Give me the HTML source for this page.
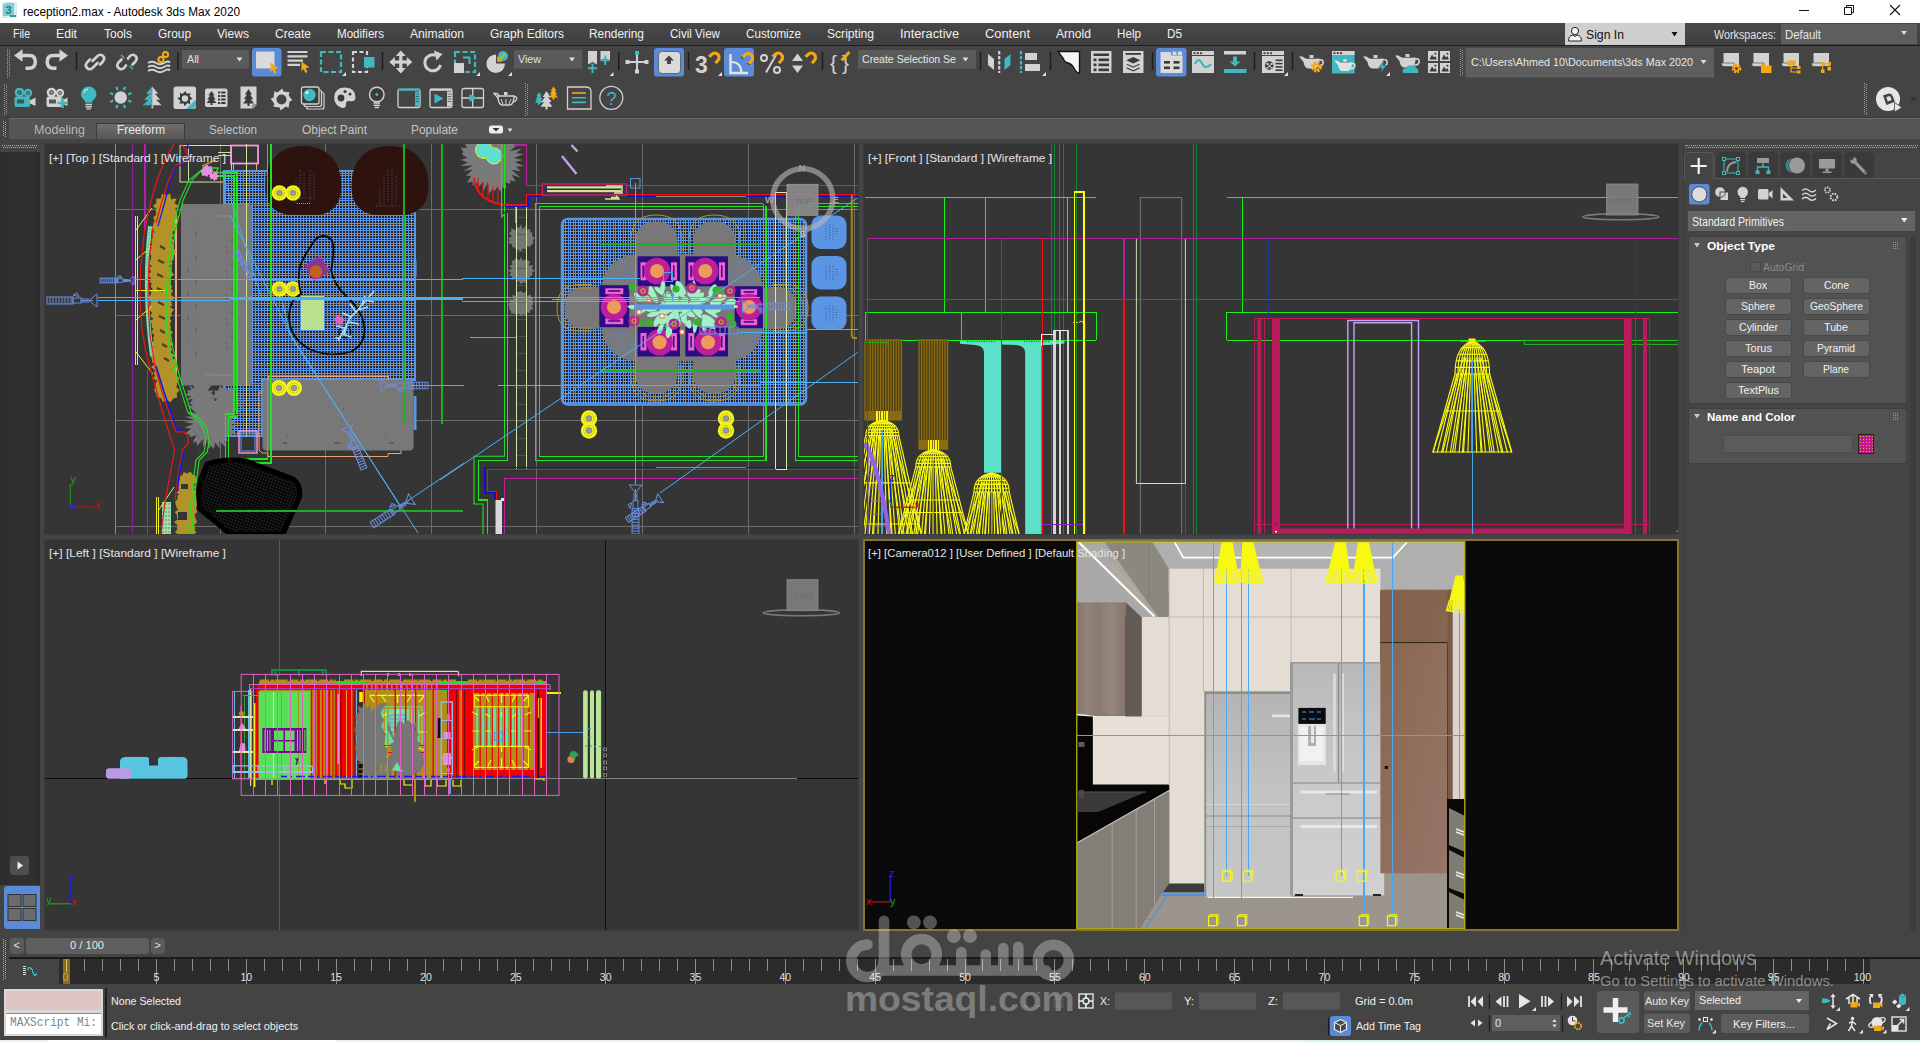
<!DOCTYPE html><html><head><meta charset="utf-8"><title>reception2.max - Autodesk 3ds Max 2020</title><style>
html,body{margin:0;padding:0;background:#444444;}
body{width:1920px;height:1042px;overflow:hidden;position:relative;font-family:"Liberation Sans",sans-serif;}
.a{position:absolute;display:block;}
.t{position:absolute;white-space:nowrap;transform-origin:0 50%;font-family:"Liberation Sans",sans-serif;}
.vp{position:absolute;overflow:hidden;background:#353535;border:1px solid #3b3b3b;box-sizing:border-box;}
svg{overflow:hidden}
</style></head><body>
<div class="a" style="left:0px;top:0px;width:1920px;height:23px;background:#ffffff;"></div>
<svg class="a" style="left:2px;top:2px" width="16" height="17" viewBox="0 0 16 17"><rect x="0" y="0" width="15" height="16" fill="#d6eef0"/><path d="M1 3 L4 1 L12 1 L12 12 L9 14 L1 14 Z" fill="#7fcdd3"/><text x="3.5" y="11.5" font-family="Liberation Sans" font-weight="bold" font-size="11" fill="#1c7f8a">3</text><rect x="8" y="13" width="6" height="2" fill="#2e9aa4"/></svg>
<span class="t" style="left:23.0px;top:3.5px;font-size:12px;line-height:16px;color:#000000;transform:scaleX(0.983);">reception2.max - Autodesk 3ds Max 2020</span>
<svg class="a" style="left:1780px;top:0" width="140" height="23" viewBox="1780 0 140 23"><path d="M1799 10.5 H1809" stroke="#111" stroke-width="1" fill="none"/><path d="M1844.5 7.5 H1851.5 V14.5 H1844.5 Z M1846.5 7.5 V5.5 H1853.5 V12.5 H1851.5" stroke="#111" stroke-width="1" fill="none"/><path d="M1890 5 L1900 15 M1900 5 L1890 15" stroke="#111" stroke-width="1.1" fill="none"/></svg>
<div class="a" style="left:0px;top:23px;width:1920px;height:23px;background:linear-gradient(#484848,#3f3f3f);"></div>
<div class="a" style="left:0px;top:45px;width:1920px;height:1px;background:#1e1e1e;"></div>
<span class="t" style="left:13.0px;top:26.0px;font-size:12px;line-height:16px;color:#f0f0f0;transform:scaleX(0.879);">File</span>
<span class="t" style="left:56.0px;top:26.0px;font-size:12px;line-height:16px;color:#f0f0f0;transform:scaleX(1.016);">Edit</span>
<span class="t" style="left:104.0px;top:26.0px;font-size:12px;line-height:16px;color:#f0f0f0;">Tools</span>
<span class="t" style="left:158.0px;top:26.0px;font-size:12px;line-height:16px;color:#f0f0f0;transform:scaleX(0.989);">Group</span>
<span class="t" style="left:217.0px;top:26.0px;font-size:12px;line-height:16px;color:#f0f0f0;transform:scaleX(1.007);">Views</span>
<span class="t" style="left:275.0px;top:26.0px;font-size:12px;line-height:16px;color:#f0f0f0;">Create</span>
<span class="t" style="left:337.0px;top:26.0px;font-size:12px;line-height:16px;color:#f0f0f0;transform:scaleX(0.965);">Modifiers</span>
<span class="t" style="left:410.0px;top:26.0px;font-size:12px;line-height:16px;color:#f0f0f0;transform:scaleX(1.012);">Animation</span>
<span class="t" style="left:490.0px;top:26.0px;font-size:12px;line-height:16px;color:#f0f0f0;">Graph Editors</span>
<span class="t" style="left:589.0px;top:26.0px;font-size:12px;line-height:16px;color:#f0f0f0;transform:scaleX(0.993);">Rendering</span>
<span class="t" style="left:670.0px;top:26.0px;font-size:12px;line-height:16px;color:#f0f0f0;transform:scaleX(0.965);">Civil View</span>
<span class="t" style="left:746.0px;top:26.0px;font-size:12px;line-height:16px;color:#f0f0f0;transform:scaleX(0.970);">Customize</span>
<span class="t" style="left:827.0px;top:26.0px;font-size:12px;line-height:16px;color:#f0f0f0;transform:scaleX(1.007);">Scripting</span>
<span class="t" style="left:900.0px;top:26.0px;font-size:12px;line-height:16px;color:#f0f0f0;transform:scaleX(1.066);">Interactive</span>
<span class="t" style="left:985.0px;top:26.0px;font-size:12px;line-height:16px;color:#f0f0f0;transform:scaleX(1.071);">Content</span>
<span class="t" style="left:1056.0px;top:26.0px;font-size:12px;line-height:16px;color:#f0f0f0;transform:scaleX(1.009);">Arnold</span>
<span class="t" style="left:1116.5px;top:26.0px;font-size:12px;line-height:16px;color:#f0f0f0;transform:scaleX(0.973);">Help</span>
<span class="t" style="left:1166.5px;top:26.0px;font-size:12px;line-height:16px;color:#f0f0f0;transform:scaleX(0.978);">D5</span>
<div class="a" style="left:1565px;top:23px;width:120px;height:22px;background:#cfcfcf;"></div>
<svg class="a" style="left:1565px;top:23px" width="120" height="22" viewBox="1565 23 120 22"><circle cx="1575" cy="31" r="3.6" fill="#f4f4f4" stroke="#222" stroke-width="1"/><path d="M1568.5 41 Q1568.5 35.5 1573 35 L1575 36.5 L1577 35 Q1581.5 35.5 1581.5 41 Z" fill="#f4f4f4" stroke="#222" stroke-width="1"/><path d="M1671.5 32 h6 l-3 4.5 z" fill="#111"/></svg>
<span class="t" style="left:1586.0px;top:26.5px;font-size:12px;line-height:16px;color:#111;transform:scaleX(1.017);">Sign In</span>
<span class="t" style="left:1714.0px;top:26.5px;font-size:12px;line-height:16px;color:#e0e0e0;transform:scaleX(0.897);">Workspaces:</span>
<div class="a" style="left:1781px;top:24px;width:136px;height:20px;background:#5e5e5e;"></div>
<span class="t" style="left:1785.0px;top:26.5px;font-size:12px;line-height:16px;color:#e6e6e6;transform:scaleX(0.947);">Default</span>
<svg class="a" style="left:1900px;top:30px" width="10" height="8"><path d="M1 1 h6 l-3 4 z" fill="#ddd"/></svg>
<svg class="a" style="left:0;top:46px" width="1920" height="72" viewBox="0 46 1920 72">
<path d="M7.5 49 V78" stroke="#9a9a9a" stroke-width="1" stroke-dasharray="1 1" shape-rendering="crispEdges"/><path d="M9.5 50 V78" stroke="#9a9a9a" stroke-width="1" stroke-dasharray="1 1" shape-rendering="crispEdges"/>
<path d="M21 55.5 H29.5 Q35.3 55.5 35.3 61.8 Q35.3 68.3 29 68.3 H25.5" fill="none" stroke="#d2d2d2" stroke-width="3.5"/><path d="M14 55.5 L22.5 49.3 V61.7 Z" fill="#d2d2d2"/>
<path d="M60 55.5 H53.2 Q47.2 55.5 47.2 61.8 Q47.2 68.3 53.5 68.3 H56.5" fill="none" stroke="#d2d2d2" stroke-width="3.5"/><path d="M68 55.5 L59.5 49.3 V61.7 Z" fill="#d2d2d2"/>
<path d="M76.5 52 V70" stroke="#1d1d1d" stroke-width="1.4"/>
<g fill="none" stroke="#d2d2d2" stroke-width="2.6" stroke-linecap="round"><path d="M92.5 61 L97.5 56 Q100.5 53.5 103 56 Q105.5 58.5 103 61.5 L100 64.5"/><path d="M97.5 63 L92.5 68 Q89.5 70.5 87 68 Q84.5 65.5 87 62.5 L90 59.5"/></g>
<g fill="none" stroke="#d2d2d2" stroke-width="2.6" stroke-linecap="round"><path d="M128 58.5 L130 56 Q133 53.5 135.5 56 Q138 58.5 135.5 61.5 L132.5 64.5"/><path d="M126 65.5 L124 68 Q121 70.5 118.5 68 Q116 65.5 118.5 62.5 L121.5 59.5"/></g><path d="M121 55 L124.5 58 M129.5 66 L133 69" stroke="#41b8bf" stroke-width="1.6"/>
<g fill="none" stroke="#d2d2d2" stroke-width="2"><path d="M148 63 Q152 60.5 156 63 T164 63 T170 62.5"/><path d="M148 67 Q152 64.5 156 67 T164 67 T170 66.5"/><path d="M148 71 Q152 68.5 156 71 T164 71 T170 70.5"/></g><g fill="none" stroke="#f4a914" stroke-width="2"><circle cx="161" cy="59.5" r="2.6"/><circle cx="165.5" cy="54.5" r="2.6"/></g>
<path d="M178 52 V70" stroke="#1d1d1d" stroke-width="1.4"/>
<rect x="182" y="50" width="67" height="18.5" fill="#5a5a5a"/><path d="M236.5 57.5 h6 l-3 4 z" fill="#ddd"/>
<rect x="252" y="48" width="29.5" height="28.5" rx="3" fill="#5b8bd8"/>
<rect x="256" y="51.5" width="18.5" height="17" fill="#dadada"/><path d="M270.5 62.5 L278.5 68.5 L274.6 69.2 L276.4 73 L274.4 73.9 L272.6 70 L270.5 72.5 Z" fill="#f4a914"/>
<g stroke="#d2d2d2" stroke-width="2.2"><path d="M287.5 52 H307.5 M287.5 56.3 H307.5 M287.5 60.6 H303 M287.5 64.9 H300"/></g><path d="M301.5 61.5 L309.5 67.5 L305.6 68.2 L307.4 72 L305.4 72.9 L303.6 69 L301.5 71.5 Z" fill="#f4a914"/>
<rect x="321" y="52" width="20" height="20" fill="none" stroke="#41b8bf" stroke-width="2.2" stroke-dasharray="5 2.5"/>
<path d="M346 76 h-4 l4 -4 z" fill="#e8e0d0"/>
<rect x="353" y="52" width="14" height="20" fill="none" stroke="#d2d2d2" stroke-width="2.2" stroke-dasharray="4 2.5"/><rect x="364" y="57" width="10.5" height="10.5" fill="#41b8bf"/>
<path d="M382.5 52 V70" stroke="#1d1d1d" stroke-width="1.4"/>
<g fill="#d2d2d2"><rect x="399.2" y="54" width="3.2" height="16"/><rect x="392.8" y="60.4" width="16" height="3.2"/><path d="M400.8 50.5 l5 5.5 h-10 z M400.8 73.5 l5 -5.5 h-10 z M389.3 62 l5.5 -5 v10 z M412.3 62 l-5.5 -5 v10 z"/></g>
<path d="M440.5 65 A8 8 0 1 1 435.5 55.3" fill="none" stroke="#d2d2d2" stroke-width="3"/><path d="M434 50.5 L442.5 54 L436.5 60.5 Z" fill="#d2d2d2"/>
<rect x="455" y="52" width="20" height="20" fill="none" stroke="#41b8bf" stroke-width="2.2" stroke-dasharray="5 2.5"/><rect x="454" y="63" width="10" height="10" fill="#d2d2d2"/><path d="M463 57.5 H469.5 V64" fill="none" stroke="#41b8bf" stroke-width="2"/>
<path d="M480 76 h-4 l4 -4 z" fill="#e8e0d0"/>
<path d="M496 54.5 A9.3 9.3 0 1 0 505 63.5 L496 63.5 Z" fill="#d2d2d2"/><circle cx="503" cy="56" r="5" fill="#41b8bf"/><path d="M505 54 L498.5 60.5 M498 56.8 V61 H502.2" stroke="#f4a914" stroke-width="1.7" fill="none"/>
<path d="M512 76 h-4 l4 -4 z" fill="#e8e0d0"/>
<rect x="514" y="50" width="68" height="18.5" fill="#5a5a5a"/><path d="M569 57.5 h6 l-3 4 z" fill="#ddd"/>
<path d="M588 51 H597 V64.5 L592.5 62 L588 64.5 Z M600.5 51 H610 V60.5 L605.2 58 L600.5 60.5 Z" fill="#d2d2d2"/><path d="M592.5 63.5 V73 M588 68.2 H597 M605.2 55.5 V65 M600.7 60.2 H609.7" stroke="#41b8bf" stroke-width="2"/>
<path d="M613.5 76 h-4 l4 -4 z" fill="#e8e0d0"/>
<path d="M618.7 52 V70" stroke="#1d1d1d" stroke-width="1.4"/>
<path d="M637 54 V72 M627 62 H647" stroke="#d2d2d2" stroke-width="2"/><rect x="635" y="51" width="4" height="4" fill="#41b8bf"/><rect x="635" y="69.5" width="4" height="4" fill="#d2d2d2"/><rect x="625.5" y="60" width="4" height="4" fill="#d2d2d2"/><rect x="644.5" y="60" width="4" height="4" fill="#d2d2d2"/>
<rect x="654" y="48" width="30" height="28.5" rx="3" fill="#5b8bd8"/>
<rect x="658.5" y="51.5" width="22" height="22" rx="3.5" fill="#dadada" stroke="#555" stroke-width="0.8"/><path d="M669 55.5 l5 5 h-3 v3.5 h-4 v-3.5 h-3 z" fill="#444"/>
<path d="M688.5 52 V70" stroke="#1d1d1d" stroke-width="1.4"/>
<text x="695" y="73" font-family="Liberation Sans" font-weight="bold" font-size="23" fill="#d2d2d2">3</text>
<g transform="translate(706.5 51.5) scale(1.0)"><path d="M2.2 5.6 L5.2 2.9 A4.3 4.3 0 0 1 11.3 9 L8.6 12" fill="none" stroke="#f4a914" stroke-width="3.1"/><path d="M1.2 4.4 L3.4 6.9 M7.4 10.9 L9.7 13.2" stroke="#444" stroke-width="1.1"/></g>
<path d="M722 76 h-4 l4 -4 z" fill="#e8e0d0"/>
<rect x="724" y="48" width="30" height="28.5" rx="3" fill="#5b8bd8"/>
<path d="M730.5 54 V73 H748" fill="none" stroke="#e4e4e4" stroke-width="2.4"/><path d="M731 62 Q741 62 741.5 72.5" fill="none" stroke="#e4e4e4" stroke-width="2.2"/>
<g transform="translate(740 52) scale(1.0)"><path d="M2.2 5.6 L5.2 2.9 A4.3 4.3 0 0 1 11.3 9 L8.6 12" fill="none" stroke="#f4a914" stroke-width="3.1"/><path d="M1.2 4.4 L3.4 6.9 M7.4 10.9 L9.7 13.2" stroke="#444" stroke-width="1.1"/></g>
<circle cx="764" cy="58" r="3" fill="none" stroke="#d2d2d2" stroke-width="2"/><circle cx="777" cy="70" r="3" fill="none" stroke="#d2d2d2" stroke-width="2"/><path d="M766 72.5 L776 55" stroke="#d2d2d2" stroke-width="2"/>
<g transform="translate(770 51.5) scale(1.0)"><path d="M2.2 5.6 L5.2 2.9 A4.3 4.3 0 0 1 11.3 9 L8.6 12" fill="none" stroke="#f4a914" stroke-width="3.1"/><path d="M1.2 4.4 L3.4 6.9 M7.4 10.9 L9.7 13.2" stroke="#444" stroke-width="1.1"/></g>
<path d="M797.5 53.5 l5.5 7.5 h-11 z M797.5 73 l5.5 -7.5 h-11 z" fill="#d2d2d2"/>
<g transform="translate(803 51.5) scale(1.0)"><path d="M2.2 5.6 L5.2 2.9 A4.3 4.3 0 0 1 11.3 9 L8.6 12" fill="none" stroke="#f4a914" stroke-width="3.1"/><path d="M1.2 4.4 L3.4 6.9 M7.4 10.9 L9.7 13.2" stroke="#444" stroke-width="1.1"/></g>
<path d="M822.5 52 V70" stroke="#1d1d1d" stroke-width="1.4"/>
<text x="830" y="70" font-family="Liberation Sans" font-size="21" fill="#d2d2d2">{</text><text x="842" y="70" font-family="Liberation Sans" font-size="21" fill="#d2d2d2">}</text><path d="M841.5 60.5 L849.5 52" stroke="#f4a914" stroke-width="3"/><path d="M840 63 l1 -3 l2 2 z" fill="#333"/>
<rect x="858" y="50" width="118" height="18.5" fill="#5a5a5a"/><path d="M962.5 57.5 h6 l-3 4 z" fill="#ddd"/>
<path d="M980.5 52 V70" stroke="#1d1d1d" stroke-width="1.4"/>
<path d="M988 54 L994 59 V70 L988 65 Z" fill="#d2d2d2"/><path d="M1010.5 54 L1004.5 59 V70 L1010.5 65 Z" fill="#41b8bf"/><path d="M999.2 51 V73" stroke="#d2d2d2" stroke-width="2.2" stroke-dasharray="3.5 1.5"/>
<path d="M1021 51 V73" stroke="#41b8bf" stroke-width="2.2" stroke-dasharray="3.5 1.5"/><rect x="1025" y="53" width="12" height="7" fill="#d2d2d2"/><rect x="1025" y="64" width="15" height="7" fill="#d2d2d2"/>
<path d="M1046 76 h-4 l4 -4 z" fill="#e8e0d0"/>
<path d="M1050.5 52 V70" stroke="#1d1d1d" stroke-width="1.4"/>
<path d="M1058 51.5 H1079.5 V73 Q1076.5 73 1074.5 69 Q1072 64 1068 63 Q1064.5 62.5 1063 58 Z" fill="#f4f4f4" stroke="#111" stroke-width="1.3"/>
<rect x="1091" y="51" width="20.5" height="22" fill="#d2d2d2"/><g fill="#3a3a3a"><rect x="1093.5" y="53.5" width="15.5" height="2.5"/><rect x="1093.5" y="58.5" width="3" height="2.7"/><rect x="1098.5" y="58.5" width="10.5" height="2.7"/><rect x="1093.5" y="63.5" width="3" height="2.7"/><rect x="1098.5" y="63.5" width="10.5" height="2.7"/><rect x="1093.5" y="68.5" width="3" height="2.7"/><rect x="1098.5" y="68.5" width="10.5" height="2.7"/></g>
<rect x="1123" y="51" width="20.5" height="22" fill="#d2d2d2"/><g fill="#3a3a3a"><rect x="1125.5" y="53" width="15.5" height="1.8"/><path d="M1133.2 57 l7 3.2 l-7 3.2 l-7 -3.2 z M1127.5 64 l5.7 2.6 l5.7 -2.6 l1.3 .6 l-7 3.2 l-7 -3.2 z M1127.5 67.6 l5.7 2.6 l5.7 -2.6 l1.3 .6 l-7 3.2 l-7 -3.2 z"/></g>
<path d="M1152.5 52 V70" stroke="#1d1d1d" stroke-width="1.4"/>
<rect x="1156" y="48" width="30.5" height="28.5" rx="3" fill="#5b8bd8"/>
<path d="M1160.5 52 H1171 V55.5 H1182.5 V73 H1160.5 Z" fill="#dadada"/><rect x="1172.5" y="51.5" width="4" height="3.5" fill="#dadada"/><rect x="1178" y="51.5" width="4" height="3.5" fill="#dadada"/><g fill="#3a3a3a"><rect x="1164" y="61" width="6" height="2.6"/><rect x="1173.5" y="61" width="6" height="2.6"/><rect x="1164" y="66.5" width="6" height="2.6"/><rect x="1173.5" y="66.5" width="6" height="2.6"/></g>
<rect x="1192" y="51" width="22" height="22" fill="#d2d2d2"/><rect x="1192" y="55" width="22" height="1" fill="#444"/><g fill="#3a3a3a"><rect x="1193.5" y="52.3" width="2" height="1.8"/><rect x="1196.8" y="52.3" width="2" height="1.8"/><rect x="1200.1" y="52.3" width="2" height="1.8"/></g><path d="M1195 64 Q1198.5 56.5 1202 63.5 T1211 64" fill="none" stroke="#41b8bf" stroke-width="2.2"/>
<rect x="1224" y="51" width="22" height="3.5" fill="#d2d2d2"/><rect x="1224" y="69" width="22.5" height="4" fill="#41b8bf"/><path d="M1233 56.5 h4 v5 h3.5 l-5.5 5 l-5.5 -5 h3.5 z" fill="#41b8bf"/>
<path d="M1254.5 52 V70" stroke="#1d1d1d" stroke-width="1.4"/>
<rect x="1262" y="51" width="22" height="22" fill="#d2d2d2"/><rect x="1262" y="55" width="22" height="1" fill="#444"/><g fill="#3a3a3a"><rect x="1263.5" y="52.3" width="2" height="1.8"/><rect x="1266.8" y="52.3" width="2" height="1.8"/><rect x="1270.1" y="52.3" width="2" height="1.8"/><rect x="1275.5" y="59.5" width="7" height="1.6"/><rect x="1275.5" y="62.8" width="7" height="1.6"/><rect x="1275.5" y="66.1" width="7" height="1.6"/><rect x="1275.5" y="69.4" width="7" height="1.6"/></g><circle cx="1269.2" cy="65.5" r="4.3" fill="#3a3a3a"/><path d="M1266.5 63 h2 v2 h-2z M1270.5 63 h2 v2 h-2z M1268.5 65 h2 v2 h-2z M1266.5 67 h2 v1.5 h-2z M1270.5 67 h2 v1.5 h-2z" fill="#d2d2d2"/>
<path d="M1288 76 h-4 l4 -4 z" fill="#e8e0d0"/>
<path d="M1292.5 52 V70" stroke="#1d1d1d" stroke-width="1.4"/>
<path d="M1303.5 58.5 Q1303 67.0 1307.5 68.5 H1315.5 Q1320 67.0 1319.5 58.5 Z" fill="#d2d2d2"/><path d="M1303.5 62.0 L1299 56.5 L1302.5 56.5 L1306 59.0 Z" fill="#d2d2d2"/><path d="M1319 60.0 Q1324 59.0 1323 63.5 Q1322 66.5 1318.5 66.0" fill="none" stroke="#d2d2d2" stroke-width="1.7"/><rect x="1309.5" y="55.0" width="4" height="3.2" fill="#d2d2d2"/><rect x="1306" y="57.9" width="11" height="1" fill="#444444" opacity="0.5"/>
<circle cx="1316.5" cy="67" r="4.2" fill="none" stroke="#f4a914" stroke-width="2.6" stroke-dasharray="2.2 1.1"/><circle cx="1316.5" cy="67" r="2.6" fill="none" stroke="#f4a914" stroke-width="1.6"/>
<rect x="1332" y="51" width="22.5" height="22.5" fill="#41b8bf"/><rect x="1332" y="51" width="22.5" height="4" fill="#d2d2d2"/><g fill="#3a3a3a"><rect x="1333.5" y="52.2" width="2" height="1.8"/><rect x="1336.8" y="52.2" width="2" height="1.8"/><rect x="1340.1" y="52.2" width="2" height="1.8"/></g>
<g transform="translate(1344.5 64) scale(0.86)"><path d="M-7.5 -2 Q-8 6.5 -3.5 8 H4.5 Q9 6.5 8.5 -2 Z" fill="#e2e2e2"/><path d="M-7.5 1.5 L-12 -4 L-8.5 -4 L-5 -1.5 Z" fill="#e2e2e2"/><path d="M8 -0.5 Q13 -1.5 12 3 Q11 6 7.5 5.5" fill="none" stroke="#e2e2e2" stroke-width="1.7"/><rect x="-1.5" y="-5.5" width="4" height="3.2" fill="#e2e2e2"/><rect x="-5" y="-2.6" width="11" height="1" fill="#444444" opacity="0.5"/></g>
<path d="M1367.5 58.5 Q1367 67.0 1371.5 68.5 H1379.5 Q1384 67.0 1383.5 58.5 Z" fill="#d2d2d2"/><path d="M1367.5 62.0 L1363 56.5 L1366.5 56.5 L1370 59.0 Z" fill="#d2d2d2"/><path d="M1383 60.0 Q1388 59.0 1387 63.5 Q1386 66.5 1382.5 66.0" fill="none" stroke="#d2d2d2" stroke-width="1.7"/><rect x="1373.5" y="55.0" width="4" height="3.2" fill="#d2d2d2"/><rect x="1370" y="57.9" width="11" height="1" fill="#444444" opacity="0.5"/>
<path d="M1384.5 60 L1378.5 68 H1382 L1380 73.5 L1386.5 65.5 H1383 Z" fill="#41b8bf" stroke="#444" stroke-width="0.6"/>
<path d="M1390 76 h-4 l4 -4 z" fill="#e8e0d0"/>
<path d="M1399.5 57.5 Q1399 66.0 1403.5 67.5 H1411.5 Q1416 66.0 1415.5 57.5 Z" fill="#d2d2d2"/><path d="M1399.5 61.0 L1395 55.5 L1398.5 55.5 L1402 58.0 Z" fill="#d2d2d2"/><path d="M1415 59.0 Q1420 58.0 1419 62.5 Q1418 65.5 1414.5 65.0" fill="none" stroke="#d2d2d2" stroke-width="1.7"/><rect x="1405.5" y="54.0" width="4" height="3.2" fill="#d2d2d2"/><rect x="1402" y="56.9" width="11" height="1" fill="#444444" opacity="0.5"/>
<path d="M1403 73 Q1401.5 68.5 1406 68 Q1407.5 64.5 1411.5 65.5 Q1415 64.5 1416 68 Q1419 68.5 1418 73 Z" fill="#41b8bf"/>
<rect x="1428" y="51" width="10" height="10" fill="#d2d2d2"/><path d="M1429.5 59.5 L1432 54.5 L1434 57.5 L1435.5 56 L1436.8 59.5 Z" fill="#3a3a3a"/><rect x="1434.5" y="52.8" width="1.8" height="1.8" fill="#3a3a3a"/>
<rect x="1440" y="51" width="10" height="10" fill="#d2d2d2"/><path d="M1441.5 59.5 L1444 54.5 L1446 57.5 L1447.5 56 L1448.8 59.5 Z" fill="#3a3a3a"/><rect x="1446.5" y="52.8" width="1.8" height="1.8" fill="#3a3a3a"/>
<rect x="1428" y="63" width="10" height="10" fill="#d2d2d2"/><path d="M1429.5 71.5 L1432 66.5 L1434 69.5 L1435.5 68 L1436.8 71.5 Z" fill="#3a3a3a"/><rect x="1434.5" y="64.8" width="1.8" height="1.8" fill="#3a3a3a"/>
<rect x="1440" y="63" width="10" height="10" fill="#d2d2d2"/><path d="M1441.5 71.5 L1444 66.5 L1446 69.5 L1447.5 68 L1448.8 71.5 Z" fill="#3a3a3a"/><rect x="1446.5" y="64.8" width="1.8" height="1.8" fill="#3a3a3a"/>
<path d="M1460.5 49 V76" stroke="#9a9a9a" stroke-width="1" stroke-dasharray="1 1" shape-rendering="crispEdges"/><path d="M1462.5 50 V76" stroke="#9a9a9a" stroke-width="1" stroke-dasharray="1 1" shape-rendering="crispEdges"/>
<rect x="1465.5" y="48" width="248.5" height="29.5" fill="#5e5e5e"/><path d="M1700.5 60 h6 l-3 4 z" fill="#ddd"/>
<path d="M1723.5 53 H1739 V66 H1725.5 Q1723.5 66 1723.5 64 Z" fill="#d2d2d2"/><path d="M1721.5 63 H1734 Q1735 66.5 1732.5 66.5 H1724 Q1721.5 66.5 1721.5 63 Z" fill="#d2d2d2" stroke="#444" stroke-width="0.6"/>
<circle cx="1736.5" cy="68.5" r="3.6" fill="none" stroke="#f4a914" stroke-width="2.4" stroke-dasharray="2 1"/><circle cx="1736.5" cy="68.5" r="2.2" fill="none" stroke="#f4a914" stroke-width="1.4"/>
<path d="M1753.5 53 H1769 V66 H1755.5 Q1753.5 66 1753.5 64 Z" fill="#d2d2d2"/><path d="M1751.5 63 H1764 Q1765 66.5 1762.5 66.5 H1754 Q1751.5 66.5 1751.5 63 Z" fill="#d2d2d2" stroke="#444" stroke-width="0.6"/>
<path d="M1761 64 H1765 L1766 65.5 H1771.5 V73 H1761 Z" fill="#f4a914"/>
<path d="M1783.5 53 H1799 V66 H1785.5 Q1783.5 66 1783.5 64 Z" fill="#d2d2d2"/><path d="M1781.5 63 H1794 Q1795 66.5 1792.5 66.5 H1784 Q1781.5 66.5 1781.5 63 Z" fill="#d2d2d2" stroke="#444" stroke-width="0.6"/>
<rect x="1787.5" y="60.5" width="8" height="4.5" fill="#f4a914"/><path d="M1791 65 V72 H1797 M1791 68 H1797" stroke="#f4a914" stroke-width="1.2" fill="none"/><rect x="1797" y="66" width="3.5" height="3" fill="#f4a914"/><rect x="1797" y="70.5" width="3.5" height="3" fill="#f4a914"/>
<path d="M1813.5 53 H1829 V66 H1815.5 Q1813.5 66 1813.5 64 Z" fill="#d2d2d2"/><path d="M1811.5 63 H1824 Q1825 66.5 1822.5 66.5 H1814 Q1811.5 66.5 1811.5 63 Z" fill="#d2d2d2" stroke="#444" stroke-width="0.6"/>
<rect x="1821" y="62" width="3.5" height="3.5" fill="#f4a914"/><rect x="1827.5" y="62" width="3.5" height="3.5" fill="#f4a914"/><rect x="1821" y="69.5" width="3.5" height="3.5" fill="#f4a914"/><rect x="1827.5" y="67" width="3.5" height="3.5" fill="#f4a914"/><path d="M1822.7 65 V70 M1824 63.7 H1828 M1829.2 65 V67.5" stroke="#f4a914" stroke-width="1.1"/>
<path d="M4.5 84 V115" stroke="#9a9a9a" stroke-width="1" stroke-dasharray="1 1" shape-rendering="crispEdges"/><path d="M6.5 85 V115" stroke="#9a9a9a" stroke-width="1" stroke-dasharray="1 1" shape-rendering="crispEdges"/>
<circle cx="19.5" cy="92.5" r="4.8" fill="#41b8bf"/><circle cx="28" cy="93.0" r="4.2" fill="#41b8bf"/><circle cx="19.5" cy="92.5" r="2.2" fill="#444444"/><circle cx="28" cy="93.0" r="1.9" fill="#444444"/><circle cx="19.5" cy="92.5" r="1" fill="#41b8bf"/><circle cx="28" cy="93.0" r="0.9" fill="#41b8bf"/><rect x="14.5" y="96.5" width="15.5" height="10.5" rx="2" fill="#41b8bf"/><path d="M30 100.5 L35.5 97.5 V106.0 L30 103.5 Z" fill="#d2d2d2"/><rect x="17" y="99.5" width="7" height="4" fill="#444444" opacity="0.85"/>
<circle cx="51.5" cy="92.5" r="4.8" fill="#d2d2d2"/><circle cx="60" cy="93.0" r="4.2" fill="#d2d2d2"/><circle cx="51.5" cy="92.5" r="2.2" fill="#444444"/><circle cx="60" cy="93.0" r="1.9" fill="#444444"/><circle cx="51.5" cy="92.5" r="1" fill="#d2d2d2"/><circle cx="60" cy="93.0" r="0.9" fill="#d2d2d2"/><rect x="46.5" y="96.5" width="15.5" height="10.5" rx="2" fill="#d2d2d2"/><path d="M62 100.5 L67.5 97.5 V106.0 L62 103.5 Z" fill="#d2d2d2"/><rect x="49" y="99.5" width="7" height="4" fill="#444444" opacity="0.85"/>
<path d="M62.5 98 V108 M57.5 103 H67.5" stroke="#41b8bf" stroke-width="2.6"/>
<path d="M80.95 94.25 A7.75 7.75 0 1 1 96.45 94.25 Q96.45 97.75 92.1875 101.25 V102.75 H85.2125 V101.25 Q80.95 97.75 80.95 94.25 Z" fill="#41b8bf"/><rect x="85.44500000000001" y="103.75" width="6.51" height="1.5" fill="#d2d2d2"/><rect x="85.44500000000001" y="106.05" width="6.51" height="1.5" fill="#d2d2d2"/><rect x="86.53" y="108.25" width="4.340000000000001" height="1.3" fill="#d2d2d2"/>
<path d="M84 93 Q84.5 89.5 88 89" fill="none" stroke="#d8f4f5" stroke-width="1.1"/>
<circle cx="120.7" cy="97.5" r="6.2" fill="#d2d2d2"/>
<path d="M128.1 100.6 L131.3 101.9" stroke="#41b8bf" stroke-width="2.2"/>
<path d="M123.8 104.9 L125.1 108.1" stroke="#41b8bf" stroke-width="2.2"/>
<path d="M117.6 104.9 L116.3 108.1" stroke="#41b8bf" stroke-width="2.2"/>
<path d="M113.3 100.6 L110.1 101.9" stroke="#41b8bf" stroke-width="2.2"/>
<path d="M113.3 94.4 L110.1 93.1" stroke="#41b8bf" stroke-width="2.2"/>
<path d="M117.6 90.1 L116.3 86.9" stroke="#41b8bf" stroke-width="2.2"/>
<path d="M123.8 90.1 L125.1 86.9" stroke="#41b8bf" stroke-width="2.2"/>
<path d="M128.1 94.4 L131.3 93.1" stroke="#41b8bf" stroke-width="2.2"/>
<clipPath id="tl"><rect x="140" y="84" width="12.2" height="30"/></clipPath><clipPath id="tr"><rect x="152.2" y="84" width="12" height="30"/></clipPath>
<g clip-path="url(#tl)"><path d="M152.2 86.5 L158.28 93.76 H154.85999999999999 L160.17999999999998 99.7 H156.0 L161.7 105.2 H153.2 V108.5 H151.2 V105.2 H142.7 L148.39999999999998 99.7 H144.22 L149.54 93.76 H146.11999999999998 Z" fill="#41b8bf"/></g><g clip-path="url(#tr)"><path d="M152.2 86.5 L158.28 93.76 H154.85999999999999 L160.17999999999998 99.7 H156.0 L161.7 105.2 H153.2 V108.5 H151.2 V105.2 H142.7 L148.39999999999998 99.7 H144.22 L149.54 93.76 H146.11999999999998 Z" fill="#d2d2d2"/></g>
<path d="M145 104 h1 M147 101 h1 M149 104 h1 M147 107 h1 M149 98 h1 M150 94 h1 M151 101 h1 M145 107.5 h1 M149.5 107.5 h1 M151 90 h1 M151 105 h1 M143 106 h1" stroke="#2a6b70" stroke-width="1"/>
<rect x="173.5" y="86.5" width="22.5" height="22.5" rx="2.5" fill="#d2d2d2"/>
<path d="M189.6 96.0 L192.8 99.2 L190.1 99.6 L190.0 100.0 L190.0 104.5 L187.8 102.9 L187.5 103.1 L184.3 106.3 L183.9 103.6 L183.5 103.5 L179.0 103.5 L180.6 101.3 L180.4 101.0 L177.2 97.8 L179.9 97.4 L180.0 97.0 L180.0 92.5 L182.2 94.1 L182.5 93.9 L185.7 90.7 L186.1 93.4 L186.5 93.5 L191.0 93.5 L189.4 95.7 Z" fill="#3a3a3a"/><circle cx="185" cy="98.5" r="4.9" fill="#3a3a3a"/>
<circle cx="185" cy="98.5" r="3.2" fill="#d2d2d2"/>
<path d="M196 99.5 V106 L193 109 H186 Z" fill="#41b8bf"/><path d="M186 99.5 H196 L186 109 Z" fill="#d2d2d2" opacity="0"/>
<rect x="205" y="88.5" width="22.5" height="18.5" rx="2" fill="#d2d2d2"/>
<path d="M211.5 91 L214.7 95.62 H212.9 L215.7 99.4 H213.5 L216.5 102.9 H212.5 V105 H210.5 V102.9 H206.5 L209.5 99.4 H207.3 L210.1 95.62 H208.3 Z" fill="#3a3a3a"/>
<g fill="#3a3a3a"><rect x="218" y="91.5" width="2.2" height="2"/><rect x="221.2" y="91.5" width="4.3" height="2"/><rect x="218" y="95" width="2.2" height="2"/><rect x="221.2" y="95" width="4.3" height="2"/><rect x="218" y="98.5" width="2.2" height="2"/><rect x="221.2" y="98.5" width="4.3" height="2"/><rect x="218" y="102" width="2.2" height="2"/><rect x="221.2" y="102" width="4.3" height="2"/></g>
<path d="M240.5 86.5 H256.5 V105 L253 108.5 H240.5 Z" fill="#d2d2d2"/><path d="M253 108.5 V105 H256.5" fill="none" stroke="#3a3a3a" stroke-width="0.8"/>
<path d="M248.5 89 L252.02 94.61 H250.04 L253.12 99.2 H250.7 L254.0 103.45 H249.5 V106 H247.5 V103.45 H243.0 L246.3 99.2 H243.88 L246.96 94.61 H244.98 Z" fill="#3a3a3a"/>
<path d="M288.8 95.5 L292.4 100.5 L289.6 101.2 L289.5 101.8 L288.5 107.9 L286.0 106.5 L285.5 106.8 L280.5 110.4 L279.8 107.6 L279.2 107.5 L273.1 106.5 L274.5 104.0 L274.2 103.5 L270.6 98.5 L273.4 97.8 L273.5 97.2 L274.5 91.1 L277.0 92.5 L277.5 92.2 L282.5 88.6 L283.2 91.4 L283.8 91.5 L289.9 92.5 L288.5 95.0 Z" fill="#d2d2d2"/><circle cx="281.5" cy="99.5" r="8.0" fill="#d2d2d2"/>
<circle cx="281.5" cy="99.5" r="5" fill="#444444"/>
<rect x="306.5" y="92.5" width="17.5" height="16.5" rx="2" fill="none" stroke="#d2d2d2" stroke-width="1.2"/><rect x="304" y="90" width="17.5" height="16.5" rx="2" fill="#444444" stroke="#d2d2d2" stroke-width="1.2"/><rect x="301.5" y="87" width="17.5" height="17" rx="2" fill="#3a3a3a" stroke="#d2d2d2" stroke-width="1.3"/><circle cx="309.5" cy="95" r="6.2" fill="#41b8bf"/><circle cx="307" cy="92.5" r="1.6" fill="#d8f4f5"/>
<path d="M345 87.5 Q355.5 88 355.5 97.5 Q355 102.5 349.5 101 Q345.5 100.5 346 104.5 Q346 108.5 342 108 Q334 105.5 334.2 97 Q335 87.5 345 87.5 Z" fill="#d2d2d2"/><circle cx="341" cy="98" r="3.4" fill="#3a3a3a"/><circle cx="345" cy="91.5" r="1.6" fill="#3a3a3a"/><circle cx="350" cy="94" r="1.5" fill="#3a3a3a"/>
<circle cx="376.8" cy="94.5" r="7.3" fill="none" stroke="#d2d2d2" stroke-width="1.4"/><circle cx="376.8" cy="94.5" r="4.6" fill="none" stroke="#3a3a3a" stroke-width="2.4" stroke-dasharray="1.8 1.2"/><circle cx="376.8" cy="94.5" r="3.4" fill="#3a3a3a"/><circle cx="376.8" cy="94.5" r="1.5" fill="#41b8bf"/><rect x="373.6" y="102.3" width="6.4" height="1.5" fill="#d2d2d2"/><rect x="373.6" y="104.6" width="6.4" height="1.5" fill="#d2d2d2"/><rect x="374.6" y="106.8" width="4.4" height="1.4" fill="#d2d2d2"/>
<rect x="398" y="89.5" width="22" height="18" rx="1.5" fill="none" stroke="#d2d2d2" stroke-width="1.3"/><rect x="398" y="88.5" width="22" height="2.2" fill="#41b8bf"/><rect x="415" y="91.5" width="4.5" height="15" fill="#41b8bf"/><path d="M415.5 94 h3.5 M415.5 96.5 h3.5 M415.5 99 h3.5 M415.5 101.5 h3.5" stroke="#2a6b70" stroke-width="0.9"/>
<rect x="430" y="89.5" width="22" height="18" rx="1.5" fill="none" stroke="#d2d2d2" stroke-width="1.3"/><rect x="430" y="88.5" width="22" height="2.2" fill="#d2d2d2"/><rect x="447" y="91.5" width="4.5" height="15" fill="#d2d2d2"/><path d="M447.5 94 h3.5 M447.5 96.5 h3.5 M447.5 99 h3.5 M447.5 101.5 h3.5" stroke="#555" stroke-width="0.9"/><path d="M434.5 93.5 L443.5 98.5 L434.5 103.5 Z" fill="#41b8bf"/>
<rect x="462" y="88.5" width="21.5" height="19" rx="2" fill="none" stroke="#d2d2d2" stroke-width="1.3"/><path d="M472.7 88.5 V107.5 M462 98 H483.5" stroke="#d2d2d2" stroke-width="1.3"/><path d="M469.5 94 L477.5 98 L469.5 102 Z" fill="#41b8bf"/>
<path d="M498 96 Q498 104 502 105 H510 Q514 104 514 96 Z" fill="none" stroke="#d2d2d2" stroke-width="1.4"/><path d="M498 98 L494 93.5 H497 L499.5 96" fill="none" stroke="#d2d2d2" stroke-width="1.3"/><path d="M513.5 96.5 Q517.5 96 516.5 99.5 Q515.5 102 513 101.5" fill="none" stroke="#d2d2d2" stroke-width="1.3"/><rect x="504" y="92" width="3.5" height="3" fill="#d2d2d2"/><path d="M501 99 L503 104 M506 99 V104.5 M511 99 L509 104" stroke="#d2d2d2" stroke-width="1"/>
<path d="M525.5 83 V116" stroke="#9a9a9a" stroke-width="1" stroke-dasharray="1 1" shape-rendering="crispEdges"/><path d="M527.5 84 V116" stroke="#9a9a9a" stroke-width="1" stroke-dasharray="1 1" shape-rendering="crispEdges"/>
<path d="M539 92 L541.72 96.125 H540.19 L542.57 99.5 H540.7 L543.25 102.625 H540 V104.5 H538 V102.625 H534.75 L537.3 99.5 H535.43 L537.81 96.125 H536.28 Z" fill="#41b8bf"/>
<path d="M553.5 86.5 L556.38 90.79 H554.76 L557.28 94.3 H555.3 L558.0 97.55 H554.5 V99.5 H552.5 V97.55 H549.0 L551.7 94.3 H549.72 L552.24 90.79 H550.62 Z" fill="#f4a914"/>
<path d="M546.5 91 L550.34 97.105 H548.18 L551.54 102.1 H548.9 L552.5 106.725 H547.5 V109.5 H545.5 V106.725 H540.5 L544.1 102.1 H541.46 L544.82 97.105 H542.66 Z" fill="#d2d2d2"/>
<path d="M567.5 87 H586 Q591 87 591 92 V109 H567.5 Z" fill="none" stroke="#d2d2d2" stroke-width="1.3"/><path d="M572 93 H586" stroke="#f4a914" stroke-width="1.6"/><path d="M572 97.7 H586 M572 102.4 H586" stroke="#41b8bf" stroke-width="1.6"/>
<circle cx="611.3" cy="97.8" r="11.5" fill="none" stroke="#d2d2d2" stroke-width="1.3"/><text x="606.6" y="104.5" font-family="Liberation Sans" font-size="18" fill="#41b8bf">?</text>
<path d="M1864.5 83 V115" stroke="#9a9a9a" stroke-width="1" stroke-dasharray="1 1" shape-rendering="crispEdges"/><path d="M1866.5 84 V115" stroke="#9a9a9a" stroke-width="1" stroke-dasharray="1 1" shape-rendering="crispEdges"/>
<circle cx="1888" cy="99" r="12" fill="#e6e6e6"/><path d="M1884.5 94 H1889 Q1893.5 94 1893.5 98 V104 H1884.5 Z M1887 96.8 V101.2 H1891 V98 Q1891 96.8 1889.8 96.8 Z" fill="#444444" fill-rule="evenodd" transform="rotate(-20 1888 99)"/><path d="M1894.5 102.5 L1902 107.5 L1894.5 112 Z" fill="#e6e6e6" stroke="#444444" stroke-width="0.8"/>
<path d="M1911 97 l2.2 2 l-2.2 2 M1914 97 l2.2 2 l-2.2 2" fill="none" stroke="#222" stroke-width="0.9"/>
</svg>
<span class="t" style="left:187.0px;top:52.2px;font-size:11.5px;line-height:15.5px;color:#e0e0e0;transform:scaleX(0.939);">All</span>
<span class="t" style="left:518.0px;top:52.2px;font-size:11.5px;line-height:15.5px;color:#e0e0e0;transform:scaleX(0.931);">View</span>
<span class="t" style="left:862.0px;top:51.8px;font-size:11.5px;line-height:15.5px;color:#e6e6e6;transform:scaleX(0.919);">Create Selection Se</span>
<span class="t" style="left:1471.0px;top:55.2px;font-size:11.5px;line-height:15.5px;color:#e6e6e6;transform:scaleX(0.936);">C:\Users\Ahmed 10\Documents\3ds Max 2020</span>
<div class="a" style="left:0px;top:117px;width:1920px;height:1px;background:#3a3a3a;"></div>
<div class="a" style="left:9px;top:119px;width:1911px;height:20px;background:#555555;"></div>
<div class="a" style="left:9px;top:118px;width:1911px;height:1px;background:#6a6a6a;"></div>
<div class="a" style="left:0px;top:139px;width:1920px;height:4px;background:#444444;"></div>
<svg class="a" style="left:0;top:119px" width="9" height="20"><path d="M3.5 2 V18 M5.5 3 V18" stroke="#aaa" stroke-width="1" stroke-dasharray="1 1"/></svg>
<div class="a" style="left:96px;top:122.5px;width:89px;height:16.5px;background:linear-gradient(#6e6e6e,#585858);border:1px solid #3c3c3c;border-bottom:none;box-sizing:border-box;"></div>
<span class="t" style="left:34.0px;top:121.5px;font-size:12px;line-height:16px;color:#b8b8b8;transform:scaleX(1.047);">Modeling</span>
<span class="t" style="left:116.5px;top:121.5px;font-size:12px;line-height:16px;color:#e8e8e8;transform:scaleX(0.986);">Freeform</span>
<span class="t" style="left:208.5px;top:121.5px;font-size:12px;line-height:16px;color:#c4c4c4;transform:scaleX(0.972);">Selection</span>
<span class="t" style="left:301.5px;top:121.5px;font-size:12px;line-height:16px;color:#c4c4c4;transform:scaleX(0.994);">Object Paint</span>
<span class="t" style="left:410.5px;top:121.5px;font-size:12px;line-height:16px;color:#c4c4c4;transform:scaleX(0.992);">Populate</span>
<svg class="a" style="left:486px;top:122px" width="34" height="16" viewBox="486 122 34 16"><rect x="489" y="125.5" width="14" height="8" rx="2.5" fill="#eee"/><path d="M492.5 128 h7 l-3.5 3.5 z" fill="#333"/><path d="M507.5 128.5 h5 l-2.5 3.5 z" fill="#ddd"/></svg>
<svg class="a" style="left:0;top:143px" width="44" height="8"><path d="M2 2.5 H37" stroke="#b0b0b0" stroke-width="1" stroke-dasharray="1 1"/><path d="M3 4.5 H37" stroke="#b0b0b0" stroke-width="1" stroke-dasharray="1 1"/></svg>
<div class="a" style="left:0px;top:152px;width:40px;height:733px;background:linear-gradient(90deg,#2c2c2c,#303030 30%,#303030 80%,#2b2b2b);"></div>
<div class="a" style="left:0px;top:885px;width:40px;height:46px;background:#444;"></div>
<div class="a" style="left:10px;top:856px;width:19px;height:19px;background:#4e4e4e;border-radius:3px;"></div>
<svg class="a" style="left:10px;top:856px" width="19" height="19"><path d="M7.5 5.5 L13 9.5 L7.5 13.5 Z" fill="#f0f0f0"/></svg>
<div class="a" style="left:4px;top:886px;width:36px;height:43px;background:#5b8bd8;border-radius:3px 0 0 3px;"></div>
<svg class="a" style="left:4px;top:886px" width="36" height="43"><g fill="#6b6b6b" stroke="#333" stroke-width="1"><rect x="4" y="8.5" width="13" height="12"/><rect x="19" y="8.5" width="13" height="12"/><rect x="4" y="22.5" width="13" height="12"/><rect x="19" y="22.5" width="13" height="12"/></g></svg>
<div class="vp" style="left:44px;top:143px;width:815px;height:392px"></div>
<div class="vp" style="left:863px;top:143px;width:816px;height:392px"></div>
<div class="vp" style="left:44px;top:539px;width:815px;height:392px"></div>
<div class="vp" style="left:863px;top:539px;width:816px;height:392px;background:#0a0a0a;border:2px solid #8a7530"></div>
<div class="a" style="left:1683px;top:143px;width:1px;height:789px;background:#3b3b3b"></div>
<svg class="a" style="left:45px;top:144px" width="813" height="390" viewBox="45 144 813 390"><defs><pattern id="mesh" width="3" height="5" patternUnits="userSpaceOnUse"><rect width="3" height="5" fill="#5893ec"/><rect x="1" y="1" width="2" height="2" fill="#2c2012"/><rect x="1" y="4" width="2" height="1" fill="#2c2012"/></pattern><pattern id="mesh2" width="5" height="3" patternUnits="userSpaceOnUse"><rect width="5" height="3" fill="#5893ec"/><rect x="1" y="1" width="2" height="2" fill="#2c2012"/><rect x="4" y="1" width="1" height="2" fill="#2c2012"/></pattern><pattern id="bmesh" width="3" height="3" patternUnits="userSpaceOnUse" patternTransform="rotate(20)"><rect width="3" height="3" fill="#000"/><path d="M0 0.5 H3 M0.5 0 V3" stroke="#2a2a2a" stroke-width="0.6"/></pattern><pattern id="gdots" width="3" height="3" patternUnits="userSpaceOnUse"><rect x="0" y="0" width="1" height="1" fill="#5c6f9a"/></pattern></defs>
<path d="M115 209.5 H857.5" stroke="#6c6c6c" stroke-width="1" shape-rendering="crispEdges"/>
<path d="M115 315.2 H857.5" stroke="#6c6c6c" stroke-width="1" shape-rendering="crispEdges"/>
<path d="M115 420.9 H857.5" stroke="#6c6c6c" stroke-width="1" shape-rendering="crispEdges"/>
<path d="M115 526.5 H857.5" stroke="#6c6c6c" stroke-width="1" shape-rendering="crispEdges"/>
<path d="M220 144 V534" stroke="#6c6c6c" stroke-width="1" shape-rendering="crispEdges"/>
<path d="M325.6 144 V534" stroke="#6c6c6c" stroke-width="1" shape-rendering="crispEdges"/>
<path d="M431.4 144 V534" stroke="#6c6c6c" stroke-width="1" shape-rendering="crispEdges"/>
<path d="M536.8 144 V534" stroke="#6c6c6c" stroke-width="1" shape-rendering="crispEdges"/>
<path d="M642.8 144 V534" stroke="#6c6c6c" stroke-width="1" shape-rendering="crispEdges"/>
<path d="M748.5 144 V534" stroke="#6c6c6c" stroke-width="1" shape-rendering="crispEdges"/>
<path d="M854.6 144 V534" stroke="#6c6c6c" stroke-width="1" shape-rendering="crispEdges"/>
<rect x="180" y="145.5" width="51.5" height="36.5" fill="none" stroke="#cfe39a" stroke-width="1"/>
<path d="M188.5 146 V182" stroke="#cfe39a" stroke-width="1" shape-rendering="crispEdges"/>
<path d="M224 170.5 H412.5 Q414.5 170.5 414.5 173 V380 H262 V436 H224 Z" fill="url(#mesh)" stroke="#5a96e6" stroke-width="2" shape-rendering="crispEdges"/>
<rect x="413.5" y="260" width="3" height="17" fill="#5a96e6"/><rect x="413.5" y="396" width="3" height="34" fill="#5a96e6"/>
<rect x="181" y="204" width="71" height="181.5" rx="3" fill="#787878"/>
<rect x="262.5" y="380" width="151" height="70.5" rx="4" fill="#787878"/>
<path d="M176.0 214.0 L176.0 382.0" fill="none" stroke="#f0a888" stroke-width="1.6"  shape-rendering="crispEdges"/>
<path d="M268.5 380.0 L268.5 376.5 L388.0 376.5 L388.0 380.0" fill="none" stroke="#f0a070" stroke-width="1"  shape-rendering="crispEdges"/>
<path d="M262.0 392.0 L259.0 392.0 L259.0 450.0 L262.0 453.0 L268.0 453.0 L268.0 456.5 L388.0 456.5 L388.0 453.5 L401.0 453.5 L401.0 450.0" fill="none" stroke="#f0a070" stroke-width="1" />
<path d="M188 258 V343" stroke="#5a5a5a" stroke-width="0.8" stroke-dasharray="1 6 1 2 5 9"/>
<path d="M196 222 V361" stroke="#5a5a5a" stroke-width="0.8" stroke-dasharray="1 6 1 2 5 9"/>
<path d="M227 240 V352" stroke="#5a5a5a" stroke-width="0.8" stroke-dasharray="1 6 1 2 5 9"/>
<path d="M232 228 V352" stroke="#5a5a5a" stroke-width="0.8" stroke-dasharray="1 6 1 2 5 9"/>
<path d="M214 216 H230 M206 375 H232" stroke="#e8a080" stroke-width="0.8" stroke-dasharray="1 1.5"/>
<path d="M283 443 H287 M334 443 H340 M389 443 H394 M287 435 h1 M385 435 h1 M343 409 h1" stroke="#444" stroke-width="1"/>
<path d="M236.8 422.0 L231.1 424.1 L236.7 427.5 L229.8 428.1 L235.8 433.1 L232.2 434.2 L231.3 436.7 L224.1 433.8 L228.3 441.3 L224.5 440.6 L225.2 446.7 L219.5 441.1 L219.6 448.6 L215.3 442.4 L213.8 449.1 L211.0 445.7 L208.2 449.1 L207.4 439.0 L202.7 447.5 L203.5 438.9 L197.3 445.7 L196.6 441.8 L192.5 442.6 L196.3 435.3 L189.9 437.3 L189.6 434.4 L185.4 433.4 L191.2 428.4 L184.1 427.7 L193.8 423.8 L183.5 422.0 L194.2 420.2 L185.2 416.5 L193.9 416.4 L186.7 411.2 L196.4 413.6 L188.3 405.5 L193.1 405.8 L194.0 403.1 L197.4 403.3 L196.8 397.4 L202.4 402.6 L202.6 396.1 L206.3 400.1 L208.2 395.4 L211.0 400.4 L213.7 395.9 L215.1 402.6 L219.4 396.3 L218.0 406.4 L224.7 398.3 L220.9 408.4 L229.7 401.2 L223.1 411.1 L233.1 405.9 L231.4 410.2 L236.6 410.6 L226.7 416.9 L238.6 416.1 L230.9 419.9 Z" fill="#7a7a7a"/>
<path d="M213.5 395.0 L212.3 397.2 L213.0 399.7 L210.6 401.1 L210.1 403.4 L207.0 403.4 L207.5 407.9 L203.0 403.3 L202.5 409.4 L200.0 406.8 L197.5 408.9 L196.0 405.9 L193.3 406.6 L192.0 404.5 L189.7 403.6 L192.9 399.1 L186.2 400.0 L191.3 396.5 L185.3 395.0 L188.2 392.9 L187.2 390.3 L191.6 390.1 L188.9 385.7 L194.5 388.4 L192.6 382.2 L195.7 383.2 L197.5 381.0 L200.0 385.5 L202.4 381.2 L204.1 383.7 L207.0 382.9 L208.1 385.4 L211.4 385.4 L207.4 390.8 L213.3 390.2 L211.3 393.0 Z" fill="#7a7a7a"/>
<path d="M245.6 402.0 L239.1 404.0 L244.9 408.2 L236.6 407.0 L241.7 413.5 L234.5 409.7 L236.0 415.9 L232.5 414.2 L231.2 420.1 L228.0 413.8 L224.8 420.0 L222.8 416.4 L219.4 416.9 L218.7 413.0 L214.7 413.2 L217.3 408.2 L212.9 407.5 L213.6 404.5 L211.3 402.0 L218.0 400.2 L211.1 395.9 L215.0 394.5 L214.2 390.4 L218.3 390.4 L219.2 386.8 L222.8 387.7 L225.2 386.2 L228.0 391.6 L230.9 385.7 L233.0 388.3 L237.3 386.0 L234.7 394.0 L240.8 391.2 L236.5 397.1 L244.3 396.1 L239.5 400.0 Z" fill="#7a7a7a"/>
<rect x="190" y="425" width="26" height="28" fill="url(#gdots)" opacity="0.0"/>
<path d="M193 428 l16 26 M198 426 l14 24 M203 426 l12 20 M190 436 l10 16" stroke="#555" stroke-width="0.8" stroke-dasharray="1 1"/>
<path d="M232 385 h18 v26 h-14 z" fill="url(#mesh)" opacity="0.55"/>
<path d="M265.5 186 C265.5 160 280 146 303 146 C326 146 341.3 160 341.3 186 C341.3 202 334 213 318 215 L290 215 C272 213 265.5 202 265.5 186 Z" fill="#2e120e"/><path d="M351.5 186 C351.5 160 366 146 390 146 C413 146 428.5 160 428.5 186 C428.5 202 421 213 405 215 L376 215 C358 213 351.5 202 351.5 186 Z" fill="#2e120e"/>
<path d="M300 170 V200 M304 172 V196 M310 170 V204 M314 174 V200 M296 180 V204 M292 198 H312" stroke="#4a5878" stroke-width="1" stroke-dasharray="1 1.6"/>
<path d="M388 170 V204 M392 170 V206 M384 178 V206 M396 176 V204 M380 190 V206 M376 206 H402" stroke="#4a5878" stroke-width="1" stroke-dasharray="1 1.6"/>
<path d="M297 203.5 H311" stroke="#e08060" stroke-width="1" stroke-dasharray="1 1"/>
<circle cx="279.5" cy="193" r="7.8" fill="#f4f418"/><circle cx="279.5" cy="193" r="4.836" fill="none" stroke="#8a8a20" stroke-width="0.7" stroke-dasharray="1.2 1"/><circle cx="279.5" cy="193" r="2.808" fill="#9a9a9a" stroke="#777" stroke-width="0.6"/>
<circle cx="293" cy="193" r="7.8" fill="#f4f418"/><circle cx="293" cy="193" r="4.836" fill="none" stroke="#8a8a20" stroke-width="0.7" stroke-dasharray="1.2 1"/><circle cx="293" cy="193" r="2.808" fill="#9a9a9a" stroke="#777" stroke-width="0.6"/>
<circle cx="279.5" cy="289" r="7.8" fill="#f4f418"/><circle cx="279.5" cy="289" r="4.836" fill="none" stroke="#8a8a20" stroke-width="0.7" stroke-dasharray="1.2 1"/><circle cx="279.5" cy="289" r="2.808" fill="#9a9a9a" stroke="#777" stroke-width="0.6"/>
<circle cx="293" cy="289" r="7.8" fill="#f4f418"/><circle cx="293" cy="289" r="4.836" fill="none" stroke="#8a8a20" stroke-width="0.7" stroke-dasharray="1.2 1"/><circle cx="293" cy="289" r="2.808" fill="#9a9a9a" stroke="#777" stroke-width="0.6"/>
<circle cx="279" cy="388" r="8" fill="#f4f418"/><circle cx="279" cy="388" r="4.96" fill="none" stroke="#8a8a20" stroke-width="0.7" stroke-dasharray="1.2 1"/><circle cx="279" cy="388" r="2.88" fill="#9a9a9a" stroke="#777" stroke-width="0.6"/>
<circle cx="294" cy="388" r="8" fill="#f4f418"/><circle cx="294" cy="388" r="4.96" fill="none" stroke="#8a8a20" stroke-width="0.7" stroke-dasharray="1.2 1"/><circle cx="294" cy="388" r="2.88" fill="#9a9a9a" stroke="#777" stroke-width="0.6"/>
<path d="M323 236 Q333 236 333.5 248 Q333 262 331 270 Q334 285 347 297 Q364 312 364.5 330 Q364 346 350 352 Q330 358 309 349 Q290 338 289 318 Q289 300 301 294 Q297 280 300 266 Q305 254 311 246 Q316 236 323 236 Z" fill="none" stroke="#0a0a0a" stroke-width="1.8"/>
<circle cx="345" cy="332" r="6" fill="none" stroke="#0a0a0a" stroke-width="1"/>
<rect x="308.5" y="260" width="17" height="17" fill="#7a3a90" stroke="#c020a0" stroke-width="1.6" transform="rotate(-32 317 268.5)"/><circle cx="316" cy="271.5" r="6.3" fill="#c2621a"/>
<rect x="301" y="296" width="23" height="34" fill="#b8e08e"/>
<path d="M374 291 L356 312 L350 318 L344 330 L338 341 M358 310 l10 -3 M352 317 l-10 -4 M349 322 l10 2 M345 328 l-9 -2 M343 334 l8 3 M362 304 l3 -8 M356 312 l-6 -8 M366 300 l8 2 M341 338 l-6 0 M347 326 l-3 8" stroke="#a8dcec" stroke-width="1.6" fill="none"/>
<path d="M344.3 320.0 L343.3 321.8 L342.9 323.9 L340.9 324.5 L339.0 325.4 L337.4 323.9 L335.4 323.6 L335.3 321.5 L334.0 320.0 L335.2 318.4 L335.4 316.4 L337.2 315.5 L339.0 314.7 L340.3 316.9 L342.6 316.4 L343.2 318.3 Z" fill="#e060c0"/>
<path d="M115.4 144 V534" stroke="#d060c0" stroke-width="1.3" shape-rendering="crispEdges"/>
<path d="M132.5 144 V534" stroke="#8a1fa0" stroke-width="1.2" shape-rendering="crispEdges"/>
<path d="M145 144 V230" stroke="#b020b0" stroke-width="1.2" shape-rendering="crispEdges"/>
<path d="M147.3 370 V534" stroke="#b020b0" stroke-width="1.2" shape-rendering="crispEdges"/>
<path d="M179.3 206.0 L174.9 208.9 L176.3 213.4 L172.6 214.9 L170.0 218.1 L166.1 216.5 L162.1 218.5 L159.7 214.8 L155.9 213.4 L156.7 209.1 L152.8 206.0 L156.4 202.9 L156.1 198.7 L160.7 198.5 L162.1 193.8 L166.1 194.9 L170.2 193.4 L171.1 199.2 L176.7 198.3 L174.4 203.3 Z" fill="#b3922a"/>
<path d="M177.8 217.5 L174.2 220.2 L176.3 225.0 L172.3 226.2 L169.8 229.3 L165.9 227.6 L162.0 229.5 L160.7 224.7 L156.4 224.5 L154.9 221.1 L153.1 217.5 L156.3 214.4 L155.6 210.0 L159.1 208.0 L162.1 205.8 L165.9 208.3 L169.7 206.1 L170.9 210.7 L176.4 209.9 L177.0 213.9 Z" fill="#b3922a"/>
<path d="M177.5 229.0 L172.3 231.7 L173.9 236.1 L171.0 238.5 L168.1 241.6 L164.0 238.4 L160.0 241.4 L157.6 237.9 L153.6 236.6 L154.7 232.0 L151.1 229.0 L153.1 225.4 L153.8 221.5 L157.8 220.4 L160.0 216.5 L164.0 220.5 L168.2 216.2 L170.0 220.8 L174.3 221.5 L174.6 225.6 Z" fill="#b3922a"/>
<path d="M174.6 240.5 L171.9 243.6 L172.4 247.8 L168.1 248.3 L166.4 252.6 L162.4 252.1 L158.8 251.8 L157.2 247.7 L152.6 247.7 L152.0 243.9 L149.2 240.5 L152.8 237.4 L151.9 232.8 L156.5 232.3 L158.5 228.4 L162.4 229.2 L166.4 228.4 L167.6 233.4 L172.6 233.1 L171.2 237.7 Z" fill="#b3922a"/>
<path d="M175.6 252.0 L174.2 255.8 L173.3 259.8 L169.6 261.8 L166.5 264.2 L162.5 263.2 L158.2 265.4 L156.9 259.8 L151.3 260.1 L151.3 255.7 L149.0 252.0 L151.5 248.4 L152.0 244.4 L155.3 242.1 L158.5 239.6 L162.5 242.8 L166.8 238.7 L168.2 244.2 L173.8 243.8 L173.9 248.3 Z" fill="#b3922a"/>
<path d="M172.8 263.5 L169.1 266.2 L170.7 270.7 L165.5 270.0 L164.6 275.1 L160.8 271.6 L157.3 274.2 L155.1 271.3 L150.7 270.8 L152.2 266.3 L148.4 263.5 L150.5 260.2 L151.2 256.5 L154.7 255.1 L157.1 252.1 L160.8 254.2 L164.3 252.8 L166.9 255.0 L170.2 256.7 L168.5 261.0 Z" fill="#b3922a"/>
<path d="M174.2 275.0 L169.4 278.0 L171.2 282.9 L167.2 284.5 L164.2 287.1 L160.3 285.2 L156.2 287.8 L154.5 283.0 L149.5 282.8 L151.0 278.0 L147.2 275.0 L151.1 272.0 L149.1 266.9 L153.8 266.0 L156.1 262.1 L160.3 264.9 L164.3 262.6 L166.5 266.4 L171.6 266.8 L171.4 271.4 Z" fill="#b3922a"/>
<path d="M172.1 286.5 L170.7 289.6 L170.3 293.1 L167.2 294.8 L164.7 297.1 L161.2 295.8 L158.0 296.5 L156.1 293.7 L152.8 292.7 L152.6 289.3 L150.7 286.5 L151.6 283.4 L152.4 280.1 L156.6 280.2 L158.0 276.4 L161.2 276.8 L164.7 275.8 L165.6 280.5 L170.3 279.9 L170.0 283.7 Z" fill="#b3922a"/>
<path d="M175.3 298.0 L170.7 300.9 L172.6 305.9 L167.9 306.4 L165.9 310.7 L161.8 310.2 L157.2 312.1 L154.5 308.0 L150.3 306.4 L151.0 301.5 L147.9 298.0 L151.1 294.5 L150.9 290.1 L155.9 290.0 L157.7 285.3 L161.8 285.7 L165.9 285.4 L168.9 288.2 L173.0 289.9 L170.9 295.0 Z" fill="#b3922a"/>
<path d="M174.1 309.5 L171.5 312.8 L171.3 316.8 L166.6 316.8 L165.0 321.1 L161.3 319.8 L157.1 322.3 L154.3 319.1 L150.8 317.1 L151.9 312.6 L149.1 309.5 L151.0 306.2 L150.6 301.8 L155.1 301.0 L157.2 296.9 L161.3 297.9 L165.1 297.6 L168.2 300.0 L171.7 301.9 L169.6 306.8 Z" fill="#b3922a"/>
<path d="M171.7 321.0 L169.2 323.8 L169.6 327.5 L166.4 328.9 L164.2 331.8 L160.7 328.8 L157.2 331.6 L154.9 329.0 L151.8 327.5 L151.8 323.9 L150.0 321.0 L153.6 318.7 L151.3 314.2 L154.7 312.7 L157.1 310.1 L160.7 312.5 L164.0 310.7 L166.2 313.3 L169.7 314.4 L169.2 318.2 Z" fill="#b3922a"/>
<path d="M173.0 332.5 L170.3 335.2 L171.4 339.3 L167.3 339.8 L165.4 343.1 L162.0 341.1 L158.7 342.7 L156.8 339.7 L152.9 339.1 L154.4 335.0 L151.4 332.5 L152.9 329.6 L153.4 326.3 L157.3 326.1 L158.5 321.7 L162.0 322.2 L165.6 321.4 L166.4 326.5 L171.1 325.9 L170.1 329.9 Z" fill="#b3922a"/>
<path d="M173.7 344.0 L170.5 346.7 L171.7 351.0 L168.2 352.5 L165.5 354.5 L162.0 353.8 L158.5 354.8 L157.1 350.8 L152.4 351.0 L153.5 346.8 L150.3 344.0 L153.6 341.3 L153.0 337.4 L156.4 336.3 L158.6 333.3 L162.0 336.0 L165.5 333.4 L166.9 337.3 L171.0 337.5 L170.4 341.3 Z" fill="#b3922a"/>
<path d="M174.7 355.5 L171.5 358.4 L172.9 362.9 L167.7 362.5 L166.3 366.9 L162.6 366.4 L158.9 366.8 L156.2 364.3 L152.3 363.0 L151.9 359.0 L150.2 355.5 L152.2 352.1 L152.8 348.4 L156.6 347.3 L158.6 343.3 L162.6 345.9 L166.2 344.4 L168.9 346.8 L172.2 348.5 L170.8 352.8 Z" fill="#b3922a"/>
<path d="M177.4 367.0 L174.1 370.1 L175.6 375.1 L169.9 374.4 L168.5 379.6 L164.5 378.8 L160.1 380.3 L158.4 375.3 L153.7 374.8 L154.8 370.2 L151.0 367.0 L155.1 364.0 L153.9 359.4 L157.4 357.3 L160.1 353.5 L164.5 355.6 L168.5 354.4 L170.2 359.1 L175.6 358.9 L176.1 363.2 Z" fill="#b3922a"/>
<path d="M179.3 378.5 L177.3 382.3 L176.5 386.3 L172.5 387.9 L169.9 391.5 L165.7 390.7 L161.5 391.3 L160.0 386.4 L154.8 386.4 L157.6 381.1 L153.1 378.5 L155.3 375.1 L155.0 370.7 L159.1 369.4 L161.8 366.5 L165.7 367.1 L169.9 365.7 L171.0 371.2 L176.5 370.6 L176.5 375.0 Z" fill="#b3922a"/>
<path d="M179.6 390.0 L176.8 393.2 L177.2 397.6 L173.1 398.6 L170.8 402.3 L166.8 399.9 L162.9 402.0 L161.0 398.0 L156.8 397.2 L156.2 393.5 L154.0 390.0 L155.6 386.4 L156.0 382.1 L160.2 381.0 L162.6 377.2 L166.8 381.2 L170.7 378.0 L172.1 382.7 L177.7 382.1 L176.1 387.0 Z" fill="#b3922a"/>
<path d="M197.5 482.0 L193.9 484.3 L195.1 487.8 L192.3 489.3 L190.4 492.5 L187.0 489.9 L183.9 491.6 L181.8 489.2 L178.1 488.4 L178.8 484.7 L177.1 482.0 L180.1 479.8 L178.9 476.1 L182.3 475.5 L183.7 471.9 L187.0 473.5 L190.4 471.5 L192.5 474.4 L195.6 475.7 L196.1 479.0 Z" fill="#b3922a"/>
<path d="M196.7 492.0 L195.2 494.7 L194.6 497.7 L190.8 497.6 L189.9 501.7 L186.7 499.6 L183.6 501.7 L181.7 498.8 L178.3 498.1 L179.2 494.4 L176.2 492.0 L179.4 489.6 L178.2 485.8 L181.8 485.3 L183.7 482.7 L186.7 482.9 L189.9 482.1 L192.0 484.7 L195.0 485.9 L194.1 489.6 Z" fill="#b3922a"/>
<path d="M198.2 502.0 L196.8 505.4 L195.6 508.7 L192.4 510.3 L190.1 513.4 L186.4 510.8 L182.6 513.6 L180.1 510.7 L177.1 508.8 L176.0 505.4 L175.1 502.0 L177.5 499.1 L177.5 495.5 L180.3 493.6 L182.7 490.7 L186.4 492.8 L189.9 491.3 L191.7 494.7 L196.2 494.9 L196.8 498.6 Z" fill="#b3922a"/>
<path d="M197.1 512.0 L194.4 514.7 L195.1 518.6 L191.7 519.7 L189.8 523.3 L186.1 520.4 L182.5 523.0 L180.6 519.6 L177.2 518.5 L177.0 515.0 L174.6 512.0 L178.3 509.5 L176.6 505.1 L181.1 505.1 L182.5 501.0 L186.1 501.6 L189.8 500.5 L191.0 505.3 L195.4 505.2 L196.3 508.7 Z" fill="#b3922a"/>
<path d="M197.0 522.0 L194.3 524.8 L195.3 528.9 L191.7 530.2 L189.2 532.4 L185.8 532.6 L182.5 532.3 L179.5 530.6 L177.0 528.4 L177.2 524.8 L173.9 522.0 L177.8 519.4 L176.8 515.4 L180.3 514.4 L182.2 511.0 L185.8 512.4 L189.1 511.8 L190.5 515.5 L195.1 515.3 L195.6 518.8 Z" fill="#b3922a"/>
<path d="M196.3 532.0 L194.0 534.7 L194.0 538.2 L191.0 539.6 L188.7 542.0 L185.5 542.4 L182.2 542.2 L179.6 540.1 L176.8 538.4 L177.8 534.5 L175.0 532.0 L177.5 529.4 L176.9 525.8 L180.8 525.6 L182.0 521.2 L185.5 522.2 L189.0 521.1 L190.3 525.4 L194.0 525.8 L194.2 529.2 Z" fill="#b3922a"/>
<path d="M160 246 l5 3 M158 260 l6 3 M157 274 l6 3 M157 288 l6 3 M158 302 l6 3 M159 316 l6 3 M160 330 l5 3 M162 344 l5 3 M164 358 l5 3" stroke="#4a4020" stroke-width="2.2"/>
<rect x="181" y="484" width="7" height="5" fill="#353535"/><rect x="178" y="512" width="9" height="8" fill="#353535"/>
<path d="M150 226 Q143 290 152 356" fill="none" stroke="#7fe0a8" stroke-width="4"/><path d="M150 226 Q143 290 152 356" fill="none" stroke="#4a8" stroke-width="1.2" stroke-dasharray="1 2"/>
<rect x="162" y="502" width="9" height="32" fill="#8fe6b0"/><path d="M162 504 H171 M162 508 H171 M162 512 H171 M162 516 H171 M162 520 H171 M162 524 H171 M162 528 H171 M162 532 H171" stroke="#d04040" stroke-width="0.8" stroke-dasharray="2 1"/>
<path d="M135.4 216 V365" stroke="#f0f020" stroke-width="1.2" shape-rendering="crispEdges"/>
<path d="M137.6 216 V365" stroke="#f0f020" stroke-width="1.2" shape-rendering="crispEdges"/>
<path d="M136.0 230.0 L152.0 208.0" fill="none" stroke="#f0f020" stroke-width="1" />
<path d="M136.0 260.0 L152.0 246.0" fill="none" stroke="#f0f020" stroke-width="1" />
<path d="M136.0 320.0 L152.0 306.0" fill="none" stroke="#f0f020" stroke-width="1" />
<path d="M136.0 352.0 L153.0 374.0" fill="none" stroke="#f0f020" stroke-width="1" />
<path d="M136 290.5 H165" stroke="#f0f020" stroke-width="1" shape-rendering="crispEdges"/>
<path d="M156.3 497 V534" stroke="#f0f020" stroke-width="1.2" shape-rendering="crispEdges"/>
<path d="M158.7 497 V534" stroke="#f0f020" stroke-width="1.2" shape-rendering="crispEdges"/>
<path d="M158.0 511.0 L174.0 487.0" fill="none" stroke="#f0f020" stroke-width="1" />
<path d="M174.0 144.0 L166.0 158.0 L157.0 180.0 L150.0 205.0 L144.0 235.0 L140.5 270.0 L140.0 300.0 L142.0 330.0 L146.0 352.0 L152.0 375.0 L162.0 410.0 L174.5 450.0 L171.0 470.0 L165.0 502.0 L161.0 534.0" fill="none" stroke="#e81818" stroke-width="1.2" />
<path d="M181.0 144.0 L186.0 150.0 L187.0 158.0 L183.0 163.0 L176.0 165.0 L168.0 182.0 L161.0 205.0 L156.0 223.0" fill="none" stroke="#e81818" stroke-width="1.2" />
<path d="M187.0 144.0 L190.0 150.0 L189.0 158.0 L186.0 163.0 L178.0 166.0" fill="none" stroke="#1818e0" stroke-width="1.2" />
<path d="M176.0 166.0 L170.0 182.0 L164.0 205.0 L158.0 226.0" fill="none" stroke="#1818e0" stroke-width="1.2" />
<path d="M153.0 228.0 L149.0 260.0 L148.0 300.0 L150.0 335.0 L155.0 366.0 L162.0 392.0 L176.0 432.0 L184.0 432.0 L188.0 437.0 L188.0 444.0 L183.0 449.0 L179.0 470.0 L175.0 500.0" fill="none" stroke="#e81818" stroke-width="1.2" />
<path d="M156.0 366.0 L164.0 392.0 L177.0 430.0 L184.0 430.0" fill="none" stroke="#1818e0" stroke-width="1.6" />
<path d="M184.0 450.0 L180.0 470.0 L177.0 492.0" fill="none" stroke="#1818e0" stroke-width="1.6" />
<path d="M234.0 176.0 L216.0 176.0 L218.0 168.0 L204.0 168.0 L189.0 180.0 L180.0 200.0 L172.0 230.0 L168.0 265.0 L166.0 300.0 L166.5 330.0 L170.0 350.0 L176.0 375.0 L188.0 413.0 L196.0 418.0 L203.0 427.0 L206.0 440.0 L204.0 452.0 L196.0 460.0 L192.0 490.0 L188.5 534.0" fill="none" stroke="#22e022" stroke-width="1.1" />
<path d="M234.0 172.8 L216.0 172.8 L218.0 168.0 L204.0 168.0 L192.2 180.0 L183.2 200.0 L175.2 230.0 L171.2 265.0 L169.2 300.0 L169.7 330.0 L173.2 350.0 L179.2 375.0 L191.2 413.0 L199.2 418.0 L206.2 427.0 L209.2 440.0 L207.2 452.0 L199.2 460.0 L195.2 490.0 L191.7 534.0" fill="none" stroke="#22e022" stroke-width="1.1" />
<path d="M216.0 176.0 L234.0 176.0 L234.0 414.0" fill="none" stroke="#22e022" stroke-width="1.1"  shape-rendering="crispEdges"/>
<path d="M218.0 172.5 L237.0 172.5 L237.0 414.0" fill="none" stroke="#22e022" stroke-width="1.1"  shape-rendering="crispEdges"/>
<path d="M213.4 171.0 L211.7 173.0 L211.3 175.3 L208.5 174.6 L207.0 177.0 L205.2 175.4 L202.1 175.9 L201.6 173.2 L200.5 171.0 L202.8 169.3 L202.7 166.7 L205.1 166.3 L207.0 164.3 L208.9 166.5 L211.7 166.3 L212.2 168.8 Z" fill="#e890e0"/>
<path d="M218.9 176.0 L217.4 177.4 L217.5 179.5 L215.6 179.8 L214.0 181.1 L212.8 178.8 L210.5 179.5 L210.1 177.6 L209.1 176.0 L210.4 174.5 L210.7 172.7 L212.9 173.4 L214.0 170.8 L215.7 171.9 L217.6 172.4 L217.2 174.7 Z" fill="#e890e0"/>
<path d="M202.0 166.0 L216.0 160.0" fill="none" stroke="#b09030" stroke-width="1.5" />
<rect x="231" y="145.5" width="27" height="18" fill="none" stroke="#f29ae2" stroke-width="1.8"/>
<path d="M233.0 164.0 L233.0 170.0" fill="none" stroke="#f0a070" stroke-width="1"  shape-rendering="crispEdges"/>
<path d="M256.0 164.0 L256.0 170.0" fill="none" stroke="#f0a070" stroke-width="1"  shape-rendering="crispEdges"/>
<path d="M218.0 152.0 L231.0 152.0" fill="none" stroke="#cfe39a" stroke-width="1"  shape-rendering="crispEdges"/>
<path d="M218.0 155.0 L231.0 155.0" fill="none" stroke="#cfe39a" stroke-width="1"  shape-rendering="crispEdges"/>
<path d="M271.0 144.0 L271.0 463.0 L225.5 463.0 L225.5 414.0 L234.0 414.0" fill="none" stroke="#22e022" stroke-width="1.1"  shape-rendering="crispEdges"/>
<path d="M267.5 144.0 L267.5 459.0 L228.5 459.0 L228.5 417.0 L237.0 417.0" fill="none" stroke="#22e022" stroke-width="1.1"  shape-rendering="crispEdges"/>
<path d="M404 144 V424" stroke="#1fae1f" stroke-width="2" shape-rendering="crispEdges"/>
<path d="M442 144 V424" stroke="#1fae1f" stroke-width="2" shape-rendering="crispEdges"/>
<path d="M215.5 510.6 H462.5" stroke="#1fae1f" stroke-width="2" shape-rendering="crispEdges"/>
<path d="M246 144 V436" stroke="#cfe39a" stroke-width="1" shape-rendering="crispEdges"/>
<rect x="239" y="431" width="18" height="22" fill="none" stroke="#f29ae2" stroke-width="1.4"/><rect x="241" y="433" width="14" height="18" fill="none" stroke="#6a8fe0" stroke-width="1"/>
<path d="M207 464 Q225 458 246 461 L293 479 Q301 484 299.5 497 L283 534 H230 L200 509 Q197 490 201.5 478 Z" fill="url(#bmesh)"/>
<path d="M207 464 Q225 458 246 461 L293 479 Q301 484 299.5 497 L283 534 H230 L200 509 Q197 490 201.5 478 Z" fill="none" stroke="#000" stroke-width="5"/>
<path d="M216 510.6 H300" stroke="#1fae1f" stroke-width="2" shape-rendering="crispEdges"/>
<path d="M134 279.5 H416" stroke="#4fb0f0" stroke-width="1" shape-rendering="crispEdges"/>
<path d="M416 279 H463" stroke="#4fb0f0" stroke-width="1" shape-rendering="crispEdges"/>
<path d="M98 297 H463" stroke="#4fb0f0" stroke-width="1" shape-rendering="crispEdges"/>
<path d="M98 300.5 H230" stroke="#4fb0f0" stroke-width="1" shape-rendering="crispEdges"/>
<path d="M230 299 H463" stroke="#4fb0f0" stroke-width="2" shape-rendering="crispEdges"/>
<path d="M282.0 300.0 L290.0 335.0 L418.0 533.0" fill="none" stroke="#4fb0f0" stroke-width="1" />
<path d="M230.0 215.0 L291.0 335.0 L400.0 506.0" fill="none" stroke="#4fb0f0" stroke-width="1" />
<path d="M464.0 463.0 L400.0 506.0" fill="none" stroke="#4fb0f0" stroke-width="1" />
<path d="M222.0 171.0 L262.0 300.0" fill="none" stroke="#4fb0f0" stroke-width="0.8" />
<path d="M410 385.5 H464" stroke="#4fb0f0" stroke-width="1" shape-rendering="crispEdges"/>
<g transform="translate(100 280.5) rotate(0) scale(0.68)" fill="none" stroke="#6a8fe0" stroke-width="1.47"><rect x="0" y="-3.5" width="26" height="7"/><path d="M3 -3.5 V3.5"/><path d="M6 -3.5 V3.5"/><path d="M9 -3.5 V3.5"/><path d="M12 -3.5 V3.5"/><path d="M15 -3.5 V3.5"/><path d="M18 -3.5 V3.5"/><path d="M21 -3.5 V3.5"/><path d="M24 -3.5 V3.5"/><rect x="26" y="-2.5" width="8" height="5"/><path d="M26 -5.5 L30 -7.5 L32 -4 Z"/><path d="M34 -1.5 H42 M34 1.5 H42 M34 0 H46"/><path d="M42 0 L50 -6.5 V6.5 Z"/></g>
<g transform="translate(47 300.5) rotate(0) scale(1.0)" fill="none" stroke="#6a8fe0" stroke-width="1.00"><rect x="0" y="-3.5" width="26" height="7"/><path d="M3 -3.5 V3.5"/><path d="M6 -3.5 V3.5"/><path d="M9 -3.5 V3.5"/><path d="M12 -3.5 V3.5"/><path d="M15 -3.5 V3.5"/><path d="M18 -3.5 V3.5"/><path d="M21 -3.5 V3.5"/><path d="M24 -3.5 V3.5"/><rect x="26" y="-2.5" width="8" height="5"/><path d="M26 -5.5 L30 -7.5 L32 -4 Z"/><path d="M34 -1.5 H42 M34 1.5 H42 M34 0 H46"/><path d="M42 0 L50 -6.5 V6.5 Z"/></g>
<g transform="translate(428 385.5) rotate(180) scale(0.94)" fill="none" stroke="#6a8fe0" stroke-width="1.06"><rect x="0" y="-3.5" width="26" height="7"/><path d="M3 -3.5 V3.5"/><path d="M6 -3.5 V3.5"/><path d="M9 -3.5 V3.5"/><path d="M12 -3.5 V3.5"/><path d="M15 -3.5 V3.5"/><path d="M18 -3.5 V3.5"/><path d="M21 -3.5 V3.5"/><path d="M24 -3.5 V3.5"/><rect x="26" y="-2.5" width="8" height="5"/><path d="M26 -5.5 L30 -7.5 L32 -4 Z"/><path d="M34 -1.5 H42 M34 1.5 H42 M34 0 H46"/><path d="M42 0 L50 -6.5 V6.5 Z"/></g>
<g transform="translate(364 469) rotate(-112) scale(0.9)" fill="none" stroke="#6a8fe0" stroke-width="1.11"><rect x="0" y="-3.5" width="26" height="7"/><path d="M3 -3.5 V3.5"/><path d="M6 -3.5 V3.5"/><path d="M9 -3.5 V3.5"/><path d="M12 -3.5 V3.5"/><path d="M15 -3.5 V3.5"/><path d="M18 -3.5 V3.5"/><path d="M21 -3.5 V3.5"/><path d="M24 -3.5 V3.5"/><rect x="26" y="-2.5" width="8" height="5"/><path d="M26 -5.5 L30 -7.5 L32 -4 Z"/><path d="M34 -1.5 H42 M34 1.5 H42 M34 0 H46"/><path d="M42 0 L50 -6.5 V6.5 Z"/></g>
<g transform="translate(372 525) rotate(-33) scale(0.95)" fill="none" stroke="#6a8fe0" stroke-width="1.05"><rect x="0" y="-3.5" width="26" height="7"/><path d="M3 -3.5 V3.5"/><path d="M6 -3.5 V3.5"/><path d="M9 -3.5 V3.5"/><path d="M12 -3.5 V3.5"/><path d="M15 -3.5 V3.5"/><path d="M18 -3.5 V3.5"/><path d="M21 -3.5 V3.5"/><path d="M24 -3.5 V3.5"/><rect x="26" y="-2.5" width="8" height="5"/><path d="M26 -5.5 L30 -7.5 L32 -4 Z"/><path d="M34 -1.5 H42 M34 1.5 H42 M34 0 H46"/><path d="M42 0 L50 -6.5 V6.5 Z"/></g>
<g transform="translate(236 250) rotate(62) scale(0.6)" fill="none" stroke="#6a8fe0" stroke-width="1.67"><rect x="0" y="-3.5" width="26" height="7"/><path d="M3 -3.5 V3.5"/><path d="M6 -3.5 V3.5"/><path d="M9 -3.5 V3.5"/><path d="M12 -3.5 V3.5"/><path d="M15 -3.5 V3.5"/><path d="M18 -3.5 V3.5"/><path d="M21 -3.5 V3.5"/><path d="M24 -3.5 V3.5"/><rect x="26" y="-2.5" width="8" height="5"/><path d="M26 -5.5 L30 -7.5 L32 -4 Z"/><path d="M34 -1.5 H42 M34 1.5 H42 M34 0 H46"/><path d="M42 0 L50 -6.5 V6.5 Z"/></g>
<path d="M522.7 160.0 L514.7 162.1 L524.1 166.0 L516.0 166.8 L520.8 171.2 L511.4 169.7 L520.4 177.6 L511.6 174.8 L515.7 181.6 L510.5 180.3 L510.1 184.0 L505.7 182.2 L506.5 189.1 L502.6 187.3 L501.1 192.1 L497.1 187.1 L494.9 190.8 L492.0 189.6 L488.8 194.0 L487.9 181.9 L482.8 192.4 L483.5 181.9 L478.6 187.0 L478.0 182.6 L472.7 185.6 L472.6 181.3 L466.9 182.9 L471.1 175.7 L465.9 176.1 L472.8 169.5 L463.5 171.0 L472.5 165.5 L460.6 165.9 L467.9 162.2 L460.6 160.0 L467.2 157.7 L461.7 154.3 L463.5 151.9 L460.6 147.8 L467.4 147.7 L463.7 142.5 L469.8 143.2 L466.8 137.0 L478.1 144.8 L472.0 133.5 L480.4 141.3 L477.5 131.0 L483.9 139.2 L483.6 130.7 L487.4 135.4 L488.9 126.7 L492.0 132.1 L495.1 126.3 L495.8 139.7 L500.7 129.5 L501.5 135.6 L506.2 131.4 L505.7 137.9 L512.6 132.7 L509.5 140.8 L514.3 139.7 L515.2 142.5 L520.1 142.6 L509.5 151.3 L521.9 148.4 L515.9 153.2 L523.8 154.1 L514.0 158.0 Z" fill="#7a7a7a"/>
<circle cx="484" cy="150" r="8.5" fill="#5ee0d0" stroke="#f0f020" stroke-width="1"/><circle cx="494" cy="156" r="8" fill="#5ee0d0" stroke="#f0f020" stroke-width="1"/><circle cx="488" cy="152" r="6.5" fill="#5ee0d0"/>
<path d="M474 178 Q476 200 503 205" fill="none" stroke="#e81818" stroke-width="2.2"/><path d="M478 178 V192 M483 182 V198 M488 184 V201 M493 186 V203 M498 186 V204" stroke="#e81818" stroke-width="1.2"/>
<path d="M534.7 238.0 L532.9 240.4 L533.5 243.2 L531.2 244.8 L530.0 247.0 L526.1 245.7 L525.9 249.8 L523.0 248.3 L521.0 251.4 L518.6 250.1 L516.1 249.8 L514.7 247.5 L512.1 246.9 L511.9 244.1 L508.2 243.3 L509.7 240.2 L508.3 238.0 L512.0 236.2 L508.9 233.0 L511.4 231.6 L511.2 228.2 L515.9 230.3 L515.8 225.5 L519.0 228.2 L521.0 224.2 L522.7 229.3 L526.3 225.3 L526.5 229.8 L529.9 229.1 L530.3 231.8 L532.7 233.1 L531.9 235.8 Z" fill="#767676"/>
<path d="M534.8 270.5 L531.9 272.7 L532.7 275.3 L529.5 276.2 L530.2 279.7 L526.7 279.1 L526.2 282.9 L523.3 282.2 L521.0 284.3 L518.9 281.0 L516.0 282.5 L515.4 278.8 L511.2 280.3 L512.2 276.4 L509.1 275.4 L511.2 272.5 L507.8 270.5 L512.1 268.7 L509.2 265.6 L512.4 264.7 L511.4 260.9 L514.2 260.3 L515.8 257.9 L519.0 260.4 L521.0 257.1 L522.9 261.0 L525.8 258.9 L527.6 260.6 L530.2 261.3 L528.6 265.4 L533.6 265.3 L531.4 268.4 Z" fill="#767676"/>
<path d="M533.7 304.0 L531.7 306.1 L533.7 309.3 L530.0 310.0 L530.1 313.1 L526.6 312.3 L526.0 316.0 L523.0 314.1 L521.0 316.8 L519.1 313.5 L516.2 315.6 L514.7 313.5 L511.2 313.8 L510.9 310.8 L508.9 309.0 L509.4 306.3 L507.9 304.0 L510.8 302.0 L508.1 298.7 L513.6 299.0 L511.8 294.8 L515.6 296.0 L516.0 291.8 L518.6 292.1 L521.0 291.1 L523.2 292.9 L526.0 291.9 L525.9 296.7 L530.7 294.3 L531.1 297.3 L533.4 298.9 L532.2 301.8 Z" fill="#767676"/>
<path d="M516.4 205.5 V468.5" stroke="#cfe8a8" stroke-width="1.1" shape-rendering="crispEdges"/>
<path d="M526.5 205.5 V468.5" stroke="#cfe8a8" stroke-width="1.1" shape-rendering="crispEdges"/>
<path d="M517 217 H526" stroke="#505a48" stroke-width="0.8" shape-rendering="crispEdges"/>
<path d="M517 234 H526" stroke="#505a48" stroke-width="0.8" shape-rendering="crispEdges"/>
<path d="M517 251 H526" stroke="#505a48" stroke-width="0.8" shape-rendering="crispEdges"/>
<path d="M517 268 H526" stroke="#505a48" stroke-width="0.8" shape-rendering="crispEdges"/>
<path d="M517 285 H526" stroke="#505a48" stroke-width="0.8" shape-rendering="crispEdges"/>
<path d="M517 302 H526" stroke="#505a48" stroke-width="0.8" shape-rendering="crispEdges"/>
<path d="M517 319 H526" stroke="#505a48" stroke-width="0.8" shape-rendering="crispEdges"/>
<path d="M517 336 H526" stroke="#505a48" stroke-width="0.8" shape-rendering="crispEdges"/>
<path d="M517 353 H526" stroke="#505a48" stroke-width="0.8" shape-rendering="crispEdges"/>
<path d="M517 370 H526" stroke="#505a48" stroke-width="0.8" shape-rendering="crispEdges"/>
<path d="M517 387 H526" stroke="#505a48" stroke-width="0.8" shape-rendering="crispEdges"/>
<path d="M517 404 H526" stroke="#505a48" stroke-width="0.8" shape-rendering="crispEdges"/>
<path d="M517 421 H526" stroke="#505a48" stroke-width="0.8" shape-rendering="crispEdges"/>
<path d="M517 438 H526" stroke="#505a48" stroke-width="0.8" shape-rendering="crispEdges"/>
<path d="M517 455 H526" stroke="#505a48" stroke-width="0.8" shape-rendering="crispEdges"/>
<path d="M515.5 206 V223" stroke="#4fb0f0" stroke-width="1" shape-rendering="crispEdges"/>
<path d="M505 337 H516" stroke="#4fb0f0" stroke-width="1" shape-rendering="crispEdges"/>
<path d="M501.6 144.0 L501.6 217.0 L504.5 214.0 L504.5 456.3 L474.0 456.3 L474.0 504.0 L483.0 504.0 L483.0 534.0" fill="none" stroke="#22e022" stroke-width="1.1" />
<path d="M504.3 144.0 L504.3 212.0" fill="none" stroke="#22e022" stroke-width="1.1"  shape-rendering="crispEdges"/>
<path d="M507.6 213.0 L507.6 460.7 L478.4 460.7 L478.4 500.0 L487.6 500.0 L487.6 534.0" fill="none" stroke="#22e022" stroke-width="1.1"  shape-rendering="crispEdges"/>
<path d="M513.5 145.0 L526.5 145.0 L526.5 185.4 L857.5 185.4" fill="none" stroke="#c020a0" stroke-width="1.1"  shape-rendering="crispEdges"/>
<path d="M504.3 534.0 L504.3 478.4 L857.5 478.4" fill="none" stroke="#c020a0" stroke-width="1.1"  shape-rendering="crispEdges"/>
<path d="M503.0 204.8 L526.5 204.8 L526.5 194.3 L857.5 194.3" fill="none" stroke="#f01010" stroke-width="1.6"  shape-rendering="crispEdges"/>
<path d="M505.0 206.5 L528.0 206.5 L528.0 196.2 L542.0 196.2" fill="none" stroke="#1010d0" stroke-width="1.4"  shape-rendering="crispEdges"/>
<path d="M626.5 196.2 H857.5" stroke="#1010d0" stroke-width="1.4" shape-rendering="crispEdges"/>
<path d="M656 196.2 H746" stroke="#8a8a8a" stroke-width="1.4" shape-rendering="crispEdges"/>
<path d="M857.5 467.4 L485.3 467.4 L485.3 493.3 L495.3 493.3 L495.3 500.0" fill="none" stroke="#1010d0" stroke-width="1.8"  shape-rendering="crispEdges"/>
<path d="M857.5 469.4 L487.2 469.4 L487.2 491.4 L496.6 491.4 L496.6 500.0" fill="none" stroke="#f01010" stroke-width="1.4"  shape-rendering="crispEdges"/>
<path d="M656 467.4 H746" stroke="#8a8a8a" stroke-width="1.8" shape-rendering="crispEdges"/>
<rect x="495.5" y="500" width="6.5" height="34" fill="#d8d8d8"/><rect x="501" y="498" width="3" height="3" fill="#e8e8e8"/>
<rect x="542.5" y="184" width="84" height="11" fill="#3a2a38" stroke="#c82060" stroke-width="1.5"/><rect x="544.5" y="185.8" width="80" height="7.4" fill="none" stroke="#283a80" stroke-width="0.8"/><rect x="547" y="186.3" width="74" height="2.2" fill="#cfe39a"/><rect x="547" y="190" width="74" height="2.2" fill="#cfe39a"/><path d="M606 186 h16 v7 h-8" fill="none" stroke="#cfe39a" stroke-width="1.6"/><path d="M605 199 h14 l-3 -3.5 M611 197.5 h8" fill="none" stroke="#cfe39a" stroke-width="1.4"/>
<path d="M562.0 156.0 L576.5 174.0" fill="none" stroke="#c0a0f0" stroke-width="2.4" />
<path d="M571.5 145.0 L577.5 151.5" fill="none" stroke="#c0a0f0" stroke-width="2.4" />
<rect x="562" y="219" width="244" height="185.5" rx="6" fill="url(#mesh2)" stroke="#5a96e6" stroke-width="2.5"/>
<rect x="601.5" y="254" width="161.5" height="107.5" rx="36" fill="#787878"/>
<rect x="635" y="221.5" width="42.5" height="50" rx="19" fill="#787878"/>
<rect x="635" y="343.5" width="42.5" height="50" rx="19" fill="#787878"/>
<rect x="693" y="221.5" width="42.5" height="50" rx="19" fill="#787878"/>
<rect x="693" y="343.5" width="42.5" height="50" rx="19" fill="#787878"/>
<rect x="564.5" y="287" width="50" height="42" rx="19" fill="#787878"/><rect x="750" y="287" width="46.5" height="42" rx="19" fill="#787878"/>
<ellipse cx="620" cy="272" rx="17" ry="12" fill="none" stroke="#6a90d0" stroke-width="1" stroke-dasharray="1 1.5"/><ellipse cx="745" cy="272" rx="17" ry="12" fill="none" stroke="#6a90d0" stroke-width="1" stroke-dasharray="1 1.5"/><ellipse cx="620" cy="344" rx="17" ry="12" fill="none" stroke="#6a90d0" stroke-width="1" stroke-dasharray="1 1.5"/><ellipse cx="745" cy="344" rx="17" ry="12" fill="none" stroke="#6a90d0" stroke-width="1" stroke-dasharray="1 1.5"/>
<ellipse cx="620" cy="272" rx="11" ry="7" fill="none" stroke="#6a90d0" stroke-width="1" stroke-dasharray="1 1.5"/><ellipse cx="745" cy="272" rx="11" ry="7" fill="none" stroke="#6a90d0" stroke-width="1" stroke-dasharray="1 1.5"/><ellipse cx="620" cy="344" rx="11" ry="7" fill="none" stroke="#6a90d0" stroke-width="1" stroke-dasharray="1 1.5"/><ellipse cx="745" cy="344" rx="11" ry="7" fill="none" stroke="#6a90d0" stroke-width="1" stroke-dasharray="1 1.5"/>
<ellipse cx="620" cy="272" rx="14" ry="9.5" fill="none" stroke="#6a90d0" stroke-width="1" stroke-dasharray="1 1.5"/>
<ellipse cx="620" cy="272" rx="8" ry="5" fill="none" stroke="#6a90d0" stroke-width="1" stroke-dasharray="1 1.5"/>
<ellipse cx="620" cy="272" rx="5" ry="3" fill="none" stroke="#6a90d0" stroke-width="1" stroke-dasharray="1 1.5"/>
<ellipse cx="745" cy="272" rx="14" ry="9.5" fill="none" stroke="#6a90d0" stroke-width="1" stroke-dasharray="1 1.5"/>
<ellipse cx="745" cy="272" rx="8" ry="5" fill="none" stroke="#6a90d0" stroke-width="1" stroke-dasharray="1 1.5"/>
<ellipse cx="745" cy="272" rx="5" ry="3" fill="none" stroke="#6a90d0" stroke-width="1" stroke-dasharray="1 1.5"/>
<ellipse cx="620" cy="344" rx="14" ry="9.5" fill="none" stroke="#6a90d0" stroke-width="1" stroke-dasharray="1 1.5"/>
<ellipse cx="620" cy="344" rx="8" ry="5" fill="none" stroke="#6a90d0" stroke-width="1" stroke-dasharray="1 1.5"/>
<ellipse cx="620" cy="344" rx="5" ry="3" fill="none" stroke="#6a90d0" stroke-width="1" stroke-dasharray="1 1.5"/>
<ellipse cx="745" cy="344" rx="14" ry="9.5" fill="none" stroke="#6a90d0" stroke-width="1" stroke-dasharray="1 1.5"/>
<ellipse cx="745" cy="344" rx="8" ry="5" fill="none" stroke="#6a90d0" stroke-width="1" stroke-dasharray="1 1.5"/>
<ellipse cx="745" cy="344" rx="5" ry="3" fill="none" stroke="#6a90d0" stroke-width="1" stroke-dasharray="1 1.5"/>
<path d="M631 252 V240 Q631 215 656 215 Q682 215 682 240 V252" fill="none" stroke="#b3922a" stroke-width="1"/>
<path d="M631 365 V376 Q631 401 656 401 Q682 401 682 376 V365" fill="none" stroke="#b3922a" stroke-width="1"/>
<path d="M634 365 V376 Q634 397 656 397 Q679 397 679 376 V365" fill="none" stroke="#b3922a" stroke-width="0.8"/>
<path d="M689 252 V240 Q689 215 714 215 Q740 215 740 240 V252" fill="none" stroke="#b3922a" stroke-width="1"/>
<path d="M689 365 V376 Q689 401 714 401 Q740 401 740 376 V365" fill="none" stroke="#b3922a" stroke-width="1"/>
<path d="M692 365 V376 Q692 397 714 397 Q737 397 737 376 V365" fill="none" stroke="#b3922a" stroke-width="0.8"/>
<path d="M592 284.5 H580 Q557 284.5 557 308 Q557 331 580 331 H592" fill="none" stroke="#b3922a" stroke-width="1"/><path d="M592 288 H582 Q561 288 561 308 Q561 328 582 328 H592" fill="none" stroke="#b3922a" stroke-width="0.8"/>
<path d="M772 284.5 H784 Q808 284.5 808 308 Q808 331 784 331 H772" fill="none" stroke="#b3922a" stroke-width="1"/><path d="M772 288 H782 Q803 288 803 308 Q803 328 782 328 H772" fill="none" stroke="#b3922a" stroke-width="0.8"/>
<rect x="637.5" y="256.3" width="42.5" height="30" fill="#2c0c84"/><rect x="640.5" y="262.3" width="6" height="18" fill="#f060d0"/><rect x="671.0" y="262.3" width="6" height="18" fill="#f060d0"/><rect x="642.5" y="265.3" width="1.5" height="12" fill="#2c0c84"/><rect x="673.0" y="265.3" width="1.5" height="12" fill="#2c0c84"/><circle cx="657" cy="271" r="13.3" fill="#bc1f9c"/><circle cx="657" cy="271" r="7" fill="#f09a58"/>
<rect x="685.3" y="256.3" width="42.7" height="30" fill="#2c0c84"/><rect x="688.3" y="262.3" width="6" height="18" fill="#f060d0"/><rect x="719.0" y="262.3" width="6" height="18" fill="#f060d0"/><rect x="690.3" y="265.3" width="1.5" height="12" fill="#2c0c84"/><rect x="721.0" y="265.3" width="1.5" height="12" fill="#2c0c84"/><circle cx="705.3" cy="271" r="13.3" fill="#bc1f9c"/><circle cx="705.3" cy="271" r="7" fill="#f09a58"/>
<rect x="637.5" y="327" width="42.5" height="29.5" fill="#2c0c84"/><rect x="640.5" y="333" width="6" height="17.5" fill="#f060d0"/><rect x="671.0" y="333" width="6" height="17.5" fill="#f060d0"/><rect x="642.5" y="336" width="1.5" height="11.5" fill="#2c0c84"/><rect x="673.0" y="336" width="1.5" height="11.5" fill="#2c0c84"/><circle cx="659.6" cy="342.3" r="13.3" fill="#bc1f9c"/><circle cx="659.6" cy="342.3" r="7" fill="#f09a58"/>
<rect x="685.3" y="327" width="42.7" height="29.5" fill="#2c0c84"/><rect x="688.3" y="333" width="6" height="17.5" fill="#f060d0"/><rect x="719.0" y="333" width="6" height="17.5" fill="#f060d0"/><rect x="690.3" y="336" width="1.5" height="11.5" fill="#2c0c84"/><rect x="721.0" y="336" width="1.5" height="11.5" fill="#2c0c84"/><circle cx="708" cy="342.3" r="13.3" fill="#bc1f9c"/><circle cx="708" cy="342.3" r="7" fill="#f09a58"/>
<rect x="599.3" y="285.2" width="30" height="42" fill="#2c0c84"/><rect x="605.3" y="288.2" width="18" height="6" fill="#f060d0"/><rect x="605.3" y="318.2" width="18" height="6" fill="#f060d0"/><rect x="608.3" y="290.2" width="12" height="1.5" fill="#2c0c84"/><rect x="608.3" y="320.2" width="12" height="1.5" fill="#2c0c84"/><circle cx="614" cy="307" r="13.3" fill="#bc1f9c"/><circle cx="614" cy="307" r="7" fill="#f09a58"/>
<rect x="734.7" y="286.2" width="28.5" height="42" fill="#2c0c84"/><rect x="740.7" y="289.2" width="16.5" height="6" fill="#f060d0"/><rect x="740.7" y="319.2" width="16.5" height="6" fill="#f060d0"/><rect x="743.7" y="291.2" width="10.5" height="1.5" fill="#2c0c84"/><rect x="743.7" y="321.2" width="10.5" height="1.5" fill="#2c0c84"/><circle cx="749" cy="307" r="13.3" fill="#bc1f9c"/><circle cx="749" cy="307" r="7" fill="#f09a58"/>
<ellipse cx="653.6" cy="295.6" rx="8.2" ry="2.8" transform="rotate(242 653.6 295.6)" fill="#a2f0c6"/><ellipse cx="686.8" cy="306.9" rx="8.2" ry="2.6" transform="rotate(330 686.8 306.9)" fill="#a2f0c6"/><ellipse cx="689.7" cy="305.5" rx="5.1" ry="2.5" transform="rotate(322 689.7 305.5)" fill="#a2f0c6"/><ellipse cx="677.9" cy="307.1" rx="5.3" ry="3.1" transform="rotate(190 677.9 307.1)" fill="#a2f0c6"/><ellipse cx="683.2" cy="302.8" rx="4.6" ry="2.6" transform="rotate(293 683.2 302.8)" fill="#a2f0c6"/><ellipse cx="684.9" cy="309.3" rx="4.9" ry="1.9" transform="rotate(68 684.9 309.3)" fill="#a2f0c6"/><ellipse cx="727.6" cy="305.7" rx="8.3" ry="2.5" transform="rotate(341 727.6 305.7)" fill="#a2f0c6"/><ellipse cx="675.9" cy="302.4" rx="7.1" ry="3.1" transform="rotate(270 675.9 302.4)" fill="#a2f0c6"/><ellipse cx="696.4" cy="302.9" rx="4.7" ry="1.8" transform="rotate(313 696.4 302.9)" fill="#a2f0c6"/><ellipse cx="698.9" cy="311.3" rx="4.0" ry="2.7" transform="rotate(30 698.9 311.3)" fill="#a2f0c6"/><ellipse cx="672.1" cy="315.2" rx="6.2" ry="2.1" transform="rotate(141 672.1 315.2)" fill="#a2f0c6"/><ellipse cx="644.4" cy="310.0" rx="8.4" ry="1.6" transform="rotate(147 644.4 310.0)" fill="#a2f0c6"/><ellipse cx="681.9" cy="288.0" rx="7.5" ry="2.2" transform="rotate(241 681.9 288.0)" fill="#a2f0c6"/><ellipse cx="678.1" cy="307.1" rx="4.8" ry="3.1" transform="rotate(181 678.1 307.1)" fill="#a2f0c6"/><ellipse cx="695.3" cy="325.1" rx="8.2" ry="2.2" transform="rotate(97 695.3 325.1)" fill="#a2f0c6"/><ellipse cx="664.1" cy="318.4" rx="4.5" ry="2.8" transform="rotate(144 664.1 318.4)" fill="#a2f0c6"/><ellipse cx="695.2" cy="288.5" rx="8.3" ry="1.7" transform="rotate(259 695.2 288.5)" fill="#a2f0c6"/><ellipse cx="664.0" cy="320.6" rx="5.5" ry="3.1" transform="rotate(148 664.0 320.6)" fill="#a2f0c6"/><ellipse cx="663.8" cy="305.6" rx="4.8" ry="1.7" transform="rotate(185 663.8 305.6)" fill="#a2f0c6"/><ellipse cx="704.0" cy="321.4" rx="4.7" ry="1.7" transform="rotate(83 704.0 321.4)" fill="#a2f0c6"/><ellipse cx="711.5" cy="306.9" rx="5.1" ry="2.6" transform="rotate(350 711.5 306.9)" fill="#a2f0c6"/><ellipse cx="693.9" cy="297.7" rx="4.3" ry="3.1" transform="rotate(293 693.9 297.7)" fill="#a2f0c6"/><ellipse cx="709.1" cy="310.5" rx="4.6" ry="2.8" transform="rotate(32 709.1 310.5)" fill="#a2f0c6"/><ellipse cx="714.6" cy="303.2" rx="4.5" ry="2.3" transform="rotate(359 714.6 303.2)" fill="#a2f0c6"/><ellipse cx="708.4" cy="324.2" rx="6.0" ry="3.2" transform="rotate(41 708.4 324.2)" fill="#a2f0c6"/><ellipse cx="712.5" cy="289.7" rx="6.2" ry="2.8" transform="rotate(304 712.5 289.7)" fill="#a2f0c6"/><ellipse cx="664.2" cy="309.1" rx="4.7" ry="2.2" transform="rotate(167 664.2 309.1)" fill="#a2f0c6"/><ellipse cx="731.9" cy="306.4" rx="6.2" ry="2.1" transform="rotate(363 731.9 306.4)" fill="#a2f0c6"/><ellipse cx="696.5" cy="312.1" rx="7.9" ry="2.2" transform="rotate(49 696.5 312.1)" fill="#a2f0c6"/><ellipse cx="691.2" cy="289.9" rx="7.0" ry="2.8" transform="rotate(295 691.2 289.9)" fill="#a2f0c6"/><ellipse cx="657.3" cy="320.9" rx="6.2" ry="2.8" transform="rotate(118 657.3 320.9)" fill="#a2f0c6"/><ellipse cx="675.4" cy="300.4" rx="6.9" ry="2.5" transform="rotate(275 675.4 300.4)" fill="#a2f0c6"/><ellipse cx="712.2" cy="309.0" rx="7.0" ry="2.3" transform="rotate(-11 712.2 309.0)" fill="#a2f0c6"/><ellipse cx="696.3" cy="293.6" rx="5.6" ry="2.6" transform="rotate(312 696.3 293.6)" fill="#a2f0c6"/><ellipse cx="678.7" cy="288.4" rx="7.8" ry="3.0" transform="rotate(257 678.7 288.4)" fill="#a2f0c6"/><ellipse cx="662.8" cy="286.8" rx="6.3" ry="2.4" transform="rotate(275 662.8 286.8)" fill="#a2f0c6"/><ellipse cx="704.2" cy="325.2" rx="6.1" ry="2.7" transform="rotate(86 704.2 325.2)" fill="#a2f0c6"/><ellipse cx="674.6" cy="290.7" rx="7.5" ry="2.5" transform="rotate(239 674.6 290.7)" fill="#a2f0c6"/><ellipse cx="669.8" cy="298.6" rx="7.5" ry="2.6" transform="rotate(247 669.8 298.6)" fill="#a2f0c6"/><ellipse cx="681.0" cy="305.6" rx="6.0" ry="2.6" transform="rotate(239 681.0 305.6)" fill="#a2f0c6"/><ellipse cx="689.1" cy="324.3" rx="4.2" ry="2.4" transform="rotate(87 689.1 324.3)" fill="#a2f0c6"/><ellipse cx="683.0" cy="310.9" rx="5.4" ry="1.9" transform="rotate(59 683.0 310.9)" fill="#a2f0c6"/><ellipse cx="684.0" cy="310.4" rx="5.7" ry="2.6" transform="rotate(68 684.0 310.4)" fill="#a2f0c6"/><ellipse cx="669.0" cy="304.3" rx="4.0" ry="2.2" transform="rotate(237 669.0 304.3)" fill="#a2f0c6"/><ellipse cx="677.8" cy="318.5" rx="7.7" ry="2.2" transform="rotate(77 677.8 318.5)" fill="#a2f0c6"/><ellipse cx="714.6" cy="311.4" rx="6.5" ry="2.1" transform="rotate(-11 714.6 311.4)" fill="#a2f0c6"/><ellipse cx="638.3" cy="297.1" rx="5.9" ry="2.9" transform="rotate(228 638.3 297.1)" fill="#a2f0c6"/><ellipse cx="668.4" cy="300.4" rx="6.7" ry="2.5" transform="rotate(210 668.4 300.4)" fill="#a2f0c6"/><ellipse cx="730.7" cy="302.0" rx="5.6" ry="3.0" transform="rotate(351 730.7 302.0)" fill="#a2f0c6"/><ellipse cx="691.2" cy="308.0" rx="6.8" ry="1.8" transform="rotate(4 691.2 308.0)" fill="#a2f0c6"/><ellipse cx="649.9" cy="292.7" rx="5.9" ry="2.0" transform="rotate(219 649.9 292.7)" fill="#a2f0c6"/><ellipse cx="668.9" cy="330.0" rx="8.3" ry="3.1" transform="rotate(98 668.9 330.0)" fill="#a2f0c6"/><ellipse cx="668.4" cy="303.8" rx="6.2" ry="2.3" transform="rotate(243 668.4 303.8)" fill="#a2f0c6"/><ellipse cx="660.4" cy="328.9" rx="5.3" ry="2.4" transform="rotate(114 660.4 328.9)" fill="#a2f0c6"/><ellipse cx="706.4" cy="318.6" rx="5.3" ry="2.9" transform="rotate(40 706.4 318.6)" fill="#a2f0c6"/><ellipse cx="684.2" cy="306.2" rx="5.2" ry="3.1" transform="rotate(300 684.2 306.2)" fill="#a2f0c6"/><ellipse cx="685.1" cy="301.0" rx="4.7" ry="3.2" transform="rotate(268 685.1 301.0)" fill="#a2f0c6"/><ellipse cx="673.1" cy="322.4" rx="6.9" ry="2.6" transform="rotate(104 673.1 322.4)" fill="#a2f0c6"/><ellipse cx="681.6" cy="303.7" rx="5.4" ry="2.5" transform="rotate(283 681.6 303.7)" fill="#a2f0c6"/><ellipse cx="672.6" cy="315.0" rx="6.1" ry="2.2" transform="rotate(123 672.6 315.0)" fill="#a2f0c6"/><ellipse cx="681.0" cy="293.4" rx="5.1" ry="2.3" transform="rotate(240 681.0 293.4)" fill="#a2f0c6"/><ellipse cx="722.4" cy="297.5" rx="4.1" ry="2.8" transform="rotate(333 722.4 297.5)" fill="#a2f0c6"/><ellipse cx="653.6" cy="314.2" rx="6.8" ry="2.4" transform="rotate(166 653.6 314.2)" fill="#a2f0c6"/><ellipse cx="701.1" cy="302.7" rx="7.8" ry="1.9" transform="rotate(322 701.1 302.7)" fill="#a2f0c6"/><ellipse cx="669.4" cy="326.9" rx="7.8" ry="2.7" transform="rotate(81 669.4 326.9)" fill="#a2f0c6"/><ellipse cx="665.8" cy="311.3" rx="8.1" ry="1.8" transform="rotate(173 665.8 311.3)" fill="#a2f0c6"/><ellipse cx="651.9" cy="309.8" rx="5.5" ry="1.8" transform="rotate(172 651.9 309.8)" fill="#a2f0c6"/><ellipse cx="645.1" cy="298.1" rx="5.0" ry="2.9" transform="rotate(185 645.1 298.1)" fill="#a2f0c6"/><ellipse cx="691.3" cy="292.4" rx="7.3" ry="3.2" transform="rotate(257 691.3 292.4)" fill="#a2f0c6"/><ellipse cx="719.7" cy="307.8" rx="7.8" ry="2.0" transform="rotate(332 719.7 307.8)" fill="#a2f0c6"/><ellipse cx="651.7" cy="290.3" rx="4.6" ry="2.1" transform="rotate(245 651.7 290.3)" fill="#a2f0c6"/><ellipse cx="691.7" cy="305.5" rx="5.9" ry="1.9" transform="rotate(337 691.7 305.5)" fill="#a2f0c6"/><ellipse cx="677.6" cy="306.1" rx="5.7" ry="1.7" transform="rotate(201 677.6 306.1)" fill="#a2f0c6"/><ellipse cx="711.6" cy="313.0" rx="8.0" ry="1.8" transform="rotate(35 711.6 313.0)" fill="#a2f0c6"/><ellipse cx="664.6" cy="311.6" rx="6.2" ry="3.1" transform="rotate(161 664.6 311.6)" fill="#a2f0c6"/><ellipse cx="677.3" cy="310.1" rx="4.7" ry="2.6" transform="rotate(147 677.3 310.1)" fill="#a2f0c6"/><ellipse cx="634.3" cy="307.2" rx="6.8" ry="2.0" transform="rotate(185 634.3 307.2)" fill="#a2f0c6"/><ellipse cx="666.6" cy="305.7" rx="6.3" ry="1.8" transform="rotate(214 666.6 305.7)" fill="#a2f0c6"/><ellipse cx="684.1" cy="317.8" rx="4.8" ry="2.7" transform="rotate(99 684.1 317.8)" fill="#a2f0c6"/><ellipse cx="677.5" cy="305.0" rx="4.4" ry="1.8" transform="rotate(246 677.5 305.0)" fill="#a2f0c6"/><ellipse cx="669.2" cy="304.1" rx="6.2" ry="2.1" transform="rotate(236 669.2 304.1)" fill="#a2f0c6"/><ellipse cx="683.6" cy="305.7" rx="4.2" ry="1.8" transform="rotate(300 683.6 305.7)" fill="#a2f0c6"/><ellipse cx="717.0" cy="303.1" rx="4.5" ry="3.2" transform="rotate(326 717.0 303.1)" fill="#a2f0c6"/><ellipse cx="659.9" cy="291.2" rx="6.8" ry="2.2" transform="rotate(218 659.9 291.2)" fill="#a2f0c6"/><ellipse cx="683.9" cy="317.0" rx="5.6" ry="2.2" transform="rotate(91 683.9 317.0)" fill="#a2f0c6"/><ellipse cx="710.7" cy="322.9" rx="7.6" ry="2.3" transform="rotate(58 710.7 322.9)" fill="#a2f0c6"/><ellipse cx="699.2" cy="297.6" rx="6.6" ry="2.8" transform="rotate(312 699.2 297.6)" fill="#a2f0c6"/><ellipse cx="675.1" cy="310.4" rx="4.9" ry="1.7" transform="rotate(114 675.1 310.4)" fill="#a2f0c6"/><ellipse cx="702.8" cy="300.2" rx="4.0" ry="2.4" transform="rotate(336 702.8 300.2)" fill="#a2f0c6"/><ellipse cx="708.0" cy="298.3" rx="6.1" ry="1.8" transform="rotate(316 708.0 298.3)" fill="#a2f0c6"/><ellipse cx="688.6" cy="312.3" rx="5.7" ry="3.0" transform="rotate(48 688.6 312.3)" fill="#a2f0c6"/><ellipse cx="691.3" cy="314.0" rx="4.7" ry="2.1" transform="rotate(41 691.3 314.0)" fill="#a2f0c6"/><ellipse cx="684.5" cy="320.2" rx="8.2" ry="2.2" transform="rotate(57 684.5 320.2)" fill="#a2f0c6"/><ellipse cx="716.2" cy="301.7" rx="6.1" ry="3.1" transform="rotate(348 716.2 301.7)" fill="#a2f0c6"/><ellipse cx="708.6" cy="319.0" rx="7.0" ry="2.8" transform="rotate(30 708.6 319.0)" fill="#a2f0c6"/>
<circle cx="632" cy="287" r="3.6" fill="#38b030"/>
<circle cx="640" cy="290" r="3.6" fill="#38b030"/>
<circle cx="676" cy="289" r="3.6" fill="#38b030"/>
<circle cx="716" cy="290" r="3.6" fill="#38b030"/>
<circle cx="724" cy="291" r="3.6" fill="#38b030"/>
<circle cx="640" cy="323" r="3.6" fill="#38b030"/>
<circle cx="649" cy="323" r="3.6" fill="#38b030"/>
<circle cx="697" cy="322" r="3.6" fill="#38b030"/>
<circle cx="730" cy="317" r="3.6" fill="#38b030"/>
<circle cx="733" cy="324" r="3.6" fill="#38b030"/>
<circle cx="643" cy="291" r="5.6" fill="#bc1f9c"/><circle cx="643" cy="291" r="2.8" fill="#b0a020"/><circle cx="643" cy="291" r="1.2" fill="#bc1f9c"/>
<circle cx="692" cy="288" r="5.6" fill="#bc1f9c"/><circle cx="692" cy="288" r="2.8" fill="#b0a020"/><circle cx="692" cy="288" r="1.2" fill="#bc1f9c"/>
<circle cx="730" cy="291" r="5.6" fill="#bc1f9c"/><circle cx="730" cy="291" r="2.8" fill="#b0a020"/><circle cx="730" cy="291" r="1.2" fill="#bc1f9c"/>
<circle cx="634" cy="321" r="5.6" fill="#bc1f9c"/><circle cx="634" cy="321" r="2.8" fill="#b0a020"/><circle cx="634" cy="321" r="1.2" fill="#bc1f9c"/>
<circle cx="674" cy="324" r="5.6" fill="#bc1f9c"/><circle cx="674" cy="324" r="2.8" fill="#b0a020"/><circle cx="674" cy="324" r="1.2" fill="#bc1f9c"/>
<circle cx="721" cy="322" r="5.6" fill="#bc1f9c"/><circle cx="721" cy="322" r="2.8" fill="#b0a020"/><circle cx="721" cy="322" r="1.2" fill="#bc1f9c"/>
<rect x="647" y="298" width="4" height="4" fill="#ffffff" stroke="#f07040" stroke-width="1"/>
<rect x="718" y="294" width="4" height="4" fill="#ffffff" stroke="#f07040" stroke-width="1"/>
<rect x="660" y="314" width="4" height="4" fill="#ffffff" stroke="#f07040" stroke-width="1"/>
<rect x="637" y="310" width="4" height="4" fill="#ffffff" stroke="#f07040" stroke-width="1"/>
<rect x="680" y="330" width="4" height="4" fill="#ffffff" stroke="#f07040" stroke-width="1"/>
<rect x="634" y="304.5" width="100" height="5" fill="#5a96e6"/><rect x="700" y="327" width="38" height="7" fill="none" stroke="#6a8fe0" stroke-width="1"/><path d="M705 327 v7 M710 327 v7 M715 327 v7 M720 327 v7 M725 327 v7 M730 327 v7" stroke="#6a8fe0" stroke-width="1"/>
<rect x="663.5" y="272.5" width="9" height="9" fill="none" stroke="#5aa0e8" stroke-width="1"/><rect x="663.5" y="293.5" width="9" height="8" fill="none" stroke="#5aa0e8" stroke-width="1"/>
<path d="M600 243.5 H760" stroke="#1fae1f" stroke-width="2" shape-rendering="crispEdges"/>
<path d="M600 371 H760" stroke="#1fae1f" stroke-width="2" shape-rendering="crispEdges"/>
<rect x="811.5" y="215.5" width="35" height="33.5" rx="9" fill="#5a96e4"/>
<path d="M826 225.5 v14 M829.5 224.5 v16 M833 225.5 v14 M836.5 228.5 v8" stroke="#3a5a9a" stroke-width="1.2" stroke-dasharray="1 1.6"/>
<rect x="811.5" y="256" width="35" height="33.5" rx="9" fill="#5a96e4"/>
<path d="M826 266 v14 M829.5 265 v16 M833 266 v14 M836.5 269 v8" stroke="#3a5a9a" stroke-width="1.2" stroke-dasharray="1 1.6"/>
<rect x="811.5" y="296.5" width="35" height="33.5" rx="9" fill="#5a96e4"/>
<path d="M826 306.5 v14 M829.5 305.5 v16 M833 306.5 v14 M836.5 309.5 v8" stroke="#3a5a9a" stroke-width="1.2" stroke-dasharray="1 1.6"/>
<path d="M763.4 203.5 L535.6 203.5 L535.6 460.7 L766.0 460.7 L766.0 206.3" fill="none" stroke="#22e022" stroke-width="1.1"  shape-rendering="crispEdges"/>
<path d="M763.4 206.3 L539.4 206.3 L539.4 456.3 L763.4 456.3 L763.4 203.5" fill="none" stroke="#22e022" stroke-width="1.1"  shape-rendering="crispEdges"/>
<path d="M857.5 203.5 L795.6 203.5 L795.6 460.7 L857.5 460.7" fill="none" stroke="#22e022" stroke-width="1.1"  shape-rendering="crispEdges"/>
<path d="M857.5 206.3 L798.4 206.3 L798.4 456.3 L857.5 456.3" fill="none" stroke="#22e022" stroke-width="1.1"  shape-rendering="crispEdges"/>
<path d="M536 209.2 H857" stroke="#8a8a8a" stroke-width="0.8" shape-rendering="crispEdges"/>
<path d="M851.8 195.0 L851.8 335.0 L853.0 338.0 L857.0 338.0" fill="none" stroke="#a88418" stroke-width="2" />
<path d="M775.5 469.4 L775.5 192.5 L786.4 192.5 L786.4 469.4 L775.5 469.4" fill="none" stroke="#d4ecb4" stroke-width="1.1"  shape-rendering="crispEdges"/>
<circle cx="589" cy="418.5" r="8.2" fill="#f4f418"/><circle cx="589" cy="418.5" r="5.084" fill="none" stroke="#8a8a20" stroke-width="0.7" stroke-dasharray="1.2 1"/><circle cx="589" cy="418.5" r="2.9519999999999995" fill="#9a9a9a" stroke="#777" stroke-width="0.6"/>
<circle cx="589" cy="430.5" r="8.2" fill="#f4f418"/><circle cx="589" cy="430.5" r="5.084" fill="none" stroke="#8a8a20" stroke-width="0.7" stroke-dasharray="1.2 1"/><circle cx="589" cy="430.5" r="2.9519999999999995" fill="#9a9a9a" stroke="#777" stroke-width="0.6"/>
<circle cx="726" cy="418.5" r="8.2" fill="#f4f418"/><circle cx="726" cy="418.5" r="5.084" fill="none" stroke="#8a8a20" stroke-width="0.7" stroke-dasharray="1.2 1"/><circle cx="726" cy="418.5" r="2.9519999999999995" fill="#9a9a9a" stroke="#777" stroke-width="0.6"/>
<circle cx="726" cy="430.5" r="8.2" fill="#f4f418"/><circle cx="726" cy="430.5" r="5.084" fill="none" stroke="#8a8a20" stroke-width="0.7" stroke-dasharray="1.2 1"/><circle cx="726" cy="430.5" r="2.9519999999999995" fill="#9a9a9a" stroke="#777" stroke-width="0.6"/>
<path d="M440.0 480.0 L857.5 198.0" fill="none" stroke="#4fb0f0" stroke-width="1" />
<path d="M660.0 493.0 L857.5 352.5" fill="none" stroke="#4fb0f0" stroke-width="1" />
<path d="M462 278.5 H640" stroke="#4fb0f0" stroke-width="1" shape-rendering="crispEdges"/>
<path d="M462 297.5 H760" stroke="#4fb0f0" stroke-width="1" shape-rendering="crispEdges"/>
<path d="M462 301 H740" stroke="#4fb0f0" stroke-width="1" shape-rendering="crispEdges"/>
<path d="M552 299 H700" stroke="#4fb0f0" stroke-width="1" shape-rendering="crispEdges"/>
<path d="M498 385 H760" stroke="#4fb0f0" stroke-width="1" shape-rendering="crispEdges"/>
<path d="M760 382.6 H857.5" stroke="#4fb0f0" stroke-width="1" shape-rendering="crispEdges"/>
<path d="M807 329 H857.5" stroke="#4fb0f0" stroke-width="1" shape-rendering="crispEdges"/>
<path d="M740 332 H807" stroke="#4fb0f0" stroke-width="1" shape-rendering="crispEdges"/>
<path d="M635 183 V484" stroke="#4fb0f0" stroke-width="1" shape-rendering="crispEdges"/>
<path d="M470 337 H504" stroke="#4fb0f0" stroke-width="1" shape-rendering="crispEdges"/>
<rect x="630.5" y="178.5" width="9.5" height="9.5" fill="none" stroke="#5a96e4" stroke-width="1"/>
<g transform="translate(635.5 534) rotate(-90) scale(0.98)" fill="none" stroke="#6a8fe0" stroke-width="1.02"><rect x="0" y="-3.5" width="26" height="7"/><path d="M3 -3.5 V3.5"/><path d="M6 -3.5 V3.5"/><path d="M9 -3.5 V3.5"/><path d="M12 -3.5 V3.5"/><path d="M15 -3.5 V3.5"/><path d="M18 -3.5 V3.5"/><path d="M21 -3.5 V3.5"/><path d="M24 -3.5 V3.5"/><rect x="26" y="-2.5" width="8" height="5"/><path d="M26 -5.5 L30 -7.5 L32 -4 Z"/><path d="M34 -1.5 H42 M34 1.5 H42 M34 0 H46"/><path d="M42 0 L50 -6.5 V6.5 Z"/></g>
<g transform="translate(627 520) rotate(-33) scale(0.8)" fill="none" stroke="#6a8fe0" stroke-width="1.25"><rect x="0" y="-3.5" width="26" height="7"/><path d="M3 -3.5 V3.5"/><path d="M6 -3.5 V3.5"/><path d="M9 -3.5 V3.5"/><path d="M12 -3.5 V3.5"/><path d="M15 -3.5 V3.5"/><path d="M18 -3.5 V3.5"/><path d="M21 -3.5 V3.5"/><path d="M24 -3.5 V3.5"/><rect x="26" y="-2.5" width="8" height="5"/><path d="M26 -5.5 L30 -7.5 L32 -4 Z"/><path d="M34 -1.5 H42 M34 1.5 H42 M34 0 H46"/><path d="M42 0 L50 -6.5 V6.5 Z"/></g>
<g transform="translate(790 306.5) rotate(180) scale(0.95)" fill="none" stroke="#6a8fe0" stroke-width="1.05"><rect x="0" y="-3.5" width="26" height="7"/><path d="M3 -3.5 V3.5"/><path d="M6 -3.5 V3.5"/><path d="M9 -3.5 V3.5"/><path d="M12 -3.5 V3.5"/><path d="M15 -3.5 V3.5"/><path d="M18 -3.5 V3.5"/><path d="M21 -3.5 V3.5"/><path d="M24 -3.5 V3.5"/><rect x="26" y="-2.5" width="8" height="5"/><path d="M26 -5.5 L30 -7.5 L32 -4 Z"/><path d="M34 -1.5 H42 M34 1.5 H42 M34 0 H46"/><path d="M42 0 L50 -6.5 V6.5 Z"/></g>
<circle cx="802.8" cy="198.7" r="30" fill="none" stroke="#b4b4b4" stroke-width="5.5" opacity="0.62"/>
<rect x="787" y="184.3" width="31" height="31" fill="#8a8a8a" opacity="0.93"/><rect x="787" y="184.3" width="31" height="31" fill="none" stroke="#9a9a9a" stroke-width="0.8"/>
<text x="795" y="204" font-family="Liberation Sans" font-size="8" fill="#6e6e6e">TOP</text>
<g font-family="Liberation Sans" font-size="9.5" font-weight="bold" fill="#a2a2a2"><text x="798.5" y="171">N</text><text x="799.5" y="236.5" fill="#c4c4c4">S</text><text x="765" y="203">W</text><text x="832.5" y="203">E</text></g>
<path d="M70.3 507 V484" stroke="#20a020" stroke-width="1"/><path d="M70.3 507 H95" stroke="#c01010" stroke-width="1"/><rect x="69.8" y="503" width="1" height="4" fill="#2020e0"/>
<g font-family="Liberation Sans" font-size="11"><text x="70.5" y="483" fill="#20a020">y</text><text x="95" y="509" fill="#c01010">x</text><text x="70.8" y="508.5" fill="#2020e0">z</text></g></svg><span class="t" style="left:49.0px;top:150.5px;font-size:11px;line-height:15px;color:#e4e4e4;transform:scaleX(1.091);">[+] [Top ] [Standard ] [Wireframe ]</span>
<svg class="a" style="left:864px;top:144px" width="814" height="390" viewBox="864 144 814 390"><path d="M1051.5 144 V534" stroke="#108a30" stroke-width="1" shape-rendering="crispEdges"/>
<path d="M1054.4 144 V534" stroke="#108a30" stroke-width="1" shape-rendering="crispEdges"/>
<path d="M1059.2 144 V534" stroke="#108a30" stroke-width="1" shape-rendering="crispEdges"/>
<path d="M1063.6 144 V534" stroke="#108a30" stroke-width="1" shape-rendering="crispEdges"/>
<path d="M1076.4 144 V534" stroke="#108a30" stroke-width="1" shape-rendering="crispEdges"/>
<path d="M1193.2 144 V534" stroke="#108a30" stroke-width="1" shape-rendering="crispEdges"/>
<path d="M1196.7 144 V534" stroke="#108a30" stroke-width="1" shape-rendering="crispEdges"/>
<path d="M1140.3 534 V197.6 H1181.7 V534" fill="none" stroke="#7a7a7a" stroke-width="1"/>
<path d="M865 197.7 H1096.2" stroke="#18f018" stroke-width="1.2" shape-rendering="crispEdges"/>
<path d="M1226.6 197.7 H1677.5" stroke="#18f018" stroke-width="1.2" shape-rendering="crispEdges"/>
<path d="M944.6 197.7 V312.3" stroke="#18f018" stroke-width="1.2" shape-rendering="crispEdges"/>
<path d="M985.5 197.7 V312.3" stroke="#18f018" stroke-width="1.2" shape-rendering="crispEdges"/>
<path d="M1067.4 197.7 V312.3" stroke="#18f018" stroke-width="1.2" shape-rendering="crispEdges"/>
<path d="M1242.7 197.7 V312.3" stroke="#18f018" stroke-width="1.2" shape-rendering="crispEdges"/>
<path d="M865 312.3 H1096.2" stroke="#18f018" stroke-width="1.2" shape-rendering="crispEdges"/>
<path d="M1226.6 312.3 H1677.5" stroke="#18f018" stroke-width="1.2" shape-rendering="crispEdges"/>
<path d="M865 340.4 H1096.2" stroke="#18f018" stroke-width="1.2" shape-rendering="crispEdges"/>
<path d="M1226.6 340.4 H1677.5" stroke="#18f018" stroke-width="1.2" shape-rendering="crispEdges"/>
<path d="M1096.2 312.3 V340.4" stroke="#18f018" stroke-width="1.2" shape-rendering="crispEdges"/>
<path d="M1226.6 312.3 V340.4" stroke="#18f018" stroke-width="1.2" shape-rendering="crispEdges"/>
<path d="M865.3 312.3 V340.4" stroke="#18f018" stroke-width="1.2" shape-rendering="crispEdges"/>
<path d="M961.5 312.3 V340.4" stroke="#18f018" stroke-width="1.2" shape-rendering="crispEdges"/>
<path d="M1001.6 312.3 V340.4" stroke="#18f018" stroke-width="1.2" shape-rendering="crispEdges"/>
<rect x="1524.3" y="340.4" width="154" height="4" fill="none" stroke="#18c018" stroke-width="1"/>
<path d="M867 238.4 H1677.5" stroke="#b0209a" stroke-width="1.1" shape-rendering="crispEdges"/>
<path d="M865 299.4 H1677.5" stroke="#b0209a" stroke-width="1.1" shape-rendering="crispEdges"/>
<path d="M867.2 238.4 V299.4" stroke="#b0209a" stroke-width="1.1" shape-rendering="crispEdges"/>
<path d="M1124 238.4 V299.4" stroke="#b0209a" stroke-width="1.1" shape-rendering="crispEdges"/>
<path d="M1268.5 238.4 V320" stroke="#1a3a9a" stroke-width="1" shape-rendering="crispEdges"/>
<path d="M1635.4 238.4 V320" stroke="#1a3a9a" stroke-width="1" shape-rendering="crispEdges"/>
<path d="M1136.4 239 V483.5 H1185.4 V239" fill="none" stroke="#c8e4b0" stroke-width="1"/>
<rect x="865" y="339.5" width="37" height="80.89999999999998" fill="#4a3c14"/><path d="M865.0 339.5 V420.4" stroke="#8f6e12" stroke-width="1.3"/><path d="M867.6 339.5 V420.4" stroke="#8f6e12" stroke-width="1.3"/><path d="M870.2 339.5 V420.4" stroke="#8f6e12" stroke-width="1.3"/><path d="M872.8 339.5 V420.4" stroke="#8f6e12" stroke-width="1.3"/><path d="M875.4 339.5 V420.4" stroke="#8f6e12" stroke-width="1.3"/><path d="M878.0 339.5 V420.4" stroke="#8f6e12" stroke-width="1.3"/><path d="M880.6 339.5 V420.4" stroke="#8f6e12" stroke-width="1.3"/><path d="M883.2 339.5 V420.4" stroke="#8f6e12" stroke-width="1.3"/><path d="M885.8 339.5 V420.4" stroke="#8f6e12" stroke-width="1.3"/><path d="M888.4 339.5 V420.4" stroke="#8f6e12" stroke-width="1.3"/><path d="M891.0 339.5 V420.4" stroke="#8f6e12" stroke-width="1.3"/><path d="M893.6 339.5 V420.4" stroke="#8f6e12" stroke-width="1.3"/><path d="M896.2 339.5 V420.4" stroke="#8f6e12" stroke-width="1.3"/><path d="M898.8 339.5 V420.4" stroke="#8f6e12" stroke-width="1.3"/><path d="M901.4 339.5 V420.4" stroke="#8f6e12" stroke-width="1.3"/><rect x="865" y="411" width="37" height="9.399999999999977" fill="#8a6a12"/><rect x="865" y="339.5" width="37" height="1.2" fill="#8f6e12"/>
<rect x="919" y="339.5" width="29" height="110.10000000000002" fill="#4a3c14"/><path d="M919.0 339.5 V449.6" stroke="#8f6e12" stroke-width="1.3"/><path d="M921.6 339.5 V449.6" stroke="#8f6e12" stroke-width="1.3"/><path d="M924.2 339.5 V449.6" stroke="#8f6e12" stroke-width="1.3"/><path d="M926.8 339.5 V449.6" stroke="#8f6e12" stroke-width="1.3"/><path d="M929.4 339.5 V449.6" stroke="#8f6e12" stroke-width="1.3"/><path d="M932.0 339.5 V449.6" stroke="#8f6e12" stroke-width="1.3"/><path d="M934.6 339.5 V449.6" stroke="#8f6e12" stroke-width="1.3"/><path d="M937.2 339.5 V449.6" stroke="#8f6e12" stroke-width="1.3"/><path d="M939.8 339.5 V449.6" stroke="#8f6e12" stroke-width="1.3"/><path d="M942.4 339.5 V449.6" stroke="#8f6e12" stroke-width="1.3"/><path d="M945.0 339.5 V449.6" stroke="#8f6e12" stroke-width="1.3"/><path d="M947.6 339.5 V449.6" stroke="#8f6e12" stroke-width="1.3"/><rect x="919" y="440" width="29" height="9.600000000000023" fill="#8a6a12"/><rect x="919" y="339.5" width="29" height="1.2" fill="#8f6e12"/>
<path d="M866 342.5 H888 V346" fill="none" stroke="#18c018" stroke-width="0.8"/>
<path d="M960 340.8 H1064.5 V343.5 L1048 345 H1041.5 V534 H1025.2 V352 Q1025 346 1016 345 L1001 344.5 V472.8 H984 V352 Q984 346 975 345 L960 343.8 Z" fill="#5ce0c8"/>
<path d="M967 341.6 H996 M1024 341.6 H1050" stroke="#1a4a40" stroke-width="0.9" stroke-dasharray="1 1.4"/>
<rect x="876" y="411" width="13" height="10" fill="none"/>
<path d="M877 411 V421" stroke="#f8f810" stroke-width="1.1" shape-rendering="crispEdges"/>
<path d="M879.5 411 V421" stroke="#f8f810" stroke-width="1.1" shape-rendering="crispEdges"/>
<path d="M882 411 V421" stroke="#f8f810" stroke-width="1.1" shape-rendering="crispEdges"/>
<path d="M884.5 411 V421" stroke="#f8f810" stroke-width="1.1" shape-rendering="crispEdges"/>
<path d="M887 411 V421" stroke="#f8f810" stroke-width="1.1" shape-rendering="crispEdges"/>
<path d="M928.5 440 V450" stroke="#f8f810" stroke-width="1.1" shape-rendering="crispEdges"/>
<path d="M931 440 V450" stroke="#f8f810" stroke-width="1.1" shape-rendering="crispEdges"/>
<path d="M933.5 440 V450" stroke="#f8f810" stroke-width="1.1" shape-rendering="crispEdges"/>
<path d="M936 440 V450" stroke="#f8f810" stroke-width="1.1" shape-rendering="crispEdges"/>
<path d="M938.5 440 V450" stroke="#f8f810" stroke-width="1.1" shape-rendering="crispEdges"/>
<g fill="none" stroke="#f8f810" stroke-width="1.15"><path d="M882.3 420.5 Q865.8 422.8 865.8 435.5" /><path d="M882.3 420.5 Q868.5 422.8 868.5 435.5" /><path d="M882.3 420.5 Q871.3 422.8 871.3 435.5" /><path d="M882.3 420.5 Q874.0 422.8 874.0 435.5" /><path d="M882.3 420.5 Q876.8 422.8 876.8 435.5" /><path d="M882.3 420.5 Q879.5 422.8 879.5 435.5" /><path d="M882.3 420.5 Q882.3 422.8 882.3 435.5" /><path d="M882.3 420.5 Q885.0 422.8 885.0 435.5" /><path d="M882.3 420.5 Q887.8 422.8 887.8 435.5" /><path d="M882.3 420.5 Q890.5 422.8 890.5 435.5" /><path d="M882.3 420.5 Q893.3 422.8 893.3 435.5" /><path d="M882.3 420.5 Q896.0 422.8 896.0 435.5" /><path d="M882.3 420.5 Q898.8 422.8 898.8 435.5" /><path d="M872.4 423.5 H892.2"/><path d="M869.1 426.5 H895.5"/><path d="M867.2 429.5 H897.4"/><path d="M866.1 432.5 H898.5"/><path d="M865.8 435.5 H898.8"/><path d="M865.8 435.5 L843.3 534"/><path d="M867.6 435.5 L847.6 534"/><path d="M869.5 435.5 L852.0 534"/><path d="M871.3 435.5 L856.3 534"/><path d="M873.1 435.5 L860.6 534"/><path d="M875.0 435.5 L865.0 534"/><path d="M876.8 435.5 L869.3 534"/><path d="M878.6 435.5 L873.6 534"/><path d="M880.5 435.5 L878.0 534"/><path d="M882.3 435.5 L882.3 534"/><path d="M884.1 435.5 L886.6 534"/><path d="M886.0 435.5 L891.0 534"/><path d="M887.8 435.5 L895.3 534"/><path d="M889.6 435.5 L899.6 534"/><path d="M891.5 435.5 L904.0 534"/><path d="M893.3 435.5 L908.3 534"/><path d="M895.1 435.5 L912.6 534"/><path d="M897.0 435.5 L917.0 534"/><path d="M898.8 435.5 L921.3 534"/><path d="M874.0 428.0 L843.3 534"/><path d="M876.1 428.0 L853.0 534"/><path d="M878.2 428.0 L862.8 534"/><path d="M880.2 428.0 L872.5 534"/><path d="M882.3 428.0 L882.3 534"/><path d="M884.4 428.0 L892.0 534"/><path d="M886.4 428.0 L901.8 534"/><path d="M888.5 428.0 L911.5 534"/><path d="M890.5 428.0 L921.3 534"/><path d="M855.0 482.8 H909.6"/><path d="M845.6 524 H919.0"/></g>
<g fill="none" stroke="#f8f810" stroke-width="1.15"><path d="M933.3 449.8 Q915.8 452.4 915.8 466.8" /><path d="M933.3 449.8 Q918.7 452.4 918.7 466.8" /><path d="M933.3 449.8 Q921.6 452.4 921.6 466.8" /><path d="M933.3 449.8 Q924.5 452.4 924.5 466.8" /><path d="M933.3 449.8 Q927.5 452.4 927.5 466.8" /><path d="M933.3 449.8 Q930.4 452.4 930.4 466.8" /><path d="M933.3 449.8 Q933.3 452.4 933.3 466.8" /><path d="M933.3 449.8 Q936.2 452.4 936.2 466.8" /><path d="M933.3 449.8 Q939.1 452.4 939.1 466.8" /><path d="M933.3 449.8 Q942.0 452.4 942.0 466.8" /><path d="M933.3 449.8 Q945.0 452.4 945.0 466.8" /><path d="M933.3 449.8 Q947.9 452.4 947.9 466.8" /><path d="M933.3 449.8 Q950.8 452.4 950.8 466.8" /><path d="M922.8 453.2 H943.8"/><path d="M919.3 456.6 H947.3"/><path d="M917.3 460.0 H949.3"/><path d="M916.2 463.4 H950.4"/><path d="M915.8 466.8 H950.8"/><path d="M915.8 466.8 L898.3 534"/><path d="M917.7 466.8 L902.2 534"/><path d="M919.7 466.8 L906.1 534"/><path d="M921.6 466.8 L910.0 534"/><path d="M923.6 466.8 L913.9 534"/><path d="M925.5 466.8 L917.7 534"/><path d="M927.5 466.8 L921.6 534"/><path d="M929.4 466.8 L925.5 534"/><path d="M931.4 466.8 L929.4 534"/><path d="M933.3 466.8 L933.3 534"/><path d="M935.2 466.8 L937.2 534"/><path d="M937.2 466.8 L941.1 534"/><path d="M939.1 466.8 L945.0 534"/><path d="M941.1 466.8 L948.9 534"/><path d="M943.0 466.8 L952.7 534"/><path d="M945.0 466.8 L956.6 534"/><path d="M946.9 466.8 L960.5 534"/><path d="M948.9 466.8 L964.4 534"/><path d="M950.8 466.8 L968.3 534"/><path d="M924.5 458.3 L898.3 534"/><path d="M926.7 458.3 L907.0 534"/><path d="M928.9 458.3 L915.8 534"/><path d="M931.1 458.3 L924.5 534"/><path d="M933.3 458.3 L933.3 534"/><path d="M935.5 458.3 L942.0 534"/><path d="M937.7 458.3 L950.8 534"/><path d="M939.9 458.3 L959.5 534"/><path d="M942.0 458.3 L968.3 534"/><path d="M907.2 500 H959.4"/><path d="M903.9 512.5 H962.7"/></g>
<g fill="none" stroke="#f8f810" stroke-width="1.15"><path d="M991.6 473 Q974.0 475.9 974.0 492.0" /><path d="M991.6 473 Q976.9 475.9 976.9 492.0" /><path d="M991.6 473 Q979.9 475.9 979.9 492.0" /><path d="M991.6 473 Q982.8 475.9 982.8 492.0" /><path d="M991.6 473 Q985.7 475.9 985.7 492.0" /><path d="M991.6 473 Q988.7 475.9 988.7 492.0" /><path d="M991.6 473 Q991.6 475.9 991.6 492.0" /><path d="M991.6 473 Q994.5 475.9 994.5 492.0" /><path d="M991.6 473 Q997.5 475.9 997.5 492.0" /><path d="M991.6 473 Q1000.4 475.9 1000.4 492.0" /><path d="M991.6 473 Q1003.3 475.9 1003.3 492.0" /><path d="M991.6 473 Q1006.3 475.9 1006.3 492.0" /><path d="M991.6 473 Q1009.2 475.9 1009.2 492.0" /><path d="M981.0 476.8 H1002.2"/><path d="M977.5 480.6 H1005.7"/><path d="M975.5 484.4 H1007.7"/><path d="M974.4 488.2 H1008.8"/><path d="M974.0 492.0 H1009.2"/><path d="M974.0 492.0 L964.1 534"/><path d="M976.0 492.0 L967.2 534"/><path d="M977.9 492.0 L970.2 534"/><path d="M979.9 492.0 L973.3 534"/><path d="M981.8 492.0 L976.3 534"/><path d="M983.8 492.0 L979.4 534"/><path d="M985.7 492.0 L982.4 534"/><path d="M987.7 492.0 L985.5 534"/><path d="M989.6 492.0 L988.5 534"/><path d="M991.6 492.0 L991.6 534"/><path d="M993.6 492.0 L994.7 534"/><path d="M995.5 492.0 L997.7 534"/><path d="M997.5 492.0 L1000.8 534"/><path d="M999.4 492.0 L1003.8 534"/><path d="M1001.4 492.0 L1006.9 534"/><path d="M1003.3 492.0 L1009.9 534"/><path d="M1005.3 492.0 L1013.0 534"/><path d="M1007.2 492.0 L1016.0 534"/><path d="M1009.2 492.0 L1019.1 534"/><path d="M982.8 482.5 L964.1 534"/><path d="M985.0 482.5 L971.0 534"/><path d="M987.2 482.5 L977.9 534"/><path d="M989.4 482.5 L984.7 534"/><path d="M991.6 482.5 L991.6 534"/><path d="M993.8 482.5 L998.5 534"/><path d="M996.0 482.5 L1005.4 534"/><path d="M998.2 482.5 L1012.2 534"/><path d="M1000.4 482.5 L1019.1 534"/></g>
<path d="M882.5 430 V534" stroke="#4aa8f0" stroke-width="1.2" shape-rendering="crispEdges"/>
<path d="M933.5 460 V534" stroke="#4aa8f0" stroke-width="1.2" shape-rendering="crispEdges"/>
<path d="M991.5 492 V534" stroke="#4aa8f0" stroke-width="1.2" shape-rendering="crispEdges"/>
<path d="M865 443 Q880 470 889 534" fill="none" stroke="#9462e6" stroke-width="4.2"/>
<path d="M866 462 h7 M867 475 h9 M869 488 h9 M871 501 h10 M873 514 h10 M875 526 h10 M868 455 V534" fill="none" stroke="#9462e6" stroke-width="1"/>
<path d="M867.2 299.4 V534" stroke="#f01010" stroke-width="1.3" shape-rendering="crispEdges"/>
<path d="M1001.4 238.4 V534" stroke="#f01010" stroke-width="1.3" shape-rendering="crispEdges"/>
<path d="M1042.2 238.4 V534" stroke="#f01010" stroke-width="1.3" shape-rendering="crispEdges"/>
<path d="M1085 322 V534" stroke="#f01010" stroke-width="1.2" shape-rendering="crispEdges"/>
<path d="M1124 299.4 V534" stroke="#f01010" stroke-width="1.2" shape-rendering="crispEdges"/>
<path d="M1185.6 483.5 V534" stroke="#f01010" stroke-width="1.2" shape-rendering="crispEdges"/>
<path d="M1074.5 534 V192 H1084 V534" fill="none" stroke="#ffff00" stroke-width="1.3" shape-rendering="crispEdges"/>
<path d="M1073 322.5 h2 m1 0 h2 m1 0 l2 -1.5 l2 1.5" fill="none" stroke="#f0f010" stroke-width="0.9"/>
<path d="M1054.6 330 V534" stroke="#d4d4d4" stroke-width="2.6" shape-rendering="crispEdges"/>
<path d="M1059.7 330 V534" stroke="#d4d4d4" stroke-width="1.6" shape-rendering="crispEdges"/>
<path d="M1068.2 330 V534" stroke="#d4d4d4" stroke-width="1.8" shape-rendering="crispEdges"/>
<path d="M1041.5 346.0 L1041.5 334.6 L1054.0 334.6" fill="none" stroke="#e8e8e8" stroke-width="1.4"  shape-rendering="crispEdges"/>
<path d="M1054.6 330.5 L1068.2 330.5" fill="none" stroke="#e8e8e8" stroke-width="1.4"  shape-rendering="crispEdges"/>
<path d="M1042 524.4 H1083" stroke="#9020c0" stroke-width="1.2" shape-rendering="crispEdges"/>
<path d="M1254.6 534 V318.5 H1649.6 V534" fill="none" stroke="#b81a5a" stroke-width="1"/>
<rect x="1257.3" y="318.5" width="4" height="216" fill="#b81a5a"/>
<path d="M1264 318.5 V534" stroke="#b81a5a" stroke-width="1" shape-rendering="crispEdges"/>
<rect x="1272" y="318.5" width="8" height="216" fill="#b81a5a"/>
<rect x="1624" y="318.5" width="7.6" height="216" fill="#b81a5a"/>
<path d="M1635.4 318.5 V534" stroke="#b81a5a" stroke-width="1" shape-rendering="crispEdges"/>
<rect x="1643" y="318.5" width="4" height="216" fill="#b81a5a"/>
<rect x="1272" y="528.5" width="359.6" height="6" fill="#b81a5a"/>
<path d="M1254.6 524 H1649.6" stroke="#b81a5a" stroke-width="1" shape-rendering="crispEdges"/>
<rect x="1275" y="523" width="2" height="1.4" fill="#2030c0"/><rect x="1275" y="531" width="2" height="1.4" fill="#fff"/><rect x="1676.5" y="530.5" width="1" height="1.2" fill="#ddd"/>
<path d="M1347.8 528.5 V320.5 H1418.5 V528.5" fill="none" stroke="#c4a2f2" stroke-width="1.4"/><path d="M1354 528.5 V322.8 H1411.6 V528.5" fill="none" stroke="#c4a2f2" stroke-width="1.4"/>
<path d="M1460 341.5 H1486" stroke="#6a9a40" stroke-width="1"/><rect x="1468.5" y="338.5" width="7" height="3" fill="#f8f810"/>
<g fill="none" stroke="#f8f810" stroke-width="1.15"><path d="M1472.3 341 Q1455.0 345.9 1455.0 374.0" /><path d="M1472.3 341 Q1457.9 345.9 1457.9 374.0" /><path d="M1472.3 341 Q1460.8 345.9 1460.8 374.0" /><path d="M1472.3 341 Q1463.6 345.9 1463.6 374.0" /><path d="M1472.3 341 Q1466.5 345.9 1466.5 374.0" /><path d="M1472.3 341 Q1469.4 345.9 1469.4 374.0" /><path d="M1472.3 341 Q1472.3 345.9 1472.3 374.0" /><path d="M1472.3 341 Q1475.2 345.9 1475.2 374.0" /><path d="M1472.3 341 Q1478.1 345.9 1478.1 374.0" /><path d="M1472.3 341 Q1481.0 345.9 1481.0 374.0" /><path d="M1472.3 341 Q1483.8 345.9 1483.8 374.0" /><path d="M1472.3 341 Q1486.7 345.9 1486.7 374.0" /><path d="M1472.3 341 Q1489.6 345.9 1489.6 374.0" /><path d="M1461.9 347.6 H1482.7"/><path d="M1458.5 354.2 H1486.1"/><path d="M1456.4 360.8 H1488.2"/><path d="M1455.3 367.4 H1489.3"/><path d="M1455.0 374.0 H1489.6"/><path d="M1455.0 374.0 L1432.8 452.5"/><path d="M1456.9 374.0 L1437.2 452.5"/><path d="M1458.8 374.0 L1441.6 452.5"/><path d="M1460.8 374.0 L1446.0 452.5"/><path d="M1462.7 374.0 L1450.4 452.5"/><path d="M1464.6 374.0 L1454.7 452.5"/><path d="M1466.5 374.0 L1459.1 452.5"/><path d="M1468.5 374.0 L1463.5 452.5"/><path d="M1470.4 374.0 L1467.9 452.5"/><path d="M1472.3 374.0 L1472.3 452.5"/><path d="M1474.2 374.0 L1476.7 452.5"/><path d="M1476.1 374.0 L1481.1 452.5"/><path d="M1478.1 374.0 L1485.5 452.5"/><path d="M1480.0 374.0 L1489.9 452.5"/><path d="M1481.9 374.0 L1494.2 452.5"/><path d="M1483.8 374.0 L1498.6 452.5"/><path d="M1485.8 374.0 L1503.0 452.5"/><path d="M1487.7 374.0 L1507.4 452.5"/><path d="M1489.6 374.0 L1511.8 452.5"/><path d="M1463.6 357.5 L1432.8 452.5"/><path d="M1465.8 357.5 L1442.7 452.5"/><path d="M1468.0 357.5 L1452.5 452.5"/><path d="M1470.1 357.5 L1462.4 452.5"/><path d="M1472.3 357.5 L1472.3 452.5"/><path d="M1474.5 357.5 L1482.2 452.5"/><path d="M1476.6 357.5 L1492.0 452.5"/><path d="M1478.8 357.5 L1501.9 452.5"/><path d="M1481.0 357.5 L1511.8 452.5"/><path d="M1444.5 411 H1500.1"/><path d="M1432.9 452 H1511.7"/></g>
<path d="M1472.5 360 V534" stroke="#4aa8f0" stroke-width="1.1" shape-rendering="crispEdges"/>
<ellipse cx="1620.8" cy="216.8" rx="38" ry="3" fill="none" stroke="#8c8c8c" stroke-width="1.6" opacity="0.8"/>
<rect x="1606.6" y="184" width="31.4" height="31" fill="#7e7e7e" opacity="0.92"/><rect x="1606.6" y="184" width="31.4" height="31" fill="none" stroke="#8c8c8c" stroke-width="0.8"/>
<text x="1611" y="203" font-family="Liberation Sans" font-size="7.5" fill="#6a6a6a">FRONT</text>
<path d="M890.8 507.2 V480" stroke="#2020e0" stroke-width="1.2"/><path d="M890.8 507.2 H915" stroke="#d01010" stroke-width="1.2"/><path d="M889 500 l3 6" stroke="#20a020" stroke-width="1.5"/>
<g font-family="Liberation Sans" font-size="11"><text x="889" y="481" fill="#2020e0">z</text><text x="914.5" y="509" fill="#d01010">x</text></g></svg><span class="t" style="left:868.0px;top:150.5px;font-size:11px;line-height:15px;color:#e4e4e4;transform:scaleX(1.081);">[+] [Front ] [Standard ] [Wireframe ]</span>
<svg class="a" style="left:45px;top:540px" width="813" height="390" viewBox="45 540 813 390"><path d="M279.5 540 V930" stroke="#5a5a5a" stroke-width="1" shape-rendering="crispEdges"/>
<path d="M605.8 540 V930" stroke="#0c0c0c" stroke-width="1.3" shape-rendering="crispEdges"/>
<path d="M45 778.5 H232" stroke="#0a0a0a" stroke-width="1.3" shape-rendering="crispEdges"/>
<path d="M232 778.5 H797" stroke="#808080" stroke-width="1.2" shape-rendering="crispEdges"/>
<path d="M797 778.5 H857.5" stroke="#0a0a0a" stroke-width="1.3" shape-rendering="crispEdges"/>
<path d="M120 762 Q120 757.5 125 757 H147 Q149 757 149 760 V765.5 H158 V760 Q158 757 161 757 H183 Q187.5 757.5 187.5 762 V774 Q188 778.8 184 778.8 H120 Z" fill="#58c6e0"/>
<rect x="106" y="768.2" width="25" height="10.6" rx="3" fill="#ba9ae4"/>
<path d="M272 680 V670 H326 V680 M275.5 680 V671 M299 671 V680 M322.5 671 V680" fill="none" stroke="#0e9040" stroke-width="2"/>
<path d="M361.3 684 V671.3 H457 Q458.6 671.3 458.6 673 V684" fill="none" stroke="#e0dca0" stroke-width="1.2"/>
<rect x="387" y="673" width="2.2" height="9" fill="#70a0e8"/>
<rect x="398" y="673" width="2.2" height="9" fill="#70a0e8"/>
<rect x="409" y="673" width="2.2" height="9" fill="#70a0e8"/>
<rect x="259" y="680" width="288" height="98" fill="#b08e18"/>
<rect x="259" y="676" width="288" height="5" fill="#353535"/>
<path d="M260 680.5 H336 M344 680.5 H456 M468 680.5 H543" stroke="#b08e18" stroke-width="2" stroke-dasharray="9 1.5 4 1 12 2"/>
<rect x="337" y="681" width="28" height="3" fill="#10e810"/><rect x="353" y="684" width="10" height="6" fill="#10e810"/><rect x="437" y="681" width="30" height="3" fill="#10e810"/><rect x="441" y="684" width="8" height="7" fill="#10e810"/><rect x="536" y="681" width="8" height="3" fill="#10e810"/>
<rect x="257" y="684.5" width="290" height="5.5" fill="#f20000"/>
<rect x="256" y="690" width="3.4" height="88" fill="#f20000"/>
<rect x="311.0" y="690" width="1.2" height="88" fill="#f20000"/>
<rect x="314.4" y="690" width="1.2" height="88" fill="#f20000"/>
<rect x="317.2" y="690" width="2.6" height="88" fill="#f20000"/>
<rect x="322.0" y="690" width="1.2" height="88" fill="#f20000"/>
<rect x="325.4" y="690" width="1.2" height="88" fill="#f20000"/>
<rect x="328.2" y="690" width="2.0" height="88" fill="#f20000"/>
<rect x="332.4" y="690" width="1.2" height="88" fill="#f20000"/>
<rect x="335.0" y="690" width="2.6" height="88" fill="#f20000"/>
<rect x="339.8" y="690" width="2.6" height="88" fill="#f20000"/>
<rect x="344.0" y="690" width="1.2" height="88" fill="#f20000"/>
<rect x="346.6" y="690" width="1.2" height="88" fill="#f20000"/>
<rect x="350.0" y="690" width="2.6" height="88" fill="#f20000"/>
<rect x="338.5" y="690" width="13" height="88" fill="#f20000"/>
<rect x="340.5" y="690" width="1.2" height="88" fill="#6a1010"/><rect x="346" y="690" width="1" height="88" fill="#e8a040"/>
<rect x="337.3" y="694" width="2.4" height="70" fill="#d890d8"/>
<rect x="353" y="690" width="12" height="88" fill="#4a2a18"/><rect x="353" y="690" width="1.4" height="88" fill="#f20000"/><rect x="363" y="690" width="1.6" height="88" fill="#f20000"/><rect x="358.6" y="758.7" width="4.2" height="18.5" fill="#181010"/><path d="M358.6 763 h4 M358.6 769 h4 M358.6 774 h4" stroke="#c8a020" stroke-width="1"/>
<rect x="359.2" y="692" width="3.6" height="10" fill="#f8f000"/>
<rect x="355.8" y="690" width="1.3" height="88" fill="#60b8f0"/>
<rect x="366" y="684.6" width="1.6" height="10" fill="#b08e18"/>
<rect x="371" y="684.6" width="1.6" height="10" fill="#b08e18"/>
<rect x="376" y="684.6" width="1.6" height="10" fill="#b08e18"/>
<rect x="381" y="684.6" width="1.6" height="10" fill="#b08e18"/>
<rect x="386" y="684.6" width="1.6" height="10" fill="#b08e18"/>
<rect x="391" y="684.6" width="1.6" height="10" fill="#b08e18"/>
<rect x="396" y="684.6" width="1.6" height="10" fill="#b08e18"/>
<rect x="401" y="684.6" width="1.6" height="10" fill="#b08e18"/>
<rect x="406" y="684.6" width="1.6" height="10" fill="#b08e18"/>
<rect x="411" y="684.6" width="1.6" height="10" fill="#b08e18"/>
<rect x="416" y="684.6" width="1.6" height="10" fill="#b08e18"/>
<rect x="421" y="684.6" width="1.6" height="10" fill="#b08e18"/>
<rect x="426" y="684.6" width="1.6" height="10" fill="#b08e18"/>
<rect x="431" y="684.6" width="1.6" height="10" fill="#b08e18"/>
<rect x="436" y="684.6" width="1.6" height="10" fill="#b08e18"/>
<rect x="376.5" y="706.9" width="45.5" height="39" fill="none" stroke="#68e0a0" stroke-width="1.2"/>
<rect x="378.5" y="709" width="42" height="37" fill="#68e0a0"/>
<rect x="380" y="709" width="1.5" height="37" fill="#b08e18"/>
<rect x="383.5" y="709" width="1.5" height="37" fill="#b08e18"/>
<rect x="387" y="709" width="1.5" height="37" fill="#b08e18"/>
<rect x="409.5" y="709" width="1.5" height="37" fill="#b08e18"/>
<rect x="413" y="709" width="1.5" height="37" fill="#b08e18"/>
<rect x="416.5" y="709" width="1.5" height="37" fill="#b08e18"/>
<rect x="419.5" y="709" width="1.5" height="37" fill="#b08e18"/>
<path d="M369.6 695.3 H425.4" fill="none" stroke="#f8f810" stroke-width="1.3"/>
<path d="M370 696 l4 6 M382 696 l4 6 M397.5 695 v8 M411 696 l-4 6 M424 696 l-5 6 M419 716 l7 -4 M419 732 h8 M419 748 l7 3 M383 716 l5 -3 M383 732 h4 M384 748 l5 -3 M397.5 709 v5" stroke="#f8f810" stroke-width="1.2"/>
<rect x="390" y="715" width="15" height="17" fill="none" stroke="#6a90e0" stroke-width="1"/><path d="M390 719 h15 M390 723 h15 M390 727 h15 M395 715 v17 M400 715 v17" stroke="#6a90e0" stroke-width="0.8"/>
<rect x="375" y="684" width="1.4" height="94" fill="#f20000"/>
<rect x="394.5" y="684" width="1.4" height="94" fill="#f20000"/>
<rect x="405" y="684" width="1.4" height="94" fill="#f20000"/>
<rect x="415" y="684" width="1.4" height="94" fill="#f20000"/>
<rect x="424" y="684" width="1.4" height="94" fill="#f20000"/>
<rect x="432.5" y="684" width="1.4" height="94" fill="#f20000"/>
<rect x="382.8" y="745.5" width="42" height="7" fill="none" stroke="#f20000" stroke-width="1"/>
<rect x="437.5" y="718" width="3.5" height="20" fill="#101010"/>
<path d="M362 778 L363 764 L357 760 L355 748 L357.5 738 L354.5 730 L357 722 L355 716 L359 712 L358 706 L362 708 L364 702 L367 709 L370 704 L371 712 L376 706 L380 704 L389 702 L383 708 L380 714 L384 720 L381 726 L386 734 L384 744 L388 752 L384 760 L380 762 L379 778 Z" fill="#767676"/>
<path d="M388 722 L391 730 L394 738 L397 724 L400 720 L404 724 L408 720 L412 724 L417 722 L415 730 L419 734 L416 740 L421 744 L417 750 L423 754 L424 764 L420 772 L414 774 L412 778 L397 778 L395 770 L389 768 L387 760 L392 752 L390 744 L394 742 L388 730 Z" fill="#767676"/>
<path d="M378 760 Q384 756 391 760 L392 776 L378 777 Z" fill="#767676"/><path d="M381 764 v9 M386 765 v7" stroke="#b08e18" stroke-width="1.6"/>
<path d="M392 770 l5 -8 l6 10 z" fill="#68e0a0"/>
<rect x="447" y="684" width="100" height="94" fill="#f20000"/><rect x="456" y="690" width="1" height="88" fill="#701010"/><rect x="459.5" y="690" width="1.2" height="88" fill="#c8a020"/><rect x="464" y="690" width="1" height="88" fill="#701010"/>
<rect x="474" y="693" width="60" height="77" fill="#b08e18"/>
<rect x="476.2" y="708.2" width="47.5" height="38.2" fill="#62e0a0"/>
<rect x="478" y="708.2" width="1" height="38.2" fill="#8a9a40"/>
<rect x="481" y="708.2" width="1" height="38.2" fill="#8a9a40"/>
<rect x="484" y="708.2" width="1" height="38.2" fill="#8a9a40"/>
<rect x="487" y="708.2" width="1" height="38.2" fill="#8a9a40"/>
<rect x="490" y="708.2" width="1" height="38.2" fill="#8a9a40"/>
<rect x="493" y="708.2" width="1" height="38.2" fill="#8a9a40"/>
<rect x="496" y="708.2" width="1" height="38.2" fill="#8a9a40"/>
<rect x="499" y="708.2" width="1" height="38.2" fill="#8a9a40"/>
<rect x="502" y="708.2" width="1" height="38.2" fill="#8a9a40"/>
<rect x="505" y="708.2" width="1" height="38.2" fill="#8a9a40"/>
<rect x="508" y="708.2" width="1" height="38.2" fill="#8a9a40"/>
<rect x="511" y="708.2" width="1" height="38.2" fill="#8a9a40"/>
<rect x="514" y="708.2" width="1" height="38.2" fill="#8a9a40"/>
<rect x="517" y="708.2" width="1" height="38.2" fill="#8a9a40"/>
<rect x="520" y="708.2" width="1" height="38.2" fill="#8a9a40"/>
<rect x="491" y="708.2" width="4.5" height="38.2" fill="#62e0a0"/><rect x="503" y="708.2" width="4.5" height="38.2" fill="#62e0a0"/>
<rect x="479.5" y="693" width="1.3" height="77" fill="#f20000"/>
<rect x="485.5" y="693" width="1.3" height="77" fill="#f20000"/>
<rect x="491.6" y="693" width="1.3" height="77" fill="#f20000"/>
<rect x="497.7" y="693" width="1.3" height="77" fill="#f20000"/>
<rect x="503.8" y="693" width="1.3" height="77" fill="#f20000"/>
<rect x="510" y="693" width="1.3" height="77" fill="#f20000"/>
<rect x="516" y="693" width="1.3" height="77" fill="#f20000"/>
<rect x="522.3" y="693" width="1.3" height="77" fill="#f20000"/>
<rect x="528.3" y="693" width="1.3" height="77" fill="#f20000"/>
<rect x="474.2" y="695.3" width="54.5" height="11.5" fill="none" stroke="#f8f810" stroke-width="1.2"/><rect x="474.2" y="746.4" width="54.5" height="21" fill="none" stroke="#f8f810" stroke-width="1.2"/>
<path d="M474 696 l5 5 M486 696 l3 6 M501.5 694 v9 M515 696 l-3 6 M528.5 696 l-5 5 M472 712 l6 3 M472 731 h7 M472 750 l6 -3 M531 712 l-6 3 M531 731 h-7 M531 750 l-6 -3 M474 766 l5 -5 M488 766 l3 -6 M501.5 767 v-9 M515 766 l-3 -6 M528.5 766 l-5 -5 M486 714 l4 3 M486 731 h5 M516 714 l-4 3 M516 731 h-5 M501.5 712 v5 M501.5 746 v6" stroke="#f8f810" stroke-width="1.2"/>
<rect x="494.6" y="732.4" width="8" height="8" fill="none" stroke="#5a86d8" stroke-width="1"/>
<rect x="537" y="690" width="2" height="88" fill="#401010"/><rect x="540.5" y="698" width="1.5" height="70" fill="#f0e020"/><rect x="537.8" y="698" width="1" height="20" fill="#f0e020"/>
<path d="M549.7 690 V778" stroke="#f20000" stroke-width="1.1" shape-rendering="crispEdges"/>
<path d="M547 692.8 H560.5" stroke="#f8f000" stroke-width="1.8" shape-rendering="crispEdges"/>
<path d="M441.3 778 V702 H452.3 V778" fill="none" stroke="#94b4ea" stroke-width="1.6"/>
<path d="M441 720.5 H452.5" stroke="#94b4ea" stroke-width="1.6" shape-rendering="crispEdges"/>
<path d="M441 738.5 H452.5" stroke="#94b4ea" stroke-width="1.6" shape-rendering="crispEdges"/>
<path d="M441 758 H452.5" stroke="#94b4ea" stroke-width="1.6" shape-rendering="crispEdges"/>
<path d="M441 773.5 H452.5" stroke="#94b4ea" stroke-width="1.6" shape-rendering="crispEdges"/>
<path d="M450 778 V794" stroke="#6a9ae0" stroke-width="1.8" shape-rendering="crispEdges"/>
<rect x="443.5" y="732" width="7" height="6" fill="#e090d8"/><rect x="443" y="753" width="8" height="12" fill="#e090d8"/><rect x="446" y="714" width="4" height="6" fill="#b08e18"/><rect x="444" y="768" width="6" height="4" fill="#b08e18"/>
<rect x="436" y="700" width="1.4" height="36" fill="#b070e0"/>
<rect x="258.5" y="691.4" width="51.3" height="87.4" fill="#58e058"/>
<rect x="273" y="692" width="1" height="86" fill="#f8f810"/><rect x="281" y="692" width="0.9" height="86" fill="#b08e18"/><rect x="298" y="692" width="0.9" height="86" fill="#b08e18"/>
<rect x="262.3" y="728" width="44" height="25" fill="#720a8e"/>
<rect x="274" y="730.5" width="9.5" height="9.5" fill="#58e058"/><rect x="285" y="730.5" width="9.5" height="9.5" fill="#58e058"/><rect x="274" y="741.5" width="9.5" height="9.5" fill="#58e058"/><rect x="285" y="741.5" width="9.5" height="9.5" fill="#58e058"/>
<rect x="264.5" y="730" width="1" height="21" fill="#58e058"/>
<rect x="267" y="730" width="1" height="21" fill="#58e058"/>
<rect x="269.5" y="730" width="1" height="21" fill="#58e058"/>
<rect x="297" y="730" width="1" height="21" fill="#58e058"/>
<rect x="299.5" y="730" width="1" height="21" fill="#58e058"/>
<rect x="302" y="730" width="1" height="21" fill="#58e058"/>
<rect x="304.3" y="730" width="1" height="21" fill="#58e058"/>
<path d="M295.5 758 l2 3 l-1.5 4 M298.5 758 l-2 3" stroke="#1a1a90" stroke-width="1.2" fill="none"/>
<rect x="254" y="703" width="1.4" height="84" fill="#f8f810"/><rect x="250" y="688" width="1.2" height="98" fill="#e0dca0"/>
<rect x="232.6" y="691.4" width="21" height="87.4" fill="none" stroke="#e060c4" stroke-width="1"/>
<path d="M234.5 692 V778" stroke="#60c0e8" stroke-width="1" shape-rendering="crispEdges"/>
<path d="M249 690 V778" stroke="#60c0e8" stroke-width="1.3" shape-rendering="crispEdges"/>
<path d="M251.5 692 V778" stroke="#60c0e8" stroke-width="1" shape-rendering="crispEdges"/>
<path d="M241 706 V778" stroke="#d02070" stroke-width="1.2" shape-rendering="crispEdges"/>
<path d="M244 696 V778" stroke="#30a030" stroke-width="1" shape-rendering="crispEdges"/>
<path d="M243 695.5 H258" stroke="#30c030" stroke-width="1.6" shape-rendering="crispEdges"/>
<path d="M232.5 717 H252.5" stroke="#e8e0b0" stroke-width="1.6" shape-rendering="crispEdges"/>
<path d="M232.5 730 H252.5" stroke="#e8e0b0" stroke-width="1.6" shape-rendering="crispEdges"/>
<path d="M232.5 752 H252.5" stroke="#e8e0b0" stroke-width="1.6" shape-rendering="crispEdges"/>
<path d="M238.5 729 l3.5 -6.5 l4 6.5 z" fill="#e090d8"/><path d="M239 751 l1.5 -7 q2.5 -2 4.5 0 l0.5 7 z" fill="#e090d8"/><circle cx="241.5" cy="713.5" r="2.6" fill="#b08e18"/>
<path d="M233 765.8 H310 Q312.5 765.8 312.5 768 V772.3 H233 Z M258 765.8 V772.3 M284.5 765.8 V772.3" fill="none" stroke="#a0bae8" stroke-width="1.2"/>
<path d="M233 771.6 H312" stroke="#a0bae8" stroke-width="1.6" shape-rendering="crispEdges"/>
<path d="M281 776.5 H546" stroke="#1818e8" stroke-width="1.6" stroke-dasharray="6 3 2 4 9 3"/>
<path d="M256 779.5 H452" stroke="#70a0e0" stroke-width="1" shape-rendering="crispEdges"/>
<path d="M254 780 v6 M272 780 v5 M325 780 v4 M340 780 v4 h5 v4 h7 v-8 M425 780 v6 h6 v-6 M437 780 v6 h9 v-6 M453 780 v6 h8 v-6 M404 780 v5 h8 M535 779 h9 v2" fill="none" stroke="#f8f810" stroke-width="1.2"/>
<path d="M415 779 V802" stroke="#b08e18" stroke-width="1.8" shape-rendering="crispEdges"/>
<rect x="241.2" y="674.4" width="317.8" height="121" fill="none" stroke="#e060c4" stroke-width="1"/>
<path d="M253.5 674.4 V795.4" stroke="#e060c4" stroke-width="1" shape-rendering="crispEdges"/>
<path d="M265.7 674.4 V795.4" stroke="#e060c4" stroke-width="1" shape-rendering="crispEdges"/>
<path d="M277.9 674.4 V795.4" stroke="#e060c4" stroke-width="1" shape-rendering="crispEdges"/>
<path d="M290.1 674.4 V795.4" stroke="#e060c4" stroke-width="1" shape-rendering="crispEdges"/>
<path d="M302.3 674.4 V795.4" stroke="#e060c4" stroke-width="1" shape-rendering="crispEdges"/>
<path d="M314.5 674.4 V795.4" stroke="#e060c4" stroke-width="1" shape-rendering="crispEdges"/>
<path d="M326.8 674.4 V795.4" stroke="#e060c4" stroke-width="1" shape-rendering="crispEdges"/>
<path d="M339.0 674.4 V795.4" stroke="#e060c4" stroke-width="1" shape-rendering="crispEdges"/>
<path d="M351.2 674.4 V795.4" stroke="#e060c4" stroke-width="1" shape-rendering="crispEdges"/>
<path d="M363.4 674.4 V795.4" stroke="#e060c4" stroke-width="1" shape-rendering="crispEdges"/>
<path d="M375.6 674.4 V795.4" stroke="#e060c4" stroke-width="1" shape-rendering="crispEdges"/>
<path d="M387.8 674.4 V795.4" stroke="#e060c4" stroke-width="1" shape-rendering="crispEdges"/>
<path d="M400.0 674.4 V795.4" stroke="#e060c4" stroke-width="1" shape-rendering="crispEdges"/>
<path d="M412.2 674.4 V795.4" stroke="#e060c4" stroke-width="1" shape-rendering="crispEdges"/>
<path d="M424.4 674.4 V795.4" stroke="#e060c4" stroke-width="1" shape-rendering="crispEdges"/>
<path d="M436.6 674.4 V795.4" stroke="#e060c4" stroke-width="1" shape-rendering="crispEdges"/>
<path d="M448.9 674.4 V795.4" stroke="#e060c4" stroke-width="1" shape-rendering="crispEdges"/>
<path d="M461.1 674.4 V795.4" stroke="#e060c4" stroke-width="1" shape-rendering="crispEdges"/>
<path d="M473.3 674.4 V795.4" stroke="#e060c4" stroke-width="1" shape-rendering="crispEdges"/>
<path d="M485.5 674.4 V795.4" stroke="#e060c4" stroke-width="1" shape-rendering="crispEdges"/>
<path d="M497.7 674.4 V795.4" stroke="#e060c4" stroke-width="1" shape-rendering="crispEdges"/>
<path d="M509.9 674.4 V795.4" stroke="#e060c4" stroke-width="1" shape-rendering="crispEdges"/>
<path d="M522.1 674.4 V795.4" stroke="#e060c4" stroke-width="1" shape-rendering="crispEdges"/>
<path d="M534.3 674.4 V795.4" stroke="#e060c4" stroke-width="1" shape-rendering="crispEdges"/>
<path d="M546.5 674.4 V795.4" stroke="#e060c4" stroke-width="1" shape-rendering="crispEdges"/>
<path d="M249.6 690 V684.5 H549 Q550.2 684.5 550.2 686 V690" fill="none" stroke="#e060c4" stroke-width="1"/>
<path d="M249.6 688.8 H550" stroke="#b040c0" stroke-width="1" shape-rendering="crispEdges"/>
<path d="M547 732.4 H583.4" stroke="#4aa0e8" stroke-width="1.1" shape-rendering="crispEdges"/>
<rect x="583.1" y="690.2" width="4.6" height="88.3" rx="2" fill="#b8e696"/>
<rect x="590" y="690.2" width="4" height="88.3" rx="2" fill="#b8e696"/>
<rect x="596" y="690.2" width="5.1" height="88.3" rx="2" fill="#b8e696"/>
<path d="M585 747 l2 -1.5 M590 746 h2 M594 746.5 h2 M599 746.5 h3 M588 728.5 h3 M588 737.5 h3" stroke="#4a80c8" stroke-width="1"/>
<rect x="603.7" y="748" width="2.8" height="2.8" fill="none" stroke="#9a9a9a" stroke-width="0.8"/>
<rect x="603.7" y="754" width="2.8" height="2.8" fill="none" stroke="#9a9a9a" stroke-width="0.8"/>
<rect x="603.7" y="761" width="2.8" height="2.8" fill="none" stroke="#9a9a9a" stroke-width="0.8"/>
<rect x="603.7" y="767" width="2.8" height="2.8" fill="none" stroke="#9a9a9a" stroke-width="0.8"/>
<rect x="603.7" y="773.5" width="2.8" height="2.8" fill="none" stroke="#9a9a9a" stroke-width="0.8"/>
<circle cx="571" cy="759.5" r="3.6" fill="#e08050"/><path d="M569 755 l2 -3.5 l3.5 -0.5 l3 2 l1.5 2.5 l-3 1 l-1 3.5 l-2.5 -2 z" fill="#2ea050"/>
<ellipse cx="801.4" cy="612.8" rx="38" ry="3" fill="none" stroke="#8c8c8c" stroke-width="1.6" opacity="0.8"/>
<rect x="787" y="579.7" width="31" height="31" fill="#7e7e7e" opacity="0.92"/><rect x="787" y="579.7" width="31" height="31" fill="none" stroke="#8c8c8c" stroke-width="0.8"/>
<text x="795" y="598.5" font-family="Liberation Sans" font-size="7.5" fill="#6a6a6a">LEFT</text>
<path d="M70.8 903.8 V877" stroke="#2020e0" stroke-width="1.2"/><path d="M70.8 903.8 H50" stroke="#20a020" stroke-width="1.2"/>
<g font-family="Liberation Sans" font-size="11"><text x="69" y="878.5" fill="#2020e0">z</text><text x="46" y="904" fill="#20a020">y</text><text x="71.5" y="906" fill="#d01010">x</text></g></svg><span class="t" style="left:49.0px;top:546.0px;font-size:11px;line-height:15px;color:#e4e4e4;transform:scaleX(1.086);">[+] [Left ] [Standard ] [Wireframe ]</span>
<svg class="a" style="left:865px;top:541px" width="812" height="388" viewBox="865 541 812 388"><defs><linearGradient id="wood1" x1="0" x2="1" y1="0" y2="0"><stop offset="0" stop-color="#85766b"/><stop offset="0.2" stop-color="#93847a"/><stop offset="0.45" stop-color="#8a7b70"/><stop offset="0.7" stop-color="#96877c"/><stop offset="1" stop-color="#85756a"/></linearGradient><linearGradient id="steel" x1="0" x2="0" y1="0" y2="1"><stop offset="0" stop-color="#b8b8b8"/><stop offset="0.3" stop-color="#c4c4c4"/><stop offset="0.6" stop-color="#cbcbcb"/><stop offset="1" stop-color="#d0d0d0"/></linearGradient><linearGradient id="steel2" x1="0" x2="0" y1="0" y2="1"><stop offset="0" stop-color="#b4b4b4"/><stop offset="0.5" stop-color="#c3c3c3"/><stop offset="1" stop-color="#c6c6c6"/></linearGradient><linearGradient id="woodw" x1="0" x2="1" y1="0" y2="1"><stop offset="0" stop-color="#86654f"/><stop offset="0.5" stop-color="#8f6e5b"/><stop offset="1" stop-color="#96766a"/></linearGradient><clipPath id="imgclip"><rect x="1077" y="542" width="387.5" height="386.5"/></clipPath></defs>
<g clip-path="url(#imgclip)">
<rect x="1077" y="542" width="388" height="50" fill="#afafaf"/>
<path d="M1077 542 H1105 L1169 617 H1077 Z" fill="#a9a9a9"/>
<path d="M1104.5 542 H1152.5 L1168.8 568.7 V617 H1158 Z" fill="#8b8781"/>
<path d="M1104.5 542 L1158 617 H1154.5 L1100 553 Z" fill="#aaa6a0"/>
<path d="M1119 542 V560 M1149 542 V598" stroke="#7d7973" stroke-width="0.8"/>
<path d="M1078.5 542 L1154.5 616.5" stroke="#fffff0" stroke-width="2.2"/>
<path d="M1112 566 L1140 596" stroke="#d8c890" stroke-width="3" stroke-dasharray="0.8 2.2" opacity="0.7"/>
<path d="M1183.2 557.6 H1392.8 L1407.2 542 H1174.6 Z" fill="#b5b5b5"/>
<path d="M1174.6 542 L1183.2 557.6 H1392.8 L1407.2 542" fill="none" stroke="#fffff4" stroke-width="1.8"/>
<rect x="1168.8" y="568.7" width="211.6" height="330" fill="#e3ddd3"/>
<rect x="1141.4" y="617" width="28" height="100" fill="#e3ddd3"/>
<rect x="1092.6" y="715.5" width="77" height="69" fill="#e6e0d7"/>
<path d="M1169.2 568.7 V884 M1203.4 568.7 V692 M1291 568.7 V662" stroke="#bdb5aa" stroke-width="0.9"/>
<path d="M1169 617 H1380.4" stroke="#bdb5aa" stroke-width="0.9"/>
<path d="M1141.4 716.3 H1169" stroke="#d8c0c0" stroke-width="0.6"/>
<rect x="1077" y="602.3" width="48.7" height="113.2" fill="url(#wood1)"/>
<path d="M1125.7 602.3 L1141.4 617 V716.5 H1125.7 Z" fill="#655b55"/>
<path d="M1077 714.5 L1096 716.8" stroke="#f4f0e8" stroke-width="1.6"/>
<rect x="1077" y="716.5" width="15.6" height="70" fill="#060606"/>
<rect x="1078.5" y="742" width="6" height="5" fill="#5a5a5a"/>
<path d="M1077 785 H1169.2 V790 L1077 843 Z" fill="#070707"/>
<path d="M1078 792 H1146 L1098 812 H1078 Z" fill="#3a3a3a"/><path d="M1078 792 H1146" stroke="#555" stroke-width="1"/>
<rect x="1079" y="790" width="5" height="8" fill="#4a4a4a"/>
<path d="M1077 843 L1169.2 790.5 V884 L1139 929 H1077 Z" fill="#837e77"/>
<path d="M1077 843 L1169.2 790.5" stroke="#c8c2b8" stroke-width="1.4"/>
<path d="M1112.2 823.5 V929 M1136.2 810 V929 M1154.5 799.5 V905" stroke="#aaa49b" stroke-width="0.9"/>
<path d="M1077 929 H1465 V873 H1384 V895 H1204 V892 H1163 L1139 929 Z" fill="#9b958d"/>
<path d="M1169.2 883.6 H1204.4 L1205.3 892.3 H1163 Z" fill="#3c3c3c"/>
<rect x="1204.4" y="691.5" width="87" height="206" fill="url(#steel2)"/>
<rect x="1204.4" y="691.5" width="87" height="2.5" fill="#8e8e8e"/><rect x="1204.4" y="691.5" width="1.8" height="206" fill="#8e8e8e"/>
<path d="M1206 804.5 H1291" stroke="#d8d8d8" stroke-width="1"/><path d="M1206 816 H1291" stroke="#8a8a8a" stroke-width="1.2"/><path d="M1206 826.5 H1291" stroke="#a8a8a8" stroke-width="1"/>
<rect x="1272" y="714.5" width="18" height="2.6" fill="#e4e4e4"/>
<path d="M1208 897.4 H1353" stroke="#f4f4f4" stroke-width="1.3"/>
<rect x="1291" y="662.4" width="93.2" height="233" fill="url(#steel)"/>
<rect x="1290" y="662.4" width="3" height="233" fill="#9a9a9a"/><rect x="1291" y="662" width="93.2" height="1.6" fill="#9a9a9a"/>
<path d="M1338.5 663 V783" stroke="#8c8c8c" stroke-width="1.4"/>
<rect x="1333.2" y="673.3" width="2.6" height="98" fill="#dcdcdc"/><rect x="1341.4" y="673.3" width="2.6" height="98" fill="#dcdcdc"/>
<path d="M1293 783 H1384 M1293 818 H1384" stroke="#9a9a9a" stroke-width="1.3"/>
<rect x="1300.7" y="790.5" width="76.3" height="3" fill="#e8e8e8"/><rect x="1300.7" y="825" width="76.3" height="3" fill="#e8e8e8"/><rect x="1326" y="793.5" width="24" height="1" fill="#8a8a8a"/>
<rect x="1298.4" y="707.9" width="27.3" height="16" fill="#0c0c0c"/><path d="M1302 712 h4 m3 0 h5 m3 0 h4 M1302 719 h4 m3 0 h6 m2 0 h4" stroke="#2a6ab0" stroke-width="1.6"/>
<rect x="1297.8" y="724" width="28" height="41" fill="#e6e6e6"/><rect x="1300" y="727" width="23.5" height="34" fill="#f0f2f0"/><rect x="1308" y="726" width="8" height="20" fill="#b0b0b0"/><rect x="1311" y="726" width="3" height="17" fill="#e8e8e8"/>
<rect x="1295" y="894" width="8" height="2" fill="#222"/><rect x="1373" y="894" width="8" height="2" fill="#222"/>
<rect x="1380.4" y="589.8" width="72" height="283.5" fill="url(#woodw)"/>
<rect x="1380.4" y="589.8" width="72" height="53" fill="#7f5e48" opacity="0.55"/>
<path d="M1380.6 642.6 H1447.5 V873" fill="none" stroke="#2a2018" stroke-width="1"/>
<rect x="1447.5" y="589.8" width="5" height="210" fill="#7a5a48"/>
<rect x="1384.6" y="766" width="3.4" height="3" fill="#111"/>
<rect x="1452.6" y="589.8" width="13" height="210" fill="#dcd4cc"/>
<path d="M1447 799 H1465 V929 H1447 Z" fill="#0a0a0a"/>
<path d="M1449 808 L1465 816 V852 L1449 845 Z M1449 850 L1465 858 V894 L1449 888 Z M1449 892 L1465 900 V929 H1449 Z" fill="#807c74"/>
<path d="M1456 829 l8 3 M1456 832 l8 3 M1456 872 l8 3 M1456 875 l8 3 M1456 912 l8 3 M1456 915 l8 3" stroke="#e8e8e8" stroke-width="1.6"/>
</g>
<path d="M1077 735.4 H1465" stroke="#4aa8f4" stroke-width="1.2" shape-rendering="crispEdges"/>
<path d="M1213.6 542 V920" stroke="#4aa8f4" stroke-width="1.2" shape-rendering="crispEdges"/>
<path d="M1226.4 542 V876" stroke="#4aa8f4" stroke-width="1.2" shape-rendering="crispEdges"/>
<path d="M1241.4 542 V920" stroke="#4aa8f4" stroke-width="1.2" shape-rendering="crispEdges"/>
<path d="M1248.5 542 V876" stroke="#4aa8f4" stroke-width="1.2" shape-rendering="crispEdges"/>
<path d="M1341.4 542 V876" stroke="#4aa8f4" stroke-width="1.2" shape-rendering="crispEdges"/>
<path d="M1364 542 V920" stroke="#4aa8f4" stroke-width="1.2" shape-rendering="crispEdges"/>
<path d="M1392.5 542 V920" stroke="#4aa8f4" stroke-width="1.2" shape-rendering="crispEdges"/>
<path d="M1459.6 610 V799" stroke="#4aa8f4" stroke-width="1.2" shape-rendering="crispEdges"/>
<path d="M1161.7 895.0 L1204.4 895.0" fill="none" stroke="#4a90f0" stroke-width="1.2"  shape-rendering="crispEdges"/>
<path d="M1168.8 893.0 L1145.8 928.0" fill="none" stroke="#4a90f0" stroke-width="1.2" />
<path d="M1145.0 919.5 L1151.0 919.5" fill="none" stroke="#4a90f0" stroke-width="1.2"  shape-rendering="crispEdges"/>
<path d="M1204.0 895.0 L1206.0 890.0" fill="none" stroke="#4a90f0" stroke-width="1" />
<g clip-path="url(#imgclip)">
<g fill="none" stroke="#f8f810" stroke-width="1.25"><path d="M1221.8 541 H1232.4 L1237.4 569.2 H1216.8 Z" fill="#f8f810" stroke="none"/><path d="M1216.8 569.2 L1214.4 582.5"/><path d="M1218.2 569.2 L1216.2 582.3"/><path d="M1219.7 569.2 L1218.0 582.1"/><path d="M1221.2 569.2 L1219.8 581.9"/><path d="M1222.7 569.2 L1221.7 581.6"/><path d="M1224.1 569.2 L1223.5 581.4"/><path d="M1225.6 569.2 L1225.3 581.2"/><path d="M1227.1 569.2 L1227.1 581.0"/><path d="M1228.6 569.2 L1228.9 581.2"/><path d="M1230.1 569.2 L1230.7 581.4"/><path d="M1231.5 569.2 L1232.5 581.6"/><path d="M1233.0 569.2 L1234.4 581.9"/><path d="M1234.5 569.2 L1236.2 582.1"/><path d="M1236.0 569.2 L1238.0 582.3"/><path d="M1237.4 569.2 L1239.8 582.5"/><path d="M1214.4 581.0 Q1227.1 585.0 1239.8 581.0" stroke-width="1.6"/><path d="M1216.8 573.2 H1237.4" stroke-dasharray="2 1.2"/></g>
<g fill="none" stroke="#f8f810" stroke-width="1.25"><path d="M1242.0 541 H1253.2 L1259.9 569.2 H1240.8 Z" fill="#f8f810" stroke="none"/><path d="M1240.8 569.2 L1240.2 582.5"/><path d="M1242.1 569.2 L1241.8 582.3"/><path d="M1243.5 569.2 L1243.5 582.1"/><path d="M1244.9 569.2 L1245.1 581.9"/><path d="M1246.2 569.2 L1246.7 581.6"/><path d="M1247.6 569.2 L1248.3 581.4"/><path d="M1249.0 569.2 L1250.0 581.2"/><path d="M1250.3 569.2 L1251.6 581.0"/><path d="M1251.7 569.2 L1253.2 581.2"/><path d="M1253.0 569.2 L1254.9 581.4"/><path d="M1254.4 569.2 L1256.5 581.6"/><path d="M1255.8 569.2 L1258.1 581.9"/><path d="M1257.1 569.2 L1259.7 582.1"/><path d="M1258.5 569.2 L1261.4 582.3"/><path d="M1259.9 569.2 L1263.0 582.5"/><path d="M1240.2 581.0 Q1251.6 585.0 1263.0 581.0" stroke-width="1.6"/><path d="M1240.8 573.2 H1259.9" stroke-dasharray="2 1.2"/></g>
<g fill="none" stroke="#f8f810" stroke-width="1.25"><path d="M1335.2 541 H1345.8 L1349.5 569.2 H1328.8 Z" fill="#f8f810" stroke="none"/><path d="M1328.8 569.2 L1325.8 582.5"/><path d="M1330.3 569.2 L1327.6 582.3"/><path d="M1331.8 569.2 L1329.4 582.1"/><path d="M1333.2 569.2 L1331.2 581.9"/><path d="M1334.7 569.2 L1333.1 581.6"/><path d="M1336.2 569.2 L1334.9 581.4"/><path d="M1337.7 569.2 L1336.7 581.2"/><path d="M1339.1 569.2 L1338.5 581.0"/><path d="M1340.6 569.2 L1340.3 581.2"/><path d="M1342.1 569.2 L1342.1 581.4"/><path d="M1343.6 569.2 L1343.9 581.6"/><path d="M1345.0 569.2 L1345.8 581.9"/><path d="M1346.5 569.2 L1347.6 582.1"/><path d="M1348.0 569.2 L1349.4 582.3"/><path d="M1349.5 569.2 L1351.2 582.5"/><path d="M1325.8 581.0 Q1338.5 585.0 1351.2 581.0" stroke-width="1.6"/><path d="M1328.8 573.2 H1349.5" stroke-dasharray="2 1.2"/></g>
<g fill="none" stroke="#f8f810" stroke-width="1.25"><path d="M1358.2 541 H1368.8 L1374.5 569.2 H1353.8 Z" fill="#f8f810" stroke="none"/><path d="M1353.8 569.2 L1351.8 582.5"/><path d="M1355.3 569.2 L1353.6 582.3"/><path d="M1356.8 569.2 L1355.4 582.1"/><path d="M1358.3 569.2 L1357.2 581.9"/><path d="M1359.8 569.2 L1359.1 581.6"/><path d="M1361.2 569.2 L1360.9 581.4"/><path d="M1362.7 569.2 L1362.7 581.2"/><path d="M1364.2 569.2 L1364.5 581.0"/><path d="M1365.7 569.2 L1366.3 581.2"/><path d="M1367.1 569.2 L1368.1 581.4"/><path d="M1368.6 569.2 L1369.9 581.6"/><path d="M1370.1 569.2 L1371.8 581.9"/><path d="M1371.6 569.2 L1373.6 582.1"/><path d="M1373.0 569.2 L1375.4 582.3"/><path d="M1374.5 569.2 L1377.2 582.5"/><path d="M1351.8 581.0 Q1364.5 585.0 1377.2 581.0" stroke-width="1.6"/><path d="M1353.8 573.2 H1374.5" stroke-dasharray="2 1.2"/></g>
<g fill="none" stroke="#f8f810" stroke-width="1.25"><path d="M1455.5 575.5 H1462.5 L1468.6 600.0 H1449.4 Z" fill="#f8f810" stroke="none"/><path d="M1449.4 600.0 L1446.5 611.5"/><path d="M1450.8 600.0 L1448.3 611.3"/><path d="M1452.1 600.0 L1450.1 611.1"/><path d="M1453.5 600.0 L1451.9 610.9"/><path d="M1454.9 600.0 L1453.6 610.6"/><path d="M1456.3 600.0 L1455.4 610.4"/><path d="M1457.6 600.0 L1457.2 610.2"/><path d="M1459.0 600.0 L1459.0 610.0"/><path d="M1460.4 600.0 L1460.8 610.2"/><path d="M1461.7 600.0 L1462.6 610.4"/><path d="M1463.1 600.0 L1464.4 610.6"/><path d="M1464.5 600.0 L1466.1 610.9"/><path d="M1465.9 600.0 L1467.9 611.1"/><path d="M1467.2 600.0 L1469.7 611.3"/><path d="M1468.6 600.0 L1471.5 611.5"/><path d="M1446.5 610.0 Q1459 614.0 1471.5 610.0" stroke-width="1.6"/><path d="M1449.4 604.0 H1468.6" stroke-dasharray="2 1.2"/></g>
</g>
<rect x="1222.6" y="871.7" width="8.0" height="9.5" fill="none" stroke="#f8f810" stroke-width="1.2"/><path d="M1222.6 871.7 L1224.1 870.2 H1232.1 V879.7 L1230.6 881.2" fill="none" stroke="#f8f810" stroke-width="1"/>
<rect x="1243.3" y="871.7" width="8.0" height="9.5" fill="none" stroke="#f8f810" stroke-width="1.2"/><path d="M1243.3 871.7 L1244.8 870.2 H1252.8 V879.7 L1251.3 881.2" fill="none" stroke="#f8f810" stroke-width="1"/>
<rect x="1336.2" y="871.7" width="8.0" height="9.5" fill="none" stroke="#f8f810" stroke-width="1.2"/><path d="M1336.2 871.7 L1337.7 870.2 H1345.7 V879.7 L1344.2 881.2" fill="none" stroke="#f8f810" stroke-width="1"/>
<rect x="1357.3" y="871.7" width="8.0" height="9.5" fill="none" stroke="#f8f810" stroke-width="1.2"/><path d="M1357.3 871.7 L1358.8 870.2 H1366.8 V879.7 L1365.3 881.2" fill="none" stroke="#f8f810" stroke-width="1"/>
<rect x="1208.6" y="916.2" width="8.0" height="9.5" fill="none" stroke="#f8f810" stroke-width="1.2"/><path d="M1208.6 916.2 L1210.1 914.7 H1218.1 V924.2 L1216.6 925.7" fill="none" stroke="#f8f810" stroke-width="1"/>
<rect x="1237.4" y="916.2" width="8.0" height="9.5" fill="none" stroke="#f8f810" stroke-width="1.2"/><path d="M1237.4 916.2 L1238.9 914.7 H1246.9 V924.2 L1245.4 925.7" fill="none" stroke="#f8f810" stroke-width="1"/>
<rect x="1359.3" y="916.2" width="8.0" height="9.5" fill="none" stroke="#f8f810" stroke-width="1.2"/><path d="M1359.3 916.2 L1360.8 914.7 H1368.8 V924.2 L1367.3 925.7" fill="none" stroke="#f8f810" stroke-width="1"/>
<rect x="1387.5" y="916.2" width="8.0" height="9.5" fill="none" stroke="#f8f810" stroke-width="1.2"/><path d="M1387.5 916.2 L1389.0 914.7 H1397.0 V924.2 L1395.5 925.7" fill="none" stroke="#f8f810" stroke-width="1"/>
<rect x="1076.8" y="541.8" width="388" height="387" fill="none" stroke="#c4c408" stroke-width="1.2"/>
<path d="M890.2 902 V875" stroke="#2020e0" stroke-width="1.2"/><path d="M890.2 902 H868" stroke="#c01010" stroke-width="1.2"/>
<g font-family="Liberation Sans" font-size="11"><text x="889" y="877" fill="#2020e0">z</text><text x="866" y="905" fill="#c01010">x</text><text x="890" y="905" fill="#20a020">y</text></g></svg><span class="t" style="left:868.0px;top:546.0px;font-size:11px;line-height:15px;color:#e4e4e4;transform:scaleX(1.032);">[+] [Camera012 ] [User Defined ] [Default Shading ]</span>

<svg class="a" style="left:1684px;top:143px" width="236" height="8"><path d="M1 2.5 H234" stroke="#b0b0b0" stroke-width="1" stroke-dasharray="1 1"/><path d="M2 4.5 H234" stroke="#b0b0b0" stroke-width="1" stroke-dasharray="1 1"/></svg>
<div class="a" style="left:1684px;top:152px;width:30px;height:27px;background:#444;border-radius:5px 5px 0 0;border:1px solid #5a5a5a;border-bottom:none;box-sizing:border-box;"></div>
<div class="a" style="left:1715.5px;top:152px;width:30.5px;height:26px;background:#3a3a3a;border-radius:5px 5px 0 0;"></div>
<div class="a" style="left:1747.5px;top:152px;width:30.5px;height:26px;background:#3a3a3a;border-radius:5px 5px 0 0;"></div>
<div class="a" style="left:1779.5px;top:152px;width:30.5px;height:26px;background:#3a3a3a;border-radius:5px 5px 0 0;"></div>
<div class="a" style="left:1811.5px;top:152px;width:30.5px;height:26px;background:#3a3a3a;border-radius:5px 5px 0 0;"></div>
<div class="a" style="left:1843.5px;top:152px;width:30.5px;height:26px;background:#3a3a3a;border-radius:5px 5px 0 0;"></div>
<div class="a" style="left:1684px;top:178px;width:236px;height:1px;background:#5a5a5a;left:1714px;width:206px;"></div>
<svg class="a" style="left:0;top:0" width="1920" height="260" viewBox="0 0 1920 260"><path d="M1698.7 158 V174 M1690.7 166 H1706.7" stroke="#f2f2f2" stroke-width="2.2"/><rect x="1724" y="159" width="14" height="14" fill="none" stroke="#41b8bf" stroke-width="1"/><g fill="#3a3a3a" stroke="#41b8bf" stroke-width="1"><rect x="1722.5" y="157.5" width="3" height="3"/><rect x="1736.5" y="157.5" width="3" height="3"/><rect x="1722.5" y="171.5" width="3" height="3"/><rect x="1736.5" y="171.5" width="3" height="3"/></g><path d="M1727 171.5 Q1727.5 162.5 1736.5 162" fill="none" stroke="#9a9a9a" stroke-width="2"/><rect x="1757" y="158" width="12" height="5" fill="#9a9a9a"/><path d="M1763 163 V167 M1757.5 171 V167 H1768.5 V171" fill="none" stroke="#41b8bf" stroke-width="1.3"/><rect x="1755.5" y="170.5" width="4" height="3.5" fill="#41b8bf"/><rect x="1766.5" y="170.5" width="4" height="3.5" fill="#41b8bf"/><circle cx="1797" cy="165.5" r="8" fill="#9a9a9a"/><path d="M1791 158.5 A9 9 0 0 0 1791 172.5" fill="none" stroke="#41b8bf" stroke-width="1"/><path d="M1788.5 159.5 A9 9 0 0 0 1788.5 171.5" fill="none" stroke="#41b8bf" stroke-width="0.8"/><rect x="1819" y="159" width="16" height="9.5" fill="#9a9a9a"/><rect x="1825.5" y="168.5" width="3" height="3" fill="#9a9a9a"/><rect x="1822.5" y="171.5" width="9" height="1.5" fill="#9a9a9a"/><path d="M1853 160 L1865 172.5" stroke="#9a9a9a" stroke-width="3.2" stroke-linecap="round"/><circle cx="1853.5" cy="160.5" r="3.2" fill="#9a9a9a"/><rect x="1850" y="156" width="3" height="4" fill="#3a3a3a" transform="rotate(-45 1851.5 158)"/><circle cx="1865" cy="172.2" r="0.8" fill="#3a3a3a"/><rect x="1689" y="184" width="20.5" height="20.5" rx="3" fill="#5b8bd8"/><circle cx="1699.3" cy="194.3" r="7.6" fill="#dcdcdc" stroke="#333" stroke-width="0.8"/><circle cx="1720" cy="192" r="5.3" fill="#d2d2d2" stroke="#3a3a3a" stroke-width="0.8"/><rect x="1720" y="192" width="8.5" height="8.5" fill="#d2d2d2" stroke="#3a3a3a" stroke-width="0.9"/><path d="M1720 192 H1725.3 A5.3 5.3 0 0 1 1720 197.3 Z" fill="#3a3a3a" opacity="0.0"/><path d="M1720.5 197.3 A5.3 5.3 0 0 0 1725.3 192.5" fill="none" stroke="#3a3a3a" stroke-width="0.9"/><path d="M1737.5 192 A5.2 5.2 0 1 1 1748 192 Q1748 195 1745.2 197 V198 H1740.3 V197 Q1737.5 195 1737.5 192 Z" fill="#d2d2d2"/><rect x="1740.3" y="199" width="4.9" height="1.2" fill="#d2d2d2"/><rect x="1741" y="201" width="3.5" height="1.1" fill="#d2d2d2"/><rect x="1758" y="189" width="10.5" height="10.5" rx="1.5" fill="#d2d2d2"/><path d="M1769 193 L1772.5 190 V198.5 L1769 195.5 Z" fill="#d2d2d2"/><path d="M1780.5 187 V200.5 H1794 Z M1783 193.5 V198 H1787.5 Z" fill="#d2d2d2" fill-rule="evenodd"/><g fill="none" stroke="#d2d2d2" stroke-width="1.5"><path d="M1802 190.5 Q1805.5 187.5 1809 190.5 T1816 190"/><path d="M1802 194.7 Q1805.5 191.7 1809 194.7 T1816 194.2"/><path d="M1802 198.9 Q1805.5 195.9 1809 198.9 T1816 198.4"/></g><circle cx="1827.5" cy="190" r="2.6" fill="none" stroke="#d2d2d2" stroke-width="1.8" stroke-dasharray="1.4 0.9"/><circle cx="1834" cy="197" r="3.4" fill="none" stroke="#d2d2d2" stroke-width="2" stroke-dasharray="1.7 1"/></svg>
<div class="a" style="left:1688px;top:211px;width:227px;height:20px;background:#646464;"></div>
<span class="t" style="left:1692.0px;top:213.5px;font-size:12px;line-height:16px;color:#f0f0f0;transform:scaleX(0.884);">Standard Primitives</span>
<svg class="a" style="left:1900px;top:217px" width="10" height="8"><path d="M1 1 h6.5 l-3.25 4.5 z" fill="#eee"/></svg>
<div class="a" style="left:1910px;top:236px;width:6px;height:695px;background:#3c3c3c;border-radius:3px;"></div>
<div class="a" style="left:1688px;top:236px;width:219px;height:168px;background:#525252;border-radius:2px;border:1px solid #3e3e3e;box-sizing:border-box;"></div>
<svg class="a" style="left:1692px;top:241px" width="12" height="10"><path d="M2 2 h6 l-3 4.5 z" fill="#c8c8c8"/></svg>
<span class="t" style="left:1707.0px;top:239.2px;font-size:11.5px;line-height:15.5px;color:#ffffff;font-weight:bold;transform:scaleX(1.047);">Object Type</span>
<svg class="a" style="left:1892px;top:242px" width="8" height="8"><path d="M1.5 0 V7 M3.5 0 V7 M5.5 0 V7" stroke="#999" stroke-width="1" stroke-dasharray="1 1"/></svg>
<div class="a" style="left:1750px;top:261.5px;width:10.5px;height:10.5px;background:#5a5a5a;border:1px solid #4a4a4a;box-sizing:border-box;"></div>
<span class="t" style="left:1763.0px;top:259.5px;font-size:11px;line-height:15px;color:#8a8a8a;transform:scaleX(0.945);">AutoGrid</span>
<div class="a" style="left:1724.7px;top:277px;width:67.5px;height:16.5px;background:#646464;border-radius:3px;border:1px solid #484848;box-sizing:border-box;"></div>
<span class="t" style="left:1749.4px;top:277.9px;font-size:11.5px;line-height:15.5px;color:#f0f0f0;transform:scaleX(0.908);">Box</span>
<div class="a" style="left:1802.6px;top:277px;width:67.5px;height:16.5px;background:#646464;border-radius:3px;border:1px solid #484848;box-sizing:border-box;"></div>
<span class="t" style="left:1823.8px;top:277.9px;font-size:11.5px;line-height:15.5px;color:#f0f0f0;transform:scaleX(0.909);">Cone</span>
<div class="a" style="left:1724.7px;top:298px;width:67.5px;height:16.5px;background:#646464;border-radius:3px;border:1px solid #484848;box-sizing:border-box;"></div>
<span class="t" style="left:1741.4px;top:298.9px;font-size:11.5px;line-height:15.5px;color:#f0f0f0;transform:scaleX(0.917);">Sphere</span>
<div class="a" style="left:1802.6px;top:298px;width:67.5px;height:16.5px;background:#646464;border-radius:3px;border:1px solid #484848;box-sizing:border-box;"></div>
<span class="t" style="left:1809.8px;top:298.9px;font-size:11.5px;line-height:15.5px;color:#f0f0f0;transform:scaleX(0.901);">GeoSphere</span>
<div class="a" style="left:1724.7px;top:319px;width:67.5px;height:16.5px;background:#646464;border-radius:3px;border:1px solid #484848;box-sizing:border-box;"></div>
<span class="t" style="left:1738.9px;top:319.9px;font-size:11.5px;line-height:15.5px;color:#f0f0f0;transform:scaleX(0.925);">Cylinder</span>
<div class="a" style="left:1802.6px;top:319px;width:67.5px;height:16.5px;background:#646464;border-radius:3px;border:1px solid #484848;box-sizing:border-box;"></div>
<span class="t" style="left:1824.3px;top:319.9px;font-size:11.5px;line-height:15.5px;color:#f0f0f0;transform:scaleX(0.931);">Tube</span>
<div class="a" style="left:1724.7px;top:340px;width:67.5px;height:16.5px;background:#646464;border-radius:3px;border:1px solid #484848;box-sizing:border-box;"></div>
<span class="t" style="left:1744.9px;top:340.9px;font-size:11.5px;line-height:15.5px;color:#f0f0f0;transform:scaleX(0.960);">Torus</span>
<div class="a" style="left:1802.6px;top:340px;width:67.5px;height:16.5px;background:#646464;border-radius:3px;border:1px solid #484848;box-sizing:border-box;"></div>
<span class="t" style="left:1817.3px;top:340.9px;font-size:11.5px;line-height:15.5px;color:#f0f0f0;transform:scaleX(0.901);">Pyramid</span>
<div class="a" style="left:1724.7px;top:361px;width:67.5px;height:16.5px;background:#646464;border-radius:3px;border:1px solid #484848;box-sizing:border-box;"></div>
<span class="t" style="left:1741.4px;top:361.9px;font-size:11.5px;line-height:15.5px;color:#f0f0f0;transform:scaleX(0.985);">Teapot</span>
<div class="a" style="left:1802.6px;top:361px;width:67.5px;height:16.5px;background:#646464;border-radius:3px;border:1px solid #484848;box-sizing:border-box;"></div>
<span class="t" style="left:1823.3px;top:361.9px;font-size:11.5px;line-height:15.5px;color:#f0f0f0;transform:scaleX(0.884);">Plane</span>
<div class="a" style="left:1724.7px;top:382px;width:67.5px;height:16.5px;background:#646464;border-radius:3px;border:1px solid #484848;box-sizing:border-box;"></div>
<span class="t" style="left:1737.9px;top:382.9px;font-size:11.5px;line-height:15.5px;color:#f0f0f0;transform:scaleX(0.943);">TextPlus</span>
<div class="a" style="left:1688px;top:408px;width:219px;height:55.5px;background:#525252;border-radius:2px;border:1px solid #3e3e3e;box-sizing:border-box;"></div>
<svg class="a" style="left:1692px;top:412px" width="12" height="10"><path d="M2 2 h6 l-3 4.5 z" fill="#c8c8c8"/></svg>
<span class="t" style="left:1707.0px;top:410.2px;font-size:11.5px;line-height:15.5px;color:#ffffff;font-weight:bold;">Name and Color</span>
<svg class="a" style="left:1892px;top:413px" width="8" height="8"><path d="M1.5 0 V7 M3.5 0 V7 M5.5 0 V7" stroke="#999" stroke-width="1" stroke-dasharray="1 1"/></svg>
<div class="a" style="left:1722.5px;top:434.5px;width:130.5px;height:18.5px;background:#5c5c5c;border:1px solid #4c4c4c;box-sizing:border-box;"></div>
<div class="a" style="left:1857.5px;top:434px;width:16.5px;height:19.5px;background:#c4188f;border:1px solid #222;box-sizing:border-box;background-image:radial-gradient(circle,#d8a83c 0.5px,transparent 0.8px);background-size:3px 3px;background-color:#c4188f;"></div>
<svg class="a" style="left:0;top:936px" width="10" height="50"><path d="M3.5 3 V44 M5.5 4 V44" stroke="#aaa" stroke-width="1" stroke-dasharray="1 1"/></svg>
<div class="a" style="left:10px;top:937.5px;width:14px;height:16px;background:#5a5a5a;border-radius:3px;"></div>
<div class="a" style="left:26px;top:937.5px;width:123px;height:16px;background:#5e5e5e;border-radius:3px;"></div>
<div class="a" style="left:151px;top:937.5px;width:14px;height:16px;background:#5a5a5a;border-radius:3px;"></div>
<span class="t" style="left:13.5px;top:938.0px;font-size:11px;line-height:15px;color:#e6e6e6;">&lt;</span>
<span class="t" style="left:154.5px;top:938.0px;font-size:11px;line-height:15px;color:#e6e6e6;">&gt;</span>
<span class="t" style="left:69.5px;top:938.0px;font-size:11px;line-height:15px;color:#e6e6e6;transform:scaleX(1.011);">0 / 100</span>
<div class="a" style="left:9px;top:957px;width:1911px;height:1.5px;background:#1a1a1a;"></div>
<div class="a" style="left:59px;top:958.5px;width:1811px;height:25px;background:#2b2b2b;"></div>
<svg class="a" style="left:0;top:0" width="1920" height="1042" viewBox="0 0 1920 1042" shape-rendering="crispEdges"><path d="M66.5 959 V983.5" stroke="#8e8e8e" stroke-width="1"/><path d="M84.47 959 V970.5" stroke="#8e8e8e" stroke-width="1"/><path d="M102.44 959 V970.5" stroke="#8e8e8e" stroke-width="1"/><path d="M120.41 959 V970.5" stroke="#8e8e8e" stroke-width="1"/><path d="M138.38 959 V970.5" stroke="#8e8e8e" stroke-width="1"/><path d="M156.35 959 V983.5" stroke="#8e8e8e" stroke-width="1"/><path d="M174.32 959 V970.5" stroke="#8e8e8e" stroke-width="1"/><path d="M192.29 959 V970.5" stroke="#8e8e8e" stroke-width="1"/><path d="M210.26 959 V970.5" stroke="#8e8e8e" stroke-width="1"/><path d="M228.23 959 V970.5" stroke="#8e8e8e" stroke-width="1"/><path d="M246.2 959 V983.5" stroke="#8e8e8e" stroke-width="1"/><path d="M264.16999999999996 959 V970.5" stroke="#8e8e8e" stroke-width="1"/><path d="M282.14 959 V970.5" stroke="#8e8e8e" stroke-width="1"/><path d="M300.11 959 V970.5" stroke="#8e8e8e" stroke-width="1"/><path d="M318.08 959 V970.5" stroke="#8e8e8e" stroke-width="1"/><path d="M336.04999999999995 959 V983.5" stroke="#8e8e8e" stroke-width="1"/><path d="M354.02 959 V970.5" stroke="#8e8e8e" stroke-width="1"/><path d="M371.99 959 V970.5" stroke="#8e8e8e" stroke-width="1"/><path d="M389.96 959 V970.5" stroke="#8e8e8e" stroke-width="1"/><path d="M407.92999999999995 959 V970.5" stroke="#8e8e8e" stroke-width="1"/><path d="M425.9 959 V983.5" stroke="#8e8e8e" stroke-width="1"/><path d="M443.87 959 V970.5" stroke="#8e8e8e" stroke-width="1"/><path d="M461.84 959 V970.5" stroke="#8e8e8e" stroke-width="1"/><path d="M479.80999999999995 959 V970.5" stroke="#8e8e8e" stroke-width="1"/><path d="M497.78 959 V970.5" stroke="#8e8e8e" stroke-width="1"/><path d="M515.75 959 V983.5" stroke="#8e8e8e" stroke-width="1"/><path d="M533.72 959 V970.5" stroke="#8e8e8e" stroke-width="1"/><path d="M551.6899999999999 959 V970.5" stroke="#8e8e8e" stroke-width="1"/><path d="M569.66 959 V970.5" stroke="#8e8e8e" stroke-width="1"/><path d="M587.63 959 V970.5" stroke="#8e8e8e" stroke-width="1"/><path d="M605.5999999999999 959 V983.5" stroke="#8e8e8e" stroke-width="1"/><path d="M623.5699999999999 959 V970.5" stroke="#8e8e8e" stroke-width="1"/><path d="M641.54 959 V970.5" stroke="#8e8e8e" stroke-width="1"/><path d="M659.51 959 V970.5" stroke="#8e8e8e" stroke-width="1"/><path d="M677.48 959 V970.5" stroke="#8e8e8e" stroke-width="1"/><path d="M695.4499999999999 959 V983.5" stroke="#8e8e8e" stroke-width="1"/><path d="M713.42 959 V970.5" stroke="#8e8e8e" stroke-width="1"/><path d="M731.39 959 V970.5" stroke="#8e8e8e" stroke-width="1"/><path d="M749.3599999999999 959 V970.5" stroke="#8e8e8e" stroke-width="1"/><path d="M767.3299999999999 959 V970.5" stroke="#8e8e8e" stroke-width="1"/><path d="M785.3 959 V983.5" stroke="#8e8e8e" stroke-width="1"/><path d="M803.27 959 V970.5" stroke="#8e8e8e" stroke-width="1"/><path d="M821.24 959 V970.5" stroke="#8e8e8e" stroke-width="1"/><path d="M839.2099999999999 959 V970.5" stroke="#8e8e8e" stroke-width="1"/><path d="M857.18 959 V970.5" stroke="#8e8e8e" stroke-width="1"/><path d="M875.15 959 V983.5" stroke="#8e8e8e" stroke-width="1"/><path d="M893.1199999999999 959 V970.5" stroke="#8e8e8e" stroke-width="1"/><path d="M911.0899999999999 959 V970.5" stroke="#8e8e8e" stroke-width="1"/><path d="M929.06 959 V970.5" stroke="#8e8e8e" stroke-width="1"/><path d="M947.03 959 V970.5" stroke="#8e8e8e" stroke-width="1"/><path d="M965.0 959 V983.5" stroke="#8e8e8e" stroke-width="1"/><path d="M982.9699999999999 959 V970.5" stroke="#8e8e8e" stroke-width="1"/><path d="M1000.9399999999999 959 V970.5" stroke="#8e8e8e" stroke-width="1"/><path d="M1018.91 959 V970.5" stroke="#8e8e8e" stroke-width="1"/><path d="M1036.8799999999999 959 V970.5" stroke="#8e8e8e" stroke-width="1"/><path d="M1054.85 959 V983.5" stroke="#8e8e8e" stroke-width="1"/><path d="M1072.82 959 V970.5" stroke="#8e8e8e" stroke-width="1"/><path d="M1090.79 959 V970.5" stroke="#8e8e8e" stroke-width="1"/><path d="M1108.76 959 V970.5" stroke="#8e8e8e" stroke-width="1"/><path d="M1126.73 959 V970.5" stroke="#8e8e8e" stroke-width="1"/><path d="M1144.6999999999998 959 V983.5" stroke="#8e8e8e" stroke-width="1"/><path d="M1162.6699999999998 959 V970.5" stroke="#8e8e8e" stroke-width="1"/><path d="M1180.6399999999999 959 V970.5" stroke="#8e8e8e" stroke-width="1"/><path d="M1198.61 959 V970.5" stroke="#8e8e8e" stroke-width="1"/><path d="M1216.58 959 V970.5" stroke="#8e8e8e" stroke-width="1"/><path d="M1234.55 959 V983.5" stroke="#8e8e8e" stroke-width="1"/><path d="M1252.52 959 V970.5" stroke="#8e8e8e" stroke-width="1"/><path d="M1270.49 959 V970.5" stroke="#8e8e8e" stroke-width="1"/><path d="M1288.46 959 V970.5" stroke="#8e8e8e" stroke-width="1"/><path d="M1306.4299999999998 959 V970.5" stroke="#8e8e8e" stroke-width="1"/><path d="M1324.3999999999999 959 V983.5" stroke="#8e8e8e" stroke-width="1"/><path d="M1342.37 959 V970.5" stroke="#8e8e8e" stroke-width="1"/><path d="M1360.34 959 V970.5" stroke="#8e8e8e" stroke-width="1"/><path d="M1378.31 959 V970.5" stroke="#8e8e8e" stroke-width="1"/><path d="M1396.28 959 V970.5" stroke="#8e8e8e" stroke-width="1"/><path d="M1414.25 959 V983.5" stroke="#8e8e8e" stroke-width="1"/><path d="M1432.2199999999998 959 V970.5" stroke="#8e8e8e" stroke-width="1"/><path d="M1450.1899999999998 959 V970.5" stroke="#8e8e8e" stroke-width="1"/><path d="M1468.1599999999999 959 V970.5" stroke="#8e8e8e" stroke-width="1"/><path d="M1486.1299999999999 959 V970.5" stroke="#8e8e8e" stroke-width="1"/><path d="M1504.1 959 V983.5" stroke="#8e8e8e" stroke-width="1"/><path d="M1522.07 959 V970.5" stroke="#8e8e8e" stroke-width="1"/><path d="M1540.04 959 V970.5" stroke="#8e8e8e" stroke-width="1"/><path d="M1558.01 959 V970.5" stroke="#8e8e8e" stroke-width="1"/><path d="M1575.98 959 V970.5" stroke="#8e8e8e" stroke-width="1"/><path d="M1593.9499999999998 959 V983.5" stroke="#8e8e8e" stroke-width="1"/><path d="M1611.9199999999998 959 V970.5" stroke="#8e8e8e" stroke-width="1"/><path d="M1629.8899999999999 959 V970.5" stroke="#8e8e8e" stroke-width="1"/><path d="M1647.86 959 V970.5" stroke="#8e8e8e" stroke-width="1"/><path d="M1665.83 959 V970.5" stroke="#8e8e8e" stroke-width="1"/><path d="M1683.8 959 V983.5" stroke="#8e8e8e" stroke-width="1"/><path d="M1701.77 959 V970.5" stroke="#8e8e8e" stroke-width="1"/><path d="M1719.7399999999998 959 V970.5" stroke="#8e8e8e" stroke-width="1"/><path d="M1737.7099999999998 959 V970.5" stroke="#8e8e8e" stroke-width="1"/><path d="M1755.6799999999998 959 V970.5" stroke="#8e8e8e" stroke-width="1"/><path d="M1773.6499999999999 959 V983.5" stroke="#8e8e8e" stroke-width="1"/><path d="M1791.62 959 V970.5" stroke="#8e8e8e" stroke-width="1"/><path d="M1809.59 959 V970.5" stroke="#8e8e8e" stroke-width="1"/><path d="M1827.56 959 V970.5" stroke="#8e8e8e" stroke-width="1"/><path d="M1845.53 959 V970.5" stroke="#8e8e8e" stroke-width="1"/><path d="M1863.5 959 V983.5" stroke="#8e8e8e" stroke-width="1"/><rect x="63" y="959" width="7" height="24.5" fill="#8a6d1e"/><path d="M66.5 959 V972" stroke="#d8c070" stroke-width="1"/><path d="M24.5 966 V975" stroke="#ddd" stroke-width="2.5" stroke-dasharray="1 1"/><path d="M28 970 Q30 964 32.5 971 T36.5 973" fill="none" stroke="#41b8bf" stroke-width="1.4"/></svg>
<span class="t" style="left:62.5px;top:969.8px;font-size:10.5px;line-height:14.5px;color:#caa850;">0</span>
<span class="t" style="left:153.4px;top:969.8px;font-size:10.5px;line-height:14.5px;color:#e0e0e0;">5</span>
<span class="t" style="left:240.4px;top:969.8px;font-size:10.5px;line-height:14.5px;color:#e0e0e0;">10</span>
<span class="t" style="left:330.2px;top:969.8px;font-size:10.5px;line-height:14.5px;color:#e0e0e0;">15</span>
<span class="t" style="left:420.1px;top:969.8px;font-size:10.5px;line-height:14.5px;color:#e0e0e0;">20</span>
<span class="t" style="left:509.9px;top:969.8px;font-size:10.5px;line-height:14.5px;color:#e0e0e0;">25</span>
<span class="t" style="left:599.8px;top:969.8px;font-size:10.5px;line-height:14.5px;color:#e0e0e0;">30</span>
<span class="t" style="left:689.6px;top:969.8px;font-size:10.5px;line-height:14.5px;color:#e0e0e0;">35</span>
<span class="t" style="left:779.5px;top:969.8px;font-size:10.5px;line-height:14.5px;color:#e0e0e0;">40</span>
<span class="t" style="left:869.3px;top:969.8px;font-size:10.5px;line-height:14.5px;color:#e0e0e0;">45</span>
<span class="t" style="left:959.2px;top:969.8px;font-size:10.5px;line-height:14.5px;color:#e0e0e0;">50</span>
<span class="t" style="left:1049.0px;top:969.8px;font-size:10.5px;line-height:14.5px;color:#e0e0e0;">55</span>
<span class="t" style="left:1138.9px;top:969.8px;font-size:10.5px;line-height:14.5px;color:#e0e0e0;">60</span>
<span class="t" style="left:1228.7px;top:969.8px;font-size:10.5px;line-height:14.5px;color:#e0e0e0;">65</span>
<span class="t" style="left:1318.6px;top:969.8px;font-size:10.5px;line-height:14.5px;color:#e0e0e0;">70</span>
<span class="t" style="left:1408.4px;top:969.8px;font-size:10.5px;line-height:14.5px;color:#e0e0e0;">75</span>
<span class="t" style="left:1498.3px;top:969.8px;font-size:10.5px;line-height:14.5px;color:#e0e0e0;">80</span>
<span class="t" style="left:1588.1px;top:969.8px;font-size:10.5px;line-height:14.5px;color:#e0e0e0;">85</span>
<span class="t" style="left:1678.0px;top:969.8px;font-size:10.5px;line-height:14.5px;color:#e0e0e0;">90</span>
<span class="t" style="left:1767.8px;top:969.8px;font-size:10.5px;line-height:14.5px;color:#e0e0e0;">95</span>
<span class="t" style="left:1853.7px;top:969.8px;font-size:10.5px;line-height:14.5px;color:#e0e0e0;">100</span>
<div class="a" style="left:4px;top:988.5px;width:99px;height:47px;background:#d8d8d8;"></div>
<div class="a" style="left:6px;top:990.5px;width:95px;height:19.5px;background:#dfc6c6;"></div>
<div class="a" style="left:6px;top:1013px;width:95px;height:20.5px;background:#ffffff;border-top:1px solid #888;box-sizing:border-box;"></div>
<span class="t" style="left:10.0px;top:1015.0px;font-size:12px;line-height:16px;color:#7a8a8a;font-family:'Liberation Mono',monospace;transform:scaleX(0.929);">MAXScript Mi:</span>
<div class="a" style="left:105px;top:988px;width:1.5px;height:49px;background:#1e1e1e;"></div>
<span class="t" style="left:111.0px;top:993.8px;font-size:11.5px;line-height:15.5px;color:#f0f0f0;transform:scaleX(0.928);">None Selected</span>
<span class="t" style="left:111.0px;top:1019.2px;font-size:11.5px;line-height:15.5px;color:#f0f0f0;transform:scaleX(0.938);">Click or click-and-drag to select objects</span>
<div class="a" style="left:0px;top:1040px;width:1920px;height:2px;background:#efefe6;"></div>
<div class="a" style="left:48px;top:1040px;width:288px;height:2px;background:#ffffff;"></div>
<div class="a" style="left:1300px;top:1040px;width:620px;height:2px;background:#d8f2f2;"></div>
<svg class="a" style="left:0;top:0" width="1920" height="1042" viewBox="0 0 1920 1042"><g opacity="0.45"><path d="M1025 994.5 V992.5 H1028 M1037 992.5 H1040 V994.5 M1025 1004 V1006.5 H1028 M1037 1006.5 H1040 V1004" fill="none" stroke="#aaa" stroke-width="1"/><rect x="1028" y="995.5" width="9" height="9" rx="2" fill="#333"/><rect x="1054" y="999" width="9" height="8" fill="#555" stroke="#888" stroke-width="0.8"/><path d="M1056 999 V996.5 Q1058.5 993.5 1061 996.5 V999" fill="none" stroke="#888" stroke-width="1.2"/></g><rect x="1079" y="994" width="14" height="14" fill="none" stroke="#f0f0f0" stroke-width="1.3"/><circle cx="1086" cy="1001" r="3" fill="none" stroke="#f0f0f0" stroke-width="1.4"/><path d="M1086 994 V998 M1086 1004 V1008 M1079 1001 H1083 M1089 1001 H1093" stroke="#f0f0f0" stroke-width="1.6"/><rect x="1115" y="992.5" width="57" height="17" fill="#575757"/><rect x="1199" y="992.5" width="57" height="17" fill="#575757"/><rect x="1283" y="992.5" width="57" height="17" fill="#575757"/><path d="M1328.5 1017.5 V1035.5" stroke="#1e1e1e" stroke-width="1.2"/><rect x="1330" y="1016" width="21" height="20" rx="3" fill="#5b8bd8"/><path d="M1340.5 1019.5 L1346.5 1022.5 V1029.5 L1340.5 1032.5 L1334.5 1029.5 V1022.5 Z" fill="#4a4a4a" stroke="#f0f0f0" stroke-width="1.1"/><path d="M1334.5 1022.5 L1340.5 1025.5 L1346.5 1022.5 M1340.5 1025.5 V1032.5" fill="none" stroke="#f0f0f0" stroke-width="1"/><path d="M1469 996 V1007" stroke="#e6e6e6" stroke-width="1.8"/><path d="M1476 996 V1007 L1470.5 1001.5 Z M1483 996 V1007 L1477.5 1001.5 Z" fill="#e6e6e6"/><path d="M1489.5 993.5 V1009.5" stroke="#1e1e1e" stroke-width="1.2"/><path d="M1501.5 996.5 V1006.5 L1495.5 1001.5 Z" fill="#e6e6e6"/><path d="M1504 996 V1007 M1507.5 996 V1007" stroke="#e6e6e6" stroke-width="1.8"/><path d="M1519 994 V1008.5 L1530.5 1001.2 Z" fill="#e6e6e6"/><path d="M1536 1011 h-4 l4 -4 z" fill="#e8e0d0"/><path d="M1542 996 V1007 M1545.5 996 V1007" stroke="#e6e6e6" stroke-width="1.8"/><path d="M1548 996.5 V1006.5 L1554 1001.5 Z" fill="#e6e6e6"/><path d="M1561.5 993.5 V1009.5" stroke="#1e1e1e" stroke-width="1.2"/><path d="M1567 996 V1007 L1572.5 1001.5 Z M1574 996 V1007 L1579.5 1001.5 Z" fill="#e6e6e6"/><path d="M1581 996 V1007" stroke="#e6e6e6" stroke-width="1.8"/><path d="M1475 1019.5 V1026.5 L1470.5 1023 Z M1478 1019.5 V1026.5 L1482.5 1023 Z" fill="#e6e6e6"/><path d="M1489.5 1015.5 V1031.5 M1562.5 1015.5 V1031.5" stroke="#1e1e1e" stroke-width="1.2"/><rect x="1492" y="1015" width="68" height="16" fill="#5e5e5e"/><path d="M1554.5 1019 l2.2 3 h-4.4 z M1554.5 1027.5 l2.2 -3 h-4.4 z" fill="#ddd"/><circle cx="1572.5" cy="1020.5" r="4.8" fill="#e6e6e6"/><path d="M1572.5 1017 V1021 H1575.5" stroke="#444" stroke-width="1" fill="none"/><circle cx="1578" cy="1026" r="3.2" fill="#444" stroke="#f4a914" stroke-width="2" stroke-dasharray="1.6 0.9"/><rect x="1597" y="991" width="42" height="42" rx="3" fill="#5a5a5a"/><path d="M1615.5 998 V1022 M1603.5 1010 H1627.5" stroke="#f0f0f0" stroke-width="5.5"/><circle cx="1621.5" cy="1020.5" r="2.6" fill="none" stroke="#41b8bf" stroke-width="1.6"/><path d="M1623.5 1018.5 L1630.5 1012 M1627.5 1014.8 L1629.5 1017 M1629.3 1013.2 L1631 1015" stroke="#41b8bf" stroke-width="1.5" fill="none"/><rect x="1644" y="991.5" width="46" height="19" rx="2.5" fill="#5c5c5c"/><rect x="1644" y="1013.5" width="46" height="19.5" rx="2.5" fill="#5c5c5c"/><rect x="1695" y="991" width="114" height="19" fill="#646464"/><path d="M1796 999 h6 l-3 4 z" fill="#eee"/><rect x="1721" y="1014" width="88" height="19" rx="2.5" fill="#5c5c5c"/><rect x="1703.5" y="1017.5" width="4" height="4" fill="none" stroke="#eee" stroke-width="1"/><circle cx="1699.5" cy="1019.5" r="1.3" fill="#eee"/><circle cx="1711.5" cy="1019.5" r="1.3" fill="#eee"/><path d="M1702 1022.5 Q1699 1026 1699 1030.5 M1709 1022.5 Q1712 1026 1712 1030.5" fill="none" stroke="#41b8bf" stroke-width="1.6"/><path d="M1716 1033.5 h-4 l4 -4 z" fill="#e8e0d0"/><rect x="1822" y="998.5" width="5" height="4.5" fill="#41b8bf"/><path d="M1827 999 l3 1 v1.5 l-3 1z" fill="#41b8bf"/><path d="M1833 995.5 V1007" stroke="#e6e6e6" stroke-width="1.5"/><path d="M1833 993.5 l2.6 3.4 h-5.2z M1833 1009 l2.6 -3.4 h-5.2z" fill="#e6e6e6"/><path d="M1840 1011 h-4 l4 -4 z" fill="#e8e0d0"/><path d="M1846 999 L1853 994.5 L1860 999 M1849 998 V1004 M1853 995 V1004 M1857 998 V1004" fill="none" stroke="#e6e6e6" stroke-width="1.5"/><rect x="1850.5" y="1002" width="7" height="5.5" fill="#f4a914"/><path d="M1857.5 1004 l2.5 -1.5 v4.5 l-2.5 -1.5z" fill="#f4a914"/><path d="M1871 1004 Q1868 999 1872 994.5 M1879.5 994.5 Q1883.5 999 1880.5 1004" fill="none" stroke="#e6e6e6" stroke-width="1.8"/><path d="M1869 994 h4.5 l-1 4z M1878 994 h4.5 l-3.4 4z" fill="#e6e6e6"/><rect x="1873" y="1002.5" width="7" height="5.5" fill="#f4a914"/><path d="M1880 1004.5 l2.5 -1.5 v4.5 l-2.5 -1.5z" fill="#f4a914"/><path d="M1899 995.5 l3.5 -2 l3.5 2 v8 l-3.5 2 l-3.5 -2z" fill="#41b8bf"/><path d="M1899 995.5 l3.5 2 l3.5 -2" fill="none" stroke="#2a7a80" stroke-width="0.7"/><path d="M1892 1002 l3 -2.5 l2.5 2.5 l-3 2.5z M1896 1006 l3 -2.5 l2.5 2.5 l-3 2.5z" fill="#e6e6e6"/><path d="M1909.5 1011 h-4 l4 -4 z" fill="#e8e0d0"/><path d="M1827 1018 L1836.5 1023.5 L1827 1029.5 L1830.5 1023.5" fill="none" stroke="#e6e6e6" stroke-width="1.5"/><circle cx="1852.5" cy="1018.5" r="1.7" fill="#e6e6e6"/><path d="M1852.5 1020.5 L1851.5 1026 L1848.5 1031 M1851.5 1026 L1855 1031 M1849 1023 L1852.5 1021.5 L1856 1024.5" fill="none" stroke="#e6e6e6" stroke-width="1.5"/><path d="M1863 1033.5 h-4 l4 -4 z" fill="#e8e0d0"/><circle cx="1877" cy="1022.5" r="5.5" fill="#e6e6e6"/><ellipse cx="1877" cy="1022.5" rx="9" ry="3" fill="none" stroke="#e6e6e6" stroke-width="1.1" transform="rotate(-25 1877 1022.5)"/><rect x="1874" y="1025.5" width="7.5" height="5.5" fill="#f4a914"/><path d="M1881.5 1027.5 l2.5 -1.5 v4.5 l-2.5 -1.5z" fill="#f4a914"/><path d="M1886.5 1033.5 h-4 l4 -4 z" fill="#e8e0d0"/><rect x="1892" y="1017" width="14" height="14" fill="none" stroke="#e6e6e6" stroke-width="1.4"/><rect x="1892" y="1025" width="6.5" height="6" fill="#e6e6e6"/><path d="M1897.5 1025.5 L1903.5 1019.5 M1899.5 1019.5 H1903.5 V1023.5" fill="none" stroke="#e6e6e6" stroke-width="1.5"/></svg>
<span class="t" style="left:1100.0px;top:993.8px;font-size:11.5px;line-height:15.5px;color:#f0f0f0;transform:scaleX(0.920);">X:</span>
<span class="t" style="left:1184.0px;top:993.8px;font-size:11.5px;line-height:15.5px;color:#f0f0f0;transform:scaleX(0.977);">Y:</span>
<span class="t" style="left:1268.0px;top:993.8px;font-size:11.5px;line-height:15.5px;color:#f0f0f0;transform:scaleX(0.978);">Z:</span>
<span class="t" style="left:1355.0px;top:993.8px;font-size:11.5px;line-height:15.5px;color:#f0f0f0;transform:scaleX(0.960);">Grid = 0.0m</span>
<span class="t" style="left:1355.5px;top:1019.2px;font-size:11.5px;line-height:15.5px;color:#f0f0f0;transform:scaleX(0.927);">Add Time Tag</span>
<span class="t" style="left:1495.0px;top:1016.0px;font-size:11px;line-height:15px;color:#e6e6e6;">0</span>
<span class="t" style="left:1644.5px;top:993.8px;font-size:11.5px;line-height:15.5px;color:#e8e8e8;transform:scaleX(0.943);">Auto Key</span>
<span class="t" style="left:1647.0px;top:1015.8px;font-size:11.5px;line-height:15.5px;color:#e8e8e8;transform:scaleX(0.944);">Set Key</span>
<span class="t" style="left:1699.0px;top:993.2px;font-size:11.5px;line-height:15.5px;color:#f0f0f0;transform:scaleX(0.939);">Selected</span>
<span class="t" style="left:1733.0px;top:1016.8px;font-size:11.5px;line-height:15.5px;color:#f0f0f0;transform:scaleX(0.970);">Key Filters...</span>
<span class="t" style="left:1600.0px;top:946.8px;font-size:19.5px;line-height:23.5px;color:rgba(200,200,200,0.62);transform:scaleX(1.014);">Activate Windows</span>
<span class="t" style="left:1600.0px;top:971.8px;font-size:14.5px;line-height:18.5px;color:rgba(200,200,200,0.62);transform:scaleX(1.022);">Go to Settings to activate Windows.</span>
<svg class="a" style="left:836px;top:905px;opacity:0.3" width="250" height="125" viewBox="836 905 250 125"><g fill="none" stroke="#fff" stroke-width="10.6" stroke-linecap="round"><path d="M884 920.7 V970.5" /><path d="M867.5 944.6 A16.2 16.2 0 1 0 883.7 960.8" /><path d="M884 970.5 H1046" /><circle cx="921.5" cy="954.3" r="15.3" /><path d="M961.3 952 V970.5" /><path d="M985.7 954.5 V970.5" /><path d="M1003.3 948 V970.5" /><path d="M1018.3 946.8 V970.5" /><circle cx="1053.4" cy="960.3" r="15.6" /><circle cx="913.8" cy="922.3" r="6.9" fill="#fff" stroke="none"/><circle cx="930" cy="922.3" r="6.9" fill="#fff" stroke="none"/><circle cx="953.8" cy="936.2" r="6.9" fill="#fff" stroke="none"/><circle cx="970" cy="936.2" r="6.9" fill="#fff" stroke="none"/></g></svg>
<span class="t" style="left:845px;top:981.3px;font-size:35px;line-height:35px;font-weight:bold;color:#fff;opacity:0.3;transform:scaleX(1.063);transform-origin:0 50%">mostaql.com</span>
</body></html>
